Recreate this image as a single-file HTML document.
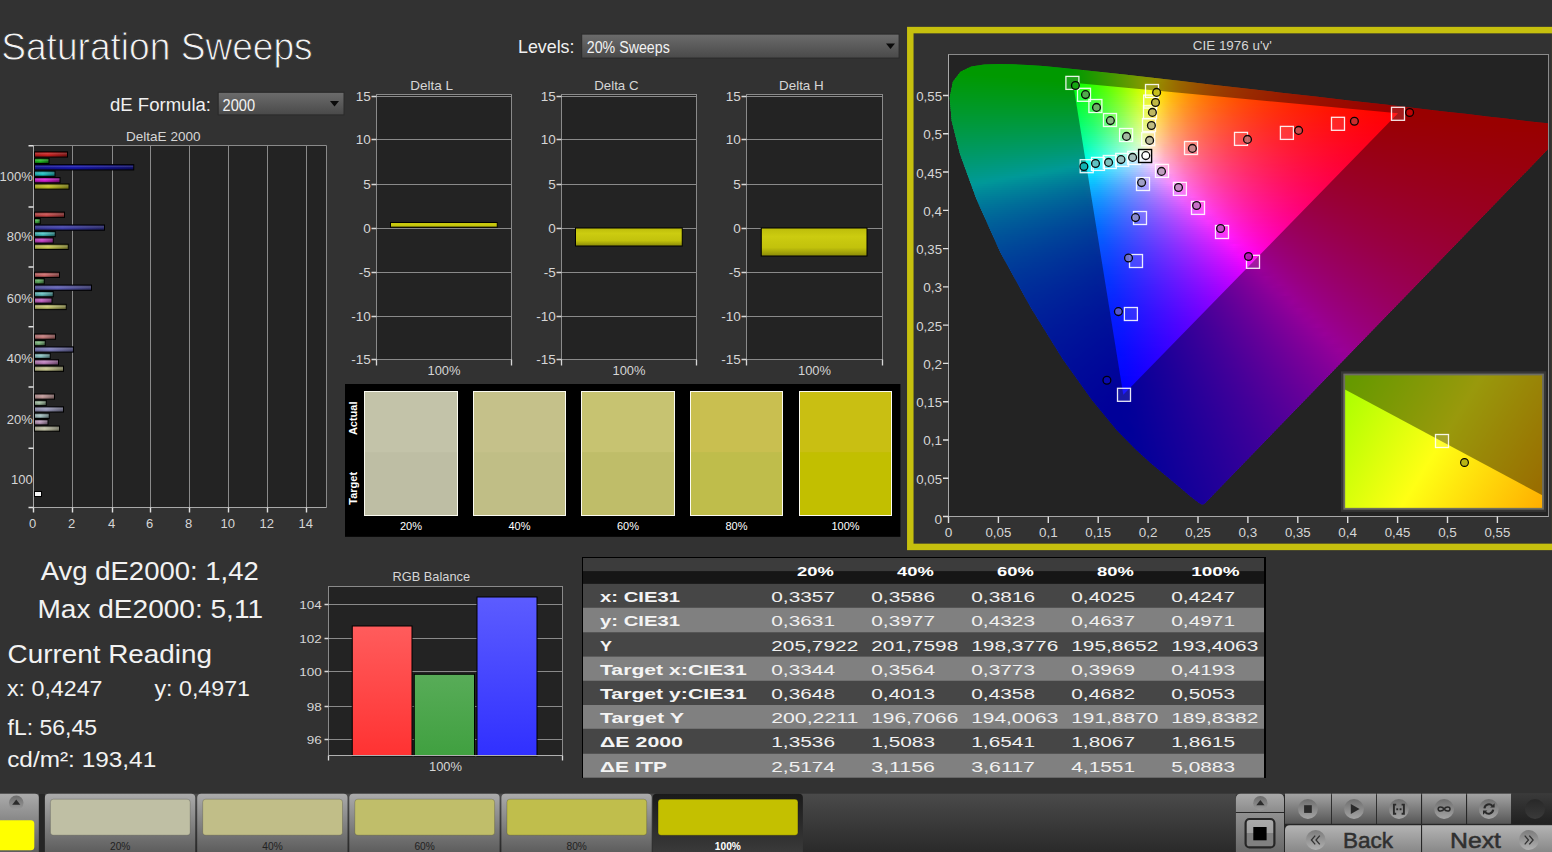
<!DOCTYPE html><html><head><meta charset="utf-8"><title>Saturation Sweeps</title>
<style>html,body{margin:0;padding:0;background:#323232;overflow:hidden}body{width:1552px;height:852px;position:relative;font-family:"Liberation Sans",sans-serif}svg{position:absolute;left:0;top:0;display:block}text{font-family:"Liberation Sans",sans-serif}</style></head><body>
<svg width="1552" height="852" viewBox="0 0 1552 852">
<defs><linearGradient id="dd" x1="0" y1="0" x2="0" y2="1"><stop offset="0" stop-color="#6c6c6c"/><stop offset="1" stop-color="#494949"/></linearGradient><linearGradient id="cyl" x1="0" y1="0" x2="0" y2="1"><stop offset="0" stop-color="#000" stop-opacity="0.3"/><stop offset="0.4" stop-color="#fff" stop-opacity="0.16"/><stop offset="0.65" stop-color="#000" stop-opacity="0"/><stop offset="1" stop-color="#000" stop-opacity="0.38"/></linearGradient><linearGradient id="b0"><stop offset="0" stop-color="#ac1a1a"/><stop offset="0.4" stop-color="#d22020"/><stop offset="1" stop-color="#7e1313"/></linearGradient><linearGradient id="b1"><stop offset="0" stop-color="#1a961a"/><stop offset="0.4" stop-color="#20b820"/><stop offset="1" stop-color="#136e13"/></linearGradient><linearGradient id="b2"><stop offset="0" stop-color="#121290"/><stop offset="0.4" stop-color="#1616b0"/><stop offset="1" stop-color="#0d0d69"/></linearGradient><linearGradient id="b3"><stop offset="0" stop-color="#1aa4a4"/><stop offset="0.4" stop-color="#20c8c8"/><stop offset="1" stop-color="#137878"/></linearGradient><linearGradient id="b4"><stop offset="0" stop-color="#b11ab1"/><stop offset="0.4" stop-color="#d820d8"/><stop offset="1" stop-color="#811381"/></linearGradient><linearGradient id="b5"><stop offset="0" stop-color="#a7a720"/><stop offset="0.4" stop-color="#cccc28"/><stop offset="1" stop-color="#7a7a18"/></linearGradient><linearGradient id="b6"><stop offset="0" stop-color="#a73c3c"/><stop offset="0.4" stop-color="#cc4a4a"/><stop offset="1" stop-color="#7a2c2c"/></linearGradient><linearGradient id="b7"><stop offset="0" stop-color="#3b933b"/><stop offset="0.4" stop-color="#48b448"/><stop offset="1" stop-color="#2b6c2b"/></linearGradient><linearGradient id="b8"><stop offset="0" stop-color="#343490"/><stop offset="0.4" stop-color="#4040b0"/><stop offset="1" stop-color="#262669"/></linearGradient><linearGradient id="b9"><stop offset="0" stop-color="#3ba0a0"/><stop offset="0.4" stop-color="#48c4c4"/><stop offset="1" stop-color="#2b7575"/></linearGradient><linearGradient id="b10"><stop offset="0" stop-color="#aa3baa"/><stop offset="0.4" stop-color="#d048d0"/><stop offset="1" stop-color="#7c2b7c"/></linearGradient><linearGradient id="b11"><stop offset="0" stop-color="#a5a543"/><stop offset="0.4" stop-color="#caca52"/><stop offset="1" stop-color="#797931"/></linearGradient><linearGradient id="b12"><stop offset="0" stop-color="#a75353"/><stop offset="0.4" stop-color="#cc6666"/><stop offset="1" stop-color="#7a3d3d"/></linearGradient><linearGradient id="b13"><stop offset="0" stop-color="#529352"/><stop offset="0.4" stop-color="#64b464"/><stop offset="1" stop-color="#3c6c3c"/></linearGradient><linearGradient id="b14"><stop offset="0" stop-color="#4e4e96"/><stop offset="0.4" stop-color="#6060b8"/><stop offset="1" stop-color="#39396e"/></linearGradient><linearGradient id="b15"><stop offset="0" stop-color="#55a0a0"/><stop offset="0.4" stop-color="#68c4c4"/><stop offset="1" stop-color="#3e7575"/></linearGradient><linearGradient id="b16"><stop offset="0" stop-color="#a755a7"/><stop offset="0.4" stop-color="#cc68cc"/><stop offset="1" stop-color="#7a3e7a"/></linearGradient><linearGradient id="b17"><stop offset="0" stop-color="#a4a45b"/><stop offset="0.4" stop-color="#c8c870"/><stop offset="1" stop-color="#787843"/></linearGradient><linearGradient id="b18"><stop offset="0" stop-color="#a76868"/><stop offset="0.4" stop-color="#cc8080"/><stop offset="1" stop-color="#7a4c4c"/></linearGradient><linearGradient id="b19"><stop offset="0" stop-color="#689868"/><stop offset="0.4" stop-color="#80ba80"/><stop offset="1" stop-color="#4c6f4c"/></linearGradient><linearGradient id="b20"><stop offset="0" stop-color="#68689d"/><stop offset="0.4" stop-color="#8080c0"/><stop offset="1" stop-color="#4c4c73"/></linearGradient><linearGradient id="b21"><stop offset="0" stop-color="#6f9f9f"/><stop offset="0.4" stop-color="#88c2c2"/><stop offset="1" stop-color="#517474"/></linearGradient><linearGradient id="b22"><stop offset="0" stop-color="#a46fa4"/><stop offset="0.4" stop-color="#c888c8"/><stop offset="1" stop-color="#785178"/></linearGradient><linearGradient id="b23"><stop offset="0" stop-color="#a4a476"/><stop offset="0.4" stop-color="#c8c890"/><stop offset="1" stop-color="#787856"/></linearGradient><linearGradient id="b24"><stop offset="0" stop-color="#a58383"/><stop offset="0.4" stop-color="#caa0a0"/><stop offset="1" stop-color="#796060"/></linearGradient><linearGradient id="b25"><stop offset="0" stop-color="#839a83"/><stop offset="0.4" stop-color="#a0bca0"/><stop offset="1" stop-color="#607060"/></linearGradient><linearGradient id="b26"><stop offset="0" stop-color="#8383a0"/><stop offset="0.4" stop-color="#a0a0c4"/><stop offset="1" stop-color="#606075"/></linearGradient><linearGradient id="b27"><stop offset="0" stop-color="#869f9f"/><stop offset="0.4" stop-color="#a4c2c2"/><stop offset="1" stop-color="#627474"/></linearGradient><linearGradient id="b28"><stop offset="0" stop-color="#9f839f"/><stop offset="0.4" stop-color="#c2a0c2"/><stop offset="1" stop-color="#746074"/></linearGradient><linearGradient id="b29"><stop offset="0" stop-color="#a4a48d"/><stop offset="0.4" stop-color="#c8c8ac"/><stop offset="1" stop-color="#787867"/></linearGradient><linearGradient id="yb" x1="0" y1="0" x2="0" y2="1"><stop offset="0" stop-color="#bcbc0a"/><stop offset="0.3" stop-color="#cccc10"/><stop offset="0.7" stop-color="#c2c20c"/><stop offset="1" stop-color="#8a8a08"/></linearGradient><linearGradient id="rr" x1="0" y1="0" x2="0" y2="1"><stop offset="0" stop-color="#ff5c5c"/><stop offset="1" stop-color="#ff3232"/></linearGradient><linearGradient id="gg" x1="0" y1="0" x2="0" y2="1"><stop offset="0" stop-color="#58ac58"/><stop offset="1" stop-color="#40a040"/></linearGradient><linearGradient id="bb" x1="0" y1="0" x2="0" y2="1"><stop offset="0" stop-color="#5c5cff"/><stop offset="1" stop-color="#3030ff"/></linearGradient><linearGradient id="c0" gradientUnits="userSpaceOnUse" x1="973.6" x2="1042.3" y1="0" y2="0"><stop offset="0.000" stop-color="#00ff00"/><stop offset="0.200" stop-color="#00ff00"/><stop offset="0.400" stop-color="#00ff00"/><stop offset="0.600" stop-color="#00ff00"/><stop offset="0.800" stop-color="#00ff00"/><stop offset="1.000" stop-color="#00ff00"/></linearGradient><linearGradient id="c1" gradientUnits="userSpaceOnUse" x1="967.2" x2="1064.4" y1="0" y2="0"><stop offset="0.000" stop-color="#00ff00"/><stop offset="0.143" stop-color="#00ff00"/><stop offset="0.286" stop-color="#00ff00"/><stop offset="0.429" stop-color="#00ff00"/><stop offset="0.571" stop-color="#00ff00"/><stop offset="0.714" stop-color="#00ff00"/><stop offset="0.857" stop-color="#00ff00"/><stop offset="1.000" stop-color="#00ff00"/></linearGradient><linearGradient id="c2" gradientUnits="userSpaceOnUse" x1="963.0" x2="1084.0" y1="0" y2="0"><stop offset="0.000" stop-color="#00ff00"/><stop offset="0.125" stop-color="#00ff00"/><stop offset="0.250" stop-color="#00ff00"/><stop offset="0.375" stop-color="#00ff00"/><stop offset="0.500" stop-color="#00ff00"/><stop offset="0.625" stop-color="#00ff00"/><stop offset="0.750" stop-color="#00ff00"/><stop offset="0.875" stop-color="#00ff00"/><stop offset="1.000" stop-color="#21ff00"/></linearGradient><linearGradient id="c3" gradientUnits="userSpaceOnUse" x1="959.3" x2="1102.5" y1="0" y2="0"><stop offset="0.000" stop-color="#00ff00"/><stop offset="0.111" stop-color="#00ff00"/><stop offset="0.222" stop-color="#00ff00"/><stop offset="0.333" stop-color="#00ff00"/><stop offset="0.444" stop-color="#00ff00"/><stop offset="0.556" stop-color="#00ff00"/><stop offset="0.667" stop-color="#00ff00"/><stop offset="0.778" stop-color="#00ff00"/><stop offset="0.889" stop-color="#27ff00"/><stop offset="1.000" stop-color="#52ff00"/></linearGradient><linearGradient id="c4" gradientUnits="userSpaceOnUse" x1="957.7" x2="1120.3" y1="0" y2="0"><stop offset="0.000" stop-color="#00ff02"/><stop offset="0.091" stop-color="#00ff00"/><stop offset="0.182" stop-color="#00ff00"/><stop offset="0.273" stop-color="#00ff00"/><stop offset="0.364" stop-color="#00ff00"/><stop offset="0.455" stop-color="#00ff00"/><stop offset="0.545" stop-color="#00ff00"/><stop offset="0.636" stop-color="#00ff00"/><stop offset="0.727" stop-color="#0bff00"/><stop offset="0.818" stop-color="#31ff00"/><stop offset="0.909" stop-color="#5bff00"/><stop offset="1.000" stop-color="#88ff00"/></linearGradient><linearGradient id="c5" gradientUnits="userSpaceOnUse" x1="956.2" x2="1138.0" y1="0" y2="0"><stop offset="0.000" stop-color="#00ff05"/><stop offset="0.083" stop-color="#00ff03"/><stop offset="0.167" stop-color="#00ff01"/><stop offset="0.250" stop-color="#00ff00"/><stop offset="0.333" stop-color="#00ff00"/><stop offset="0.417" stop-color="#00ff00"/><stop offset="0.500" stop-color="#00ff00"/><stop offset="0.583" stop-color="#00ff00"/><stop offset="0.667" stop-color="#0eff00"/><stop offset="0.750" stop-color="#36ff00"/><stop offset="0.833" stop-color="#61ff00"/><stop offset="0.917" stop-color="#91ff00"/><stop offset="1.000" stop-color="#c5ff00"/></linearGradient><linearGradient id="c6" gradientUnits="userSpaceOnUse" x1="954.7" x2="1155.6" y1="0" y2="0"><stop offset="0.000" stop-color="#00ff09"/><stop offset="0.077" stop-color="#00ff07"/><stop offset="0.154" stop-color="#00ff04"/><stop offset="0.231" stop-color="#00ff02"/><stop offset="0.308" stop-color="#00ff00"/><stop offset="0.385" stop-color="#00ff00"/><stop offset="0.462" stop-color="#00ff00"/><stop offset="0.538" stop-color="#00ff00"/><stop offset="0.615" stop-color="#10ff00"/><stop offset="0.692" stop-color="#39ff00"/><stop offset="0.769" stop-color="#65ff00"/><stop offset="0.846" stop-color="#97ff00"/><stop offset="0.923" stop-color="#cdff00"/><stop offset="1.000" stop-color="#fff500"/></linearGradient><linearGradient id="c7" gradientUnits="userSpaceOnUse" x1="953.2" x2="1173.0" y1="0" y2="0"><stop offset="0.000" stop-color="#00ff0d"/><stop offset="0.071" stop-color="#00ff0b"/><stop offset="0.143" stop-color="#00ff08"/><stop offset="0.214" stop-color="#00ff06"/><stop offset="0.286" stop-color="#00ff03"/><stop offset="0.357" stop-color="#00ff00"/><stop offset="0.429" stop-color="#00ff00"/><stop offset="0.500" stop-color="#00ff00"/><stop offset="0.571" stop-color="#10ff00"/><stop offset="0.643" stop-color="#3aff00"/><stop offset="0.714" stop-color="#68ff00"/><stop offset="0.786" stop-color="#9bff00"/><stop offset="0.857" stop-color="#d3ff00"/><stop offset="0.929" stop-color="#ffee00"/><stop offset="1.000" stop-color="#ffbd00"/></linearGradient><linearGradient id="c8" gradientUnits="userSpaceOnUse" x1="951.8" x2="1190.3" y1="0" y2="0"><stop offset="0.000" stop-color="#00ff10"/><stop offset="0.067" stop-color="#00ff0e"/><stop offset="0.133" stop-color="#00ff0c"/><stop offset="0.200" stop-color="#00ff0a"/><stop offset="0.267" stop-color="#00ff07"/><stop offset="0.333" stop-color="#00ff04"/><stop offset="0.400" stop-color="#00ff01"/><stop offset="0.467" stop-color="#00ff00"/><stop offset="0.533" stop-color="#10ff00"/><stop offset="0.600" stop-color="#3bff00"/><stop offset="0.667" stop-color="#6aff00"/><stop offset="0.733" stop-color="#9eff00"/><stop offset="0.800" stop-color="#d7ff00"/><stop offset="0.867" stop-color="#ffe900"/><stop offset="0.933" stop-color="#ffb900"/><stop offset="1.000" stop-color="#ff9600"/></linearGradient><linearGradient id="c9" gradientUnits="userSpaceOnUse" x1="951.4" x2="1207.6" y1="0" y2="0"><stop offset="0.000" stop-color="#00ff14"/><stop offset="0.059" stop-color="#00ff12"/><stop offset="0.118" stop-color="#00ff10"/><stop offset="0.176" stop-color="#00ff0e"/><stop offset="0.235" stop-color="#00ff0c"/><stop offset="0.294" stop-color="#00ff09"/><stop offset="0.353" stop-color="#00ff07"/><stop offset="0.412" stop-color="#00ff04"/><stop offset="0.471" stop-color="#00ff01"/><stop offset="0.529" stop-color="#24ff00"/><stop offset="0.588" stop-color="#4fff00"/><stop offset="0.647" stop-color="#7eff00"/><stop offset="0.706" stop-color="#b1ff00"/><stop offset="0.765" stop-color="#eaff00"/><stop offset="0.824" stop-color="#ffda00"/><stop offset="0.882" stop-color="#ffb000"/><stop offset="0.941" stop-color="#ff9100"/><stop offset="1.000" stop-color="#ff7800"/></linearGradient><linearGradient id="c10" gradientUnits="userSpaceOnUse" x1="951.0" x2="1224.9" y1="0" y2="0"><stop offset="0.000" stop-color="#00ff18"/><stop offset="0.056" stop-color="#00ff16"/><stop offset="0.111" stop-color="#00ff14"/><stop offset="0.167" stop-color="#00ff12"/><stop offset="0.222" stop-color="#00ff10"/><stop offset="0.278" stop-color="#00ff0d"/><stop offset="0.333" stop-color="#00ff0b"/><stop offset="0.389" stop-color="#00ff08"/><stop offset="0.444" stop-color="#00ff05"/><stop offset="0.500" stop-color="#26ff02"/><stop offset="0.556" stop-color="#52ff00"/><stop offset="0.611" stop-color="#82ff00"/><stop offset="0.667" stop-color="#b6ff00"/><stop offset="0.722" stop-color="#f1ff00"/><stop offset="0.778" stop-color="#ffd400"/><stop offset="0.833" stop-color="#ffab00"/><stop offset="0.889" stop-color="#ff8c00"/><stop offset="0.944" stop-color="#ff7500"/><stop offset="1.000" stop-color="#ff6200"/></linearGradient><linearGradient id="c11" gradientUnits="userSpaceOnUse" x1="950.6" x2="1242.2" y1="0" y2="0"><stop offset="0.000" stop-color="#00ff1b"/><stop offset="0.053" stop-color="#00ff19"/><stop offset="0.105" stop-color="#00ff18"/><stop offset="0.158" stop-color="#00ff16"/><stop offset="0.211" stop-color="#00ff14"/><stop offset="0.263" stop-color="#00ff12"/><stop offset="0.316" stop-color="#00ff0f"/><stop offset="0.368" stop-color="#00ff0d"/><stop offset="0.421" stop-color="#00ff0a"/><stop offset="0.474" stop-color="#28ff07"/><stop offset="0.526" stop-color="#54ff03"/><stop offset="0.579" stop-color="#85ff00"/><stop offset="0.632" stop-color="#bbff00"/><stop offset="0.684" stop-color="#f7ff00"/><stop offset="0.737" stop-color="#ffcf00"/><stop offset="0.789" stop-color="#ffa700"/><stop offset="0.842" stop-color="#ff8900"/><stop offset="0.895" stop-color="#ff7100"/><stop offset="0.947" stop-color="#ff5f00"/><stop offset="1.000" stop-color="#ff4f00"/></linearGradient><linearGradient id="c12" gradientUnits="userSpaceOnUse" x1="950.2" x2="1259.6" y1="0" y2="0"><stop offset="0.000" stop-color="#00ff1f"/><stop offset="0.050" stop-color="#00ff1d"/><stop offset="0.100" stop-color="#00ff1c"/><stop offset="0.150" stop-color="#00ff1a"/><stop offset="0.200" stop-color="#00ff18"/><stop offset="0.250" stop-color="#00ff16"/><stop offset="0.300" stop-color="#00ff13"/><stop offset="0.350" stop-color="#00ff11"/><stop offset="0.400" stop-color="#00ff0e"/><stop offset="0.450" stop-color="#29ff0b"/><stop offset="0.500" stop-color="#56ff08"/><stop offset="0.550" stop-color="#88ff05"/><stop offset="0.600" stop-color="#bfff01"/><stop offset="0.650" stop-color="#fdff00"/><stop offset="0.700" stop-color="#ffca00"/><stop offset="0.750" stop-color="#ffa300"/><stop offset="0.800" stop-color="#ff8500"/><stop offset="0.850" stop-color="#ff6e00"/><stop offset="0.900" stop-color="#ff5c00"/><stop offset="0.950" stop-color="#ff4d00"/><stop offset="1.000" stop-color="#ff4000"/></linearGradient><linearGradient id="c13" gradientUnits="userSpaceOnUse" x1="949.8" x2="1277.0" y1="0" y2="0"><stop offset="0.000" stop-color="#00ff22"/><stop offset="0.048" stop-color="#00ff21"/><stop offset="0.095" stop-color="#00ff1f"/><stop offset="0.143" stop-color="#00ff1e"/><stop offset="0.190" stop-color="#00ff1c"/><stop offset="0.238" stop-color="#00ff1a"/><stop offset="0.286" stop-color="#00ff18"/><stop offset="0.333" stop-color="#00ff16"/><stop offset="0.381" stop-color="#00ff13"/><stop offset="0.429" stop-color="#2aff10"/><stop offset="0.476" stop-color="#58ff0d"/><stop offset="0.524" stop-color="#8bff0a"/><stop offset="0.571" stop-color="#c3ff06"/><stop offset="0.619" stop-color="#fffc02"/><stop offset="0.667" stop-color="#ffc600"/><stop offset="0.714" stop-color="#ff9f00"/><stop offset="0.762" stop-color="#ff8200"/><stop offset="0.810" stop-color="#ff6c00"/><stop offset="0.857" stop-color="#ff5a00"/><stop offset="0.905" stop-color="#ff4b00"/><stop offset="0.952" stop-color="#ff3e00"/><stop offset="1.000" stop-color="#ff3400"/></linearGradient><linearGradient id="c14" gradientUnits="userSpaceOnUse" x1="949.4" x2="1294.2" y1="0" y2="0"><stop offset="0.000" stop-color="#00ff26"/><stop offset="0.045" stop-color="#00ff25"/><stop offset="0.091" stop-color="#00ff23"/><stop offset="0.136" stop-color="#00ff22"/><stop offset="0.182" stop-color="#00ff20"/><stop offset="0.227" stop-color="#00ff1e"/><stop offset="0.273" stop-color="#00ff1c"/><stop offset="0.318" stop-color="#00ff1a"/><stop offset="0.364" stop-color="#00ff18"/><stop offset="0.409" stop-color="#2bff15"/><stop offset="0.455" stop-color="#59ff13"/><stop offset="0.500" stop-color="#8dff0f"/><stop offset="0.545" stop-color="#c6ff0c"/><stop offset="0.591" stop-color="#fff808"/><stop offset="0.636" stop-color="#ffc303"/><stop offset="0.682" stop-color="#ff9c00"/><stop offset="0.727" stop-color="#ff8000"/><stop offset="0.773" stop-color="#ff6900"/><stop offset="0.818" stop-color="#ff5700"/><stop offset="0.864" stop-color="#ff4900"/><stop offset="0.909" stop-color="#ff3d00"/><stop offset="0.955" stop-color="#ff3200"/><stop offset="1.000" stop-color="#ff2900"/></linearGradient><linearGradient id="c15" gradientUnits="userSpaceOnUse" x1="949.0" x2="1311.5" y1="0" y2="0"><stop offset="0.000" stop-color="#00ff2a"/><stop offset="0.043" stop-color="#00ff29"/><stop offset="0.087" stop-color="#00ff27"/><stop offset="0.130" stop-color="#00ff26"/><stop offset="0.174" stop-color="#00ff24"/><stop offset="0.217" stop-color="#00ff23"/><stop offset="0.261" stop-color="#00ff21"/><stop offset="0.304" stop-color="#00ff1f"/><stop offset="0.348" stop-color="#00ff1d"/><stop offset="0.391" stop-color="#2bff1a"/><stop offset="0.435" stop-color="#5aff18"/><stop offset="0.478" stop-color="#8fff15"/><stop offset="0.522" stop-color="#c9ff12"/><stop offset="0.565" stop-color="#fff40e"/><stop offset="0.609" stop-color="#ffbf08"/><stop offset="0.652" stop-color="#ff9a03"/><stop offset="0.696" stop-color="#ff7d00"/><stop offset="0.739" stop-color="#ff6700"/><stop offset="0.783" stop-color="#ff5600"/><stop offset="0.826" stop-color="#ff4700"/><stop offset="0.870" stop-color="#ff3b00"/><stop offset="0.913" stop-color="#ff3100"/><stop offset="0.957" stop-color="#ff2800"/><stop offset="1.000" stop-color="#ff2100"/></linearGradient><linearGradient id="c16" gradientUnits="userSpaceOnUse" x1="948.7" x2="1328.8" y1="0" y2="0"><stop offset="0.000" stop-color="#00ff2e"/><stop offset="0.042" stop-color="#00ff2c"/><stop offset="0.083" stop-color="#00ff2b"/><stop offset="0.125" stop-color="#00ff2a"/><stop offset="0.167" stop-color="#00ff29"/><stop offset="0.208" stop-color="#00ff27"/><stop offset="0.250" stop-color="#00ff25"/><stop offset="0.292" stop-color="#00ff24"/><stop offset="0.333" stop-color="#00ff22"/><stop offset="0.375" stop-color="#2cff20"/><stop offset="0.417" stop-color="#5bff1d"/><stop offset="0.458" stop-color="#91ff1b"/><stop offset="0.500" stop-color="#ccff18"/><stop offset="0.542" stop-color="#fff113"/><stop offset="0.583" stop-color="#ffbc0d"/><stop offset="0.625" stop-color="#ff9708"/><stop offset="0.667" stop-color="#ff7b04"/><stop offset="0.708" stop-color="#ff6501"/><stop offset="0.750" stop-color="#ff5400"/><stop offset="0.792" stop-color="#ff4500"/><stop offset="0.833" stop-color="#ff3a00"/><stop offset="0.875" stop-color="#ff2f00"/><stop offset="0.917" stop-color="#ff2700"/><stop offset="0.958" stop-color="#ff1f00"/><stop offset="1.000" stop-color="#ff1900"/></linearGradient><linearGradient id="c17" gradientUnits="userSpaceOnUse" x1="948.7" x2="1346.1" y1="0" y2="0"><stop offset="0.000" stop-color="#00ff31"/><stop offset="0.040" stop-color="#00ff30"/><stop offset="0.080" stop-color="#00ff2f"/><stop offset="0.120" stop-color="#00ff2e"/><stop offset="0.160" stop-color="#00ff2d"/><stop offset="0.200" stop-color="#00ff2c"/><stop offset="0.240" stop-color="#00ff2a"/><stop offset="0.280" stop-color="#00ff29"/><stop offset="0.320" stop-color="#01ff27"/><stop offset="0.360" stop-color="#2dff25"/><stop offset="0.400" stop-color="#5dff23"/><stop offset="0.440" stop-color="#93ff20"/><stop offset="0.480" stop-color="#cfff1e"/><stop offset="0.520" stop-color="#ffed19"/><stop offset="0.560" stop-color="#ffb911"/><stop offset="0.600" stop-color="#ff940c"/><stop offset="0.640" stop-color="#ff7907"/><stop offset="0.680" stop-color="#ff6304"/><stop offset="0.720" stop-color="#ff5201"/><stop offset="0.760" stop-color="#ff4400"/><stop offset="0.800" stop-color="#ff3800"/><stop offset="0.840" stop-color="#ff2e00"/><stop offset="0.880" stop-color="#ff2600"/><stop offset="0.920" stop-color="#ff1e00"/><stop offset="0.960" stop-color="#ff1800"/><stop offset="1.000" stop-color="#ff1200"/></linearGradient><linearGradient id="c18" gradientUnits="userSpaceOnUse" x1="948.9" x2="1363.4" y1="0" y2="0"><stop offset="0.000" stop-color="#00ff35"/><stop offset="0.038" stop-color="#00ff34"/><stop offset="0.077" stop-color="#00ff33"/><stop offset="0.115" stop-color="#00ff32"/><stop offset="0.154" stop-color="#00ff31"/><stop offset="0.192" stop-color="#00ff30"/><stop offset="0.231" stop-color="#00ff2f"/><stop offset="0.269" stop-color="#00ff2d"/><stop offset="0.308" stop-color="#01ff2c"/><stop offset="0.346" stop-color="#2eff2a"/><stop offset="0.385" stop-color="#5fff28"/><stop offset="0.423" stop-color="#95ff26"/><stop offset="0.462" stop-color="#d2ff24"/><stop offset="0.500" stop-color="#ffe91f"/><stop offset="0.538" stop-color="#ffb616"/><stop offset="0.577" stop-color="#ff9210"/><stop offset="0.615" stop-color="#ff760b"/><stop offset="0.654" stop-color="#ff6107"/><stop offset="0.692" stop-color="#ff5004"/><stop offset="0.731" stop-color="#ff4202"/><stop offset="0.769" stop-color="#ff3700"/><stop offset="0.808" stop-color="#ff2d00"/><stop offset="0.846" stop-color="#ff2400"/><stop offset="0.885" stop-color="#ff1d00"/><stop offset="0.923" stop-color="#ff1700"/><stop offset="0.962" stop-color="#ff1100"/><stop offset="1.000" stop-color="#ff0c00"/></linearGradient><linearGradient id="c19" gradientUnits="userSpaceOnUse" x1="949.1" x2="1380.8" y1="0" y2="0"><stop offset="0.000" stop-color="#00ff39"/><stop offset="0.037" stop-color="#00ff38"/><stop offset="0.074" stop-color="#00ff37"/><stop offset="0.111" stop-color="#00ff36"/><stop offset="0.148" stop-color="#00ff36"/><stop offset="0.185" stop-color="#00ff35"/><stop offset="0.222" stop-color="#00ff33"/><stop offset="0.259" stop-color="#00ff32"/><stop offset="0.296" stop-color="#02ff31"/><stop offset="0.333" stop-color="#2fff30"/><stop offset="0.370" stop-color="#61ff2e"/><stop offset="0.407" stop-color="#98ff2c"/><stop offset="0.444" stop-color="#d6ff2a"/><stop offset="0.481" stop-color="#ffe524"/><stop offset="0.519" stop-color="#ffb31a"/><stop offset="0.556" stop-color="#ff8f14"/><stop offset="0.593" stop-color="#ff740e"/><stop offset="0.630" stop-color="#ff5f0a"/><stop offset="0.667" stop-color="#ff4e07"/><stop offset="0.704" stop-color="#ff4104"/><stop offset="0.741" stop-color="#ff3502"/><stop offset="0.778" stop-color="#ff2c00"/><stop offset="0.815" stop-color="#ff2300"/><stop offset="0.852" stop-color="#ff1c00"/><stop offset="0.889" stop-color="#ff1600"/><stop offset="0.926" stop-color="#ff1000"/><stop offset="0.963" stop-color="#ff0b00"/><stop offset="1.000" stop-color="#ff0700"/></linearGradient><linearGradient id="c20" gradientUnits="userSpaceOnUse" x1="949.2" x2="1398.2" y1="0" y2="0"><stop offset="0.000" stop-color="#00ff3d"/><stop offset="0.034" stop-color="#00ff3c"/><stop offset="0.069" stop-color="#00ff3b"/><stop offset="0.103" stop-color="#00ff3b"/><stop offset="0.138" stop-color="#00ff3a"/><stop offset="0.172" stop-color="#00ff39"/><stop offset="0.207" stop-color="#00ff38"/><stop offset="0.241" stop-color="#00ff38"/><stop offset="0.276" stop-color="#00ff37"/><stop offset="0.310" stop-color="#21ff35"/><stop offset="0.345" stop-color="#50ff34"/><stop offset="0.379" stop-color="#84ff33"/><stop offset="0.414" stop-color="#beff31"/><stop offset="0.448" stop-color="#ffff30"/><stop offset="0.483" stop-color="#ffc624"/><stop offset="0.517" stop-color="#ff9e1b"/><stop offset="0.552" stop-color="#ff8015"/><stop offset="0.586" stop-color="#ff6910"/><stop offset="0.621" stop-color="#ff570c"/><stop offset="0.655" stop-color="#ff4809"/><stop offset="0.690" stop-color="#ff3b06"/><stop offset="0.724" stop-color="#ff3104"/><stop offset="0.759" stop-color="#ff2802"/><stop offset="0.793" stop-color="#ff2000"/><stop offset="0.828" stop-color="#ff1a00"/><stop offset="0.862" stop-color="#ff1400"/><stop offset="0.897" stop-color="#ff0f00"/><stop offset="0.931" stop-color="#ff0a00"/><stop offset="0.966" stop-color="#ff0600"/><stop offset="1.000" stop-color="#ff0200"/></linearGradient><linearGradient id="c21" gradientUnits="userSpaceOnUse" x1="949.4" x2="1415.7" y1="0" y2="0"><stop offset="0.000" stop-color="#00ff40"/><stop offset="0.033" stop-color="#00ff40"/><stop offset="0.067" stop-color="#00ff40"/><stop offset="0.100" stop-color="#00ff3f"/><stop offset="0.133" stop-color="#00ff3f"/><stop offset="0.167" stop-color="#00ff3e"/><stop offset="0.200" stop-color="#00ff3d"/><stop offset="0.233" stop-color="#00ff3d"/><stop offset="0.267" stop-color="#00ff3c"/><stop offset="0.300" stop-color="#23ff3b"/><stop offset="0.333" stop-color="#52ff3a"/><stop offset="0.367" stop-color="#87ff39"/><stop offset="0.400" stop-color="#c2ff38"/><stop offset="0.433" stop-color="#fffa35"/><stop offset="0.467" stop-color="#ffc228"/><stop offset="0.500" stop-color="#ff9a1f"/><stop offset="0.533" stop-color="#ff7d18"/><stop offset="0.567" stop-color="#ff6713"/><stop offset="0.600" stop-color="#ff550f"/><stop offset="0.633" stop-color="#ff460b"/><stop offset="0.667" stop-color="#ff3a09"/><stop offset="0.700" stop-color="#ff3006"/><stop offset="0.733" stop-color="#ff2704"/><stop offset="0.767" stop-color="#ff1f02"/><stop offset="0.800" stop-color="#ff1901"/><stop offset="0.833" stop-color="#ff1300"/><stop offset="0.867" stop-color="#ff0e00"/><stop offset="0.900" stop-color="#ff0900"/><stop offset="0.933" stop-color="#ff0500"/><stop offset="0.967" stop-color="#ff0100"/><stop offset="1.000" stop-color="#ff0000"/></linearGradient><linearGradient id="c22" gradientUnits="userSpaceOnUse" x1="949.6" x2="1432.9" y1="0" y2="0"><stop offset="0.000" stop-color="#00ff44"/><stop offset="0.032" stop-color="#00ff44"/><stop offset="0.065" stop-color="#00ff44"/><stop offset="0.097" stop-color="#00ff43"/><stop offset="0.129" stop-color="#00ff43"/><stop offset="0.161" stop-color="#00ff43"/><stop offset="0.194" stop-color="#00ff42"/><stop offset="0.226" stop-color="#00ff42"/><stop offset="0.258" stop-color="#00ff41"/><stop offset="0.290" stop-color="#24ff41"/><stop offset="0.323" stop-color="#54ff40"/><stop offset="0.355" stop-color="#8aff3f"/><stop offset="0.387" stop-color="#c6ff3e"/><stop offset="0.419" stop-color="#fff53b"/><stop offset="0.452" stop-color="#ffbe2d"/><stop offset="0.484" stop-color="#ff9823"/><stop offset="0.516" stop-color="#ff7b1c"/><stop offset="0.548" stop-color="#ff6416"/><stop offset="0.581" stop-color="#ff5312"/><stop offset="0.613" stop-color="#ff440e"/><stop offset="0.645" stop-color="#ff380b"/><stop offset="0.677" stop-color="#ff2e08"/><stop offset="0.710" stop-color="#ff2506"/><stop offset="0.742" stop-color="#ff1e04"/><stop offset="0.774" stop-color="#ff1703"/><stop offset="0.806" stop-color="#ff1201"/><stop offset="0.839" stop-color="#ff0d00"/><stop offset="0.871" stop-color="#ff0800"/><stop offset="0.903" stop-color="#ff0400"/><stop offset="0.935" stop-color="#ff0000"/><stop offset="0.968" stop-color="#ff0000"/><stop offset="1.000" stop-color="#ff0000"/></linearGradient><linearGradient id="c23" gradientUnits="userSpaceOnUse" x1="949.8" x2="1450.2" y1="0" y2="0"><stop offset="0.000" stop-color="#00ff48"/><stop offset="0.031" stop-color="#00ff48"/><stop offset="0.062" stop-color="#00ff48"/><stop offset="0.094" stop-color="#00ff48"/><stop offset="0.125" stop-color="#00ff48"/><stop offset="0.156" stop-color="#00ff47"/><stop offset="0.188" stop-color="#00ff47"/><stop offset="0.219" stop-color="#00ff47"/><stop offset="0.250" stop-color="#00ff47"/><stop offset="0.281" stop-color="#25ff46"/><stop offset="0.313" stop-color="#56ff46"/><stop offset="0.344" stop-color="#8cff45"/><stop offset="0.375" stop-color="#c9ff45"/><stop offset="0.406" stop-color="#fff141"/><stop offset="0.438" stop-color="#ffbb32"/><stop offset="0.469" stop-color="#ff9527"/><stop offset="0.500" stop-color="#ff781f"/><stop offset="0.531" stop-color="#ff6219"/><stop offset="0.562" stop-color="#ff5114"/><stop offset="0.594" stop-color="#ff4311"/><stop offset="0.625" stop-color="#ff370d"/><stop offset="0.656" stop-color="#ff2d0b"/><stop offset="0.687" stop-color="#ff2408"/><stop offset="0.719" stop-color="#ff1d06"/><stop offset="0.750" stop-color="#ff1604"/><stop offset="0.781" stop-color="#ff1103"/><stop offset="0.812" stop-color="#ff0c01"/><stop offset="0.844" stop-color="#ff0700"/><stop offset="0.875" stop-color="#ff0300"/><stop offset="0.906" stop-color="#ff0000"/><stop offset="0.938" stop-color="#ff0000"/><stop offset="0.969" stop-color="#ff0000"/><stop offset="1.000" stop-color="#ff0000"/></linearGradient><linearGradient id="c24" gradientUnits="userSpaceOnUse" x1="949.9" x2="1467.4" y1="0" y2="0"><stop offset="0.000" stop-color="#00ff4c"/><stop offset="0.030" stop-color="#00ff4c"/><stop offset="0.061" stop-color="#00ff4c"/><stop offset="0.091" stop-color="#00ff4c"/><stop offset="0.121" stop-color="#00ff4c"/><stop offset="0.152" stop-color="#00ff4c"/><stop offset="0.182" stop-color="#00ff4c"/><stop offset="0.212" stop-color="#00ff4c"/><stop offset="0.242" stop-color="#00ff4c"/><stop offset="0.273" stop-color="#26ff4c"/><stop offset="0.303" stop-color="#58ff4c"/><stop offset="0.333" stop-color="#8fff4c"/><stop offset="0.364" stop-color="#cdff4c"/><stop offset="0.394" stop-color="#ffed46"/><stop offset="0.424" stop-color="#ffb837"/><stop offset="0.455" stop-color="#ff922b"/><stop offset="0.485" stop-color="#ff7623"/><stop offset="0.515" stop-color="#ff611c"/><stop offset="0.545" stop-color="#ff4f17"/><stop offset="0.576" stop-color="#ff4113"/><stop offset="0.606" stop-color="#ff3510"/><stop offset="0.636" stop-color="#ff2c0d"/><stop offset="0.667" stop-color="#ff230a"/><stop offset="0.697" stop-color="#ff1c08"/><stop offset="0.727" stop-color="#ff1506"/><stop offset="0.758" stop-color="#ff1004"/><stop offset="0.788" stop-color="#ff0b03"/><stop offset="0.818" stop-color="#ff0602"/><stop offset="0.848" stop-color="#ff0200"/><stop offset="0.879" stop-color="#ff0000"/><stop offset="0.909" stop-color="#ff0000"/><stop offset="0.939" stop-color="#ff0000"/><stop offset="0.970" stop-color="#ff0000"/><stop offset="1.000" stop-color="#ff0000"/></linearGradient><linearGradient id="c25" gradientUnits="userSpaceOnUse" x1="950.1" x2="1484.9" y1="0" y2="0"><stop offset="0.000" stop-color="#00ff50"/><stop offset="0.029" stop-color="#00ff50"/><stop offset="0.059" stop-color="#00ff51"/><stop offset="0.088" stop-color="#00ff51"/><stop offset="0.118" stop-color="#00ff51"/><stop offset="0.147" stop-color="#00ff51"/><stop offset="0.176" stop-color="#00ff51"/><stop offset="0.206" stop-color="#00ff51"/><stop offset="0.235" stop-color="#00ff52"/><stop offset="0.265" stop-color="#27ff52"/><stop offset="0.294" stop-color="#59ff52"/><stop offset="0.324" stop-color="#91ff52"/><stop offset="0.353" stop-color="#d0ff53"/><stop offset="0.382" stop-color="#ffe94c"/><stop offset="0.412" stop-color="#ffb53b"/><stop offset="0.441" stop-color="#ff902f"/><stop offset="0.471" stop-color="#ff7426"/><stop offset="0.500" stop-color="#ff5f20"/><stop offset="0.529" stop-color="#ff4d1a"/><stop offset="0.559" stop-color="#ff4016"/><stop offset="0.588" stop-color="#ff3412"/><stop offset="0.618" stop-color="#ff2a0f"/><stop offset="0.647" stop-color="#ff220c"/><stop offset="0.676" stop-color="#ff1b0a"/><stop offset="0.706" stop-color="#ff1408"/><stop offset="0.735" stop-color="#ff0f06"/><stop offset="0.765" stop-color="#ff0a04"/><stop offset="0.794" stop-color="#ff0503"/><stop offset="0.824" stop-color="#ff0102"/><stop offset="0.853" stop-color="#ff0001"/><stop offset="0.882" stop-color="#ff0000"/><stop offset="0.912" stop-color="#ff0000"/><stop offset="0.941" stop-color="#ff0000"/><stop offset="0.971" stop-color="#ff0000"/><stop offset="1.000" stop-color="#ff0000"/></linearGradient><linearGradient id="c26" gradientUnits="userSpaceOnUse" x1="950.3" x2="1502.2" y1="0" y2="0"><stop offset="0.000" stop-color="#00ff54"/><stop offset="0.029" stop-color="#00ff55"/><stop offset="0.057" stop-color="#00ff55"/><stop offset="0.086" stop-color="#00ff55"/><stop offset="0.114" stop-color="#00ff56"/><stop offset="0.143" stop-color="#00ff56"/><stop offset="0.171" stop-color="#00ff56"/><stop offset="0.200" stop-color="#00ff57"/><stop offset="0.229" stop-color="#00ff57"/><stop offset="0.257" stop-color="#28ff58"/><stop offset="0.286" stop-color="#5bff58"/><stop offset="0.314" stop-color="#94ff59"/><stop offset="0.343" stop-color="#d3ff5a"/><stop offset="0.371" stop-color="#ffe551"/><stop offset="0.400" stop-color="#ffb240"/><stop offset="0.429" stop-color="#ff8d33"/><stop offset="0.457" stop-color="#ff722a"/><stop offset="0.486" stop-color="#ff5d23"/><stop offset="0.514" stop-color="#ff4c1d"/><stop offset="0.543" stop-color="#ff3e18"/><stop offset="0.571" stop-color="#ff3314"/><stop offset="0.600" stop-color="#ff2911"/><stop offset="0.629" stop-color="#ff210e"/><stop offset="0.657" stop-color="#ff1a0c"/><stop offset="0.686" stop-color="#ff130a"/><stop offset="0.714" stop-color="#ff0e08"/><stop offset="0.743" stop-color="#ff0906"/><stop offset="0.771" stop-color="#ff0505"/><stop offset="0.800" stop-color="#ff0103"/><stop offset="0.829" stop-color="#ff0002"/><stop offset="0.857" stop-color="#ff0001"/><stop offset="0.886" stop-color="#ff0000"/><stop offset="0.914" stop-color="#ff0000"/><stop offset="0.943" stop-color="#ff0000"/><stop offset="0.971" stop-color="#ff0000"/><stop offset="1.000" stop-color="#ff0000"/></linearGradient><linearGradient id="c27" gradientUnits="userSpaceOnUse" x1="950.5" x2="1519.4" y1="0" y2="0"><stop offset="0.000" stop-color="#00ff58"/><stop offset="0.028" stop-color="#00ff59"/><stop offset="0.056" stop-color="#00ff59"/><stop offset="0.083" stop-color="#00ff5a"/><stop offset="0.111" stop-color="#00ff5a"/><stop offset="0.139" stop-color="#00ff5b"/><stop offset="0.167" stop-color="#00ff5c"/><stop offset="0.194" stop-color="#00ff5c"/><stop offset="0.222" stop-color="#00ff5d"/><stop offset="0.250" stop-color="#29ff5e"/><stop offset="0.278" stop-color="#5cff5f"/><stop offset="0.306" stop-color="#96ff60"/><stop offset="0.333" stop-color="#d6ff61"/><stop offset="0.361" stop-color="#ffe257"/><stop offset="0.389" stop-color="#ffaf45"/><stop offset="0.417" stop-color="#ff8b37"/><stop offset="0.444" stop-color="#ff702d"/><stop offset="0.472" stop-color="#ff5b26"/><stop offset="0.500" stop-color="#ff4a20"/><stop offset="0.528" stop-color="#ff3d1b"/><stop offset="0.556" stop-color="#ff3117"/><stop offset="0.583" stop-color="#ff2813"/><stop offset="0.611" stop-color="#ff2010"/><stop offset="0.639" stop-color="#ff190e"/><stop offset="0.667" stop-color="#ff120b"/><stop offset="0.694" stop-color="#ff0d09"/><stop offset="0.722" stop-color="#ff0808"/><stop offset="0.750" stop-color="#ff0406"/><stop offset="0.778" stop-color="#ff0005"/><stop offset="0.806" stop-color="#ff0003"/><stop offset="0.833" stop-color="#ff0002"/><stop offset="0.861" stop-color="#ff0001"/><stop offset="0.889" stop-color="#ff0000"/><stop offset="0.917" stop-color="#ff0000"/><stop offset="0.944" stop-color="#ff0000"/><stop offset="0.972" stop-color="#ff0000"/><stop offset="1.000" stop-color="#ff0000"/></linearGradient><linearGradient id="c28" gradientUnits="userSpaceOnUse" x1="950.6" x2="1536.8" y1="0" y2="0"><stop offset="0.000" stop-color="#00ff5d"/><stop offset="0.027" stop-color="#00ff5d"/><stop offset="0.054" stop-color="#00ff5e"/><stop offset="0.081" stop-color="#00ff5e"/><stop offset="0.108" stop-color="#00ff5f"/><stop offset="0.135" stop-color="#00ff60"/><stop offset="0.162" stop-color="#00ff61"/><stop offset="0.189" stop-color="#00ff62"/><stop offset="0.216" stop-color="#00ff63"/><stop offset="0.243" stop-color="#2aff64"/><stop offset="0.270" stop-color="#5eff65"/><stop offset="0.297" stop-color="#98ff67"/><stop offset="0.324" stop-color="#daff68"/><stop offset="0.351" stop-color="#ffde5d"/><stop offset="0.378" stop-color="#ffac49"/><stop offset="0.405" stop-color="#ff883b"/><stop offset="0.432" stop-color="#ff6e31"/><stop offset="0.459" stop-color="#ff5929"/><stop offset="0.486" stop-color="#ff4923"/><stop offset="0.514" stop-color="#ff3b1d"/><stop offset="0.541" stop-color="#ff3019"/><stop offset="0.568" stop-color="#ff2715"/><stop offset="0.595" stop-color="#ff1f12"/><stop offset="0.622" stop-color="#ff180f"/><stop offset="0.649" stop-color="#ff110d"/><stop offset="0.676" stop-color="#ff0c0b"/><stop offset="0.703" stop-color="#ff0709"/><stop offset="0.730" stop-color="#ff0308"/><stop offset="0.757" stop-color="#ff0006"/><stop offset="0.784" stop-color="#ff0005"/><stop offset="0.811" stop-color="#ff0003"/><stop offset="0.838" stop-color="#ff0002"/><stop offset="0.865" stop-color="#ff0001"/><stop offset="0.892" stop-color="#ff0000"/><stop offset="0.919" stop-color="#ff0000"/><stop offset="0.946" stop-color="#ff0000"/><stop offset="0.973" stop-color="#ff0000"/><stop offset="1.000" stop-color="#ff0000"/></linearGradient><linearGradient id="c29" gradientUnits="userSpaceOnUse" x1="951.0" x2="1548.5" y1="0" y2="0"><stop offset="0.000" stop-color="#00ff61"/><stop offset="0.026" stop-color="#00ff61"/><stop offset="0.053" stop-color="#00ff62"/><stop offset="0.079" stop-color="#00ff63"/><stop offset="0.105" stop-color="#00ff64"/><stop offset="0.132" stop-color="#00ff65"/><stop offset="0.158" stop-color="#00ff66"/><stop offset="0.184" stop-color="#00ff67"/><stop offset="0.211" stop-color="#00ff69"/><stop offset="0.237" stop-color="#27ff6a"/><stop offset="0.263" stop-color="#5bff6c"/><stop offset="0.289" stop-color="#94ff6e"/><stop offset="0.316" stop-color="#d6ff70"/><stop offset="0.342" stop-color="#ffe265"/><stop offset="0.368" stop-color="#ffaf50"/><stop offset="0.395" stop-color="#ff8a41"/><stop offset="0.421" stop-color="#ff6f36"/><stop offset="0.447" stop-color="#ff5a2d"/><stop offset="0.474" stop-color="#ff4a26"/><stop offset="0.500" stop-color="#ff3c21"/><stop offset="0.526" stop-color="#ff311c"/><stop offset="0.553" stop-color="#ff2718"/><stop offset="0.579" stop-color="#ff1f15"/><stop offset="0.605" stop-color="#ff1812"/><stop offset="0.632" stop-color="#ff120f"/><stop offset="0.658" stop-color="#ff0c0d"/><stop offset="0.684" stop-color="#ff080b"/><stop offset="0.711" stop-color="#ff0309"/><stop offset="0.737" stop-color="#ff0008"/><stop offset="0.763" stop-color="#ff0006"/><stop offset="0.789" stop-color="#ff0005"/><stop offset="0.816" stop-color="#ff0004"/><stop offset="0.842" stop-color="#ff0003"/><stop offset="0.868" stop-color="#ff0002"/><stop offset="0.895" stop-color="#ff0001"/><stop offset="0.921" stop-color="#ff0000"/><stop offset="0.947" stop-color="#ff0000"/><stop offset="0.974" stop-color="#ff0000"/><stop offset="1.000" stop-color="#ff0000"/></linearGradient><linearGradient id="c30" gradientUnits="userSpaceOnUse" x1="951.5" x2="1548.5" y1="0" y2="0"><stop offset="0.000" stop-color="#00ff65"/><stop offset="0.026" stop-color="#00ff66"/><stop offset="0.053" stop-color="#00ff67"/><stop offset="0.079" stop-color="#00ff68"/><stop offset="0.105" stop-color="#00ff69"/><stop offset="0.132" stop-color="#00ff6a"/><stop offset="0.158" stop-color="#00ff6c"/><stop offset="0.184" stop-color="#00ff6d"/><stop offset="0.211" stop-color="#00ff6f"/><stop offset="0.237" stop-color="#27ff70"/><stop offset="0.263" stop-color="#5bff72"/><stop offset="0.289" stop-color="#96ff75"/><stop offset="0.316" stop-color="#d8ff77"/><stop offset="0.342" stop-color="#ffe06b"/><stop offset="0.368" stop-color="#ffad55"/><stop offset="0.395" stop-color="#ff8945"/><stop offset="0.421" stop-color="#ff6e3a"/><stop offset="0.447" stop-color="#ff5931"/><stop offset="0.474" stop-color="#ff4929"/><stop offset="0.500" stop-color="#ff3b24"/><stop offset="0.526" stop-color="#ff301f"/><stop offset="0.553" stop-color="#ff261b"/><stop offset="0.579" stop-color="#ff1e17"/><stop offset="0.605" stop-color="#ff1714"/><stop offset="0.632" stop-color="#ff1111"/><stop offset="0.658" stop-color="#ff0c0f"/><stop offset="0.684" stop-color="#ff070d"/><stop offset="0.711" stop-color="#ff030b"/><stop offset="0.737" stop-color="#ff0009"/><stop offset="0.763" stop-color="#ff0008"/><stop offset="0.789" stop-color="#ff0006"/><stop offset="0.816" stop-color="#ff0005"/><stop offset="0.842" stop-color="#ff0004"/><stop offset="0.868" stop-color="#ff0003"/><stop offset="0.895" stop-color="#ff0002"/><stop offset="0.921" stop-color="#ff0001"/><stop offset="0.947" stop-color="#ff0000"/><stop offset="0.974" stop-color="#ff0000"/><stop offset="1.000" stop-color="#ff0000"/></linearGradient><linearGradient id="c31" gradientUnits="userSpaceOnUse" x1="952.0" x2="1548.5" y1="0" y2="0"><stop offset="0.000" stop-color="#00ff69"/><stop offset="0.026" stop-color="#00ff6a"/><stop offset="0.053" stop-color="#00ff6b"/><stop offset="0.079" stop-color="#00ff6d"/><stop offset="0.105" stop-color="#00ff6e"/><stop offset="0.132" stop-color="#00ff6f"/><stop offset="0.158" stop-color="#00ff71"/><stop offset="0.184" stop-color="#00ff73"/><stop offset="0.211" stop-color="#00ff75"/><stop offset="0.237" stop-color="#28ff77"/><stop offset="0.263" stop-color="#5cff79"/><stop offset="0.289" stop-color="#97ff7c"/><stop offset="0.316" stop-color="#daff7f"/><stop offset="0.342" stop-color="#ffde71"/><stop offset="0.368" stop-color="#ffab5a"/><stop offset="0.395" stop-color="#ff874a"/><stop offset="0.421" stop-color="#ff6d3d"/><stop offset="0.447" stop-color="#ff5834"/><stop offset="0.474" stop-color="#ff482c"/><stop offset="0.500" stop-color="#ff3a26"/><stop offset="0.526" stop-color="#ff2f21"/><stop offset="0.553" stop-color="#ff261d"/><stop offset="0.579" stop-color="#ff1e19"/><stop offset="0.605" stop-color="#ff1716"/><stop offset="0.632" stop-color="#ff1113"/><stop offset="0.658" stop-color="#ff0b11"/><stop offset="0.684" stop-color="#ff060f"/><stop offset="0.711" stop-color="#ff020d"/><stop offset="0.737" stop-color="#ff000b"/><stop offset="0.763" stop-color="#ff0009"/><stop offset="0.789" stop-color="#ff0008"/><stop offset="0.816" stop-color="#ff0006"/><stop offset="0.842" stop-color="#ff0005"/><stop offset="0.868" stop-color="#ff0004"/><stop offset="0.895" stop-color="#ff0003"/><stop offset="0.921" stop-color="#ff0002"/><stop offset="0.947" stop-color="#ff0001"/><stop offset="0.974" stop-color="#ff0001"/><stop offset="1.000" stop-color="#ff0000"/></linearGradient><linearGradient id="c32" gradientUnits="userSpaceOnUse" x1="952.5" x2="1548.5" y1="0" y2="0"><stop offset="0.000" stop-color="#00ff6d"/><stop offset="0.026" stop-color="#00ff6f"/><stop offset="0.053" stop-color="#00ff70"/><stop offset="0.079" stop-color="#00ff71"/><stop offset="0.105" stop-color="#00ff73"/><stop offset="0.132" stop-color="#00ff75"/><stop offset="0.158" stop-color="#00ff77"/><stop offset="0.184" stop-color="#00ff79"/><stop offset="0.211" stop-color="#00ff7b"/><stop offset="0.237" stop-color="#28ff7d"/><stop offset="0.263" stop-color="#5dff80"/><stop offset="0.289" stop-color="#99ff83"/><stop offset="0.316" stop-color="#dcff87"/><stop offset="0.342" stop-color="#ffdb77"/><stop offset="0.368" stop-color="#ffa95f"/><stop offset="0.395" stop-color="#ff864e"/><stop offset="0.421" stop-color="#ff6b41"/><stop offset="0.447" stop-color="#ff5737"/><stop offset="0.474" stop-color="#ff472f"/><stop offset="0.500" stop-color="#ff3929"/><stop offset="0.526" stop-color="#ff2e24"/><stop offset="0.553" stop-color="#ff251f"/><stop offset="0.579" stop-color="#ff1d1b"/><stop offset="0.605" stop-color="#ff1618"/><stop offset="0.632" stop-color="#ff1015"/><stop offset="0.658" stop-color="#ff0b12"/><stop offset="0.684" stop-color="#ff0610"/><stop offset="0.711" stop-color="#ff020e"/><stop offset="0.737" stop-color="#ff000c"/><stop offset="0.763" stop-color="#ff000b"/><stop offset="0.789" stop-color="#ff0009"/><stop offset="0.816" stop-color="#ff0008"/><stop offset="0.842" stop-color="#ff0007"/><stop offset="0.868" stop-color="#ff0005"/><stop offset="0.895" stop-color="#ff0004"/><stop offset="0.921" stop-color="#ff0003"/><stop offset="0.947" stop-color="#ff0002"/><stop offset="0.974" stop-color="#ff0002"/><stop offset="1.000" stop-color="#ff0001"/></linearGradient><linearGradient id="c33" gradientUnits="userSpaceOnUse" x1="953.0" x2="1548.5" y1="0" y2="0"><stop offset="0.000" stop-color="#00ff72"/><stop offset="0.026" stop-color="#00ff73"/><stop offset="0.053" stop-color="#00ff75"/><stop offset="0.079" stop-color="#00ff76"/><stop offset="0.105" stop-color="#00ff78"/><stop offset="0.132" stop-color="#00ff7a"/><stop offset="0.158" stop-color="#00ff7c"/><stop offset="0.184" stop-color="#00ff7f"/><stop offset="0.211" stop-color="#00ff81"/><stop offset="0.237" stop-color="#29ff84"/><stop offset="0.263" stop-color="#5eff87"/><stop offset="0.289" stop-color="#9aff8b"/><stop offset="0.316" stop-color="#deff8f"/><stop offset="0.342" stop-color="#ffd97e"/><stop offset="0.368" stop-color="#ffa764"/><stop offset="0.395" stop-color="#ff8452"/><stop offset="0.421" stop-color="#ff6a45"/><stop offset="0.447" stop-color="#ff563b"/><stop offset="0.474" stop-color="#ff4632"/><stop offset="0.500" stop-color="#ff382c"/><stop offset="0.526" stop-color="#ff2d26"/><stop offset="0.553" stop-color="#ff2422"/><stop offset="0.579" stop-color="#ff1c1d"/><stop offset="0.605" stop-color="#ff151a"/><stop offset="0.632" stop-color="#ff0f17"/><stop offset="0.658" stop-color="#ff0a14"/><stop offset="0.684" stop-color="#ff0512"/><stop offset="0.711" stop-color="#ff0110"/><stop offset="0.737" stop-color="#ff000e"/><stop offset="0.763" stop-color="#ff000c"/><stop offset="0.789" stop-color="#ff000b"/><stop offset="0.816" stop-color="#ff0009"/><stop offset="0.842" stop-color="#ff0008"/><stop offset="0.868" stop-color="#ff0007"/><stop offset="0.895" stop-color="#ff0005"/><stop offset="0.921" stop-color="#ff0004"/><stop offset="0.947" stop-color="#ff0003"/><stop offset="0.974" stop-color="#ff0003"/><stop offset="1.000" stop-color="#ff0002"/></linearGradient><linearGradient id="c34" gradientUnits="userSpaceOnUse" x1="953.5" x2="1548.5" y1="0" y2="0"><stop offset="0.000" stop-color="#00ff76"/><stop offset="0.026" stop-color="#00ff78"/><stop offset="0.053" stop-color="#00ff7a"/><stop offset="0.079" stop-color="#00ff7b"/><stop offset="0.105" stop-color="#00ff7d"/><stop offset="0.132" stop-color="#00ff80"/><stop offset="0.158" stop-color="#00ff82"/><stop offset="0.184" stop-color="#00ff85"/><stop offset="0.211" stop-color="#00ff88"/><stop offset="0.237" stop-color="#29ff8b"/><stop offset="0.263" stop-color="#5fff8e"/><stop offset="0.289" stop-color="#9cff92"/><stop offset="0.316" stop-color="#e0ff97"/><stop offset="0.342" stop-color="#ffd784"/><stop offset="0.368" stop-color="#ffa669"/><stop offset="0.395" stop-color="#ff8357"/><stop offset="0.421" stop-color="#ff6949"/><stop offset="0.447" stop-color="#ff553e"/><stop offset="0.474" stop-color="#ff4436"/><stop offset="0.500" stop-color="#ff372f"/><stop offset="0.526" stop-color="#ff2d29"/><stop offset="0.553" stop-color="#ff2324"/><stop offset="0.579" stop-color="#ff1b20"/><stop offset="0.605" stop-color="#ff151c"/><stop offset="0.632" stop-color="#ff0f19"/><stop offset="0.658" stop-color="#ff0916"/><stop offset="0.684" stop-color="#ff0514"/><stop offset="0.711" stop-color="#ff0111"/><stop offset="0.737" stop-color="#ff000f"/><stop offset="0.763" stop-color="#ff000e"/><stop offset="0.789" stop-color="#ff000c"/><stop offset="0.816" stop-color="#ff000a"/><stop offset="0.842" stop-color="#ff0009"/><stop offset="0.868" stop-color="#ff0008"/><stop offset="0.895" stop-color="#ff0007"/><stop offset="0.921" stop-color="#ff0006"/><stop offset="0.947" stop-color="#ff0005"/><stop offset="0.974" stop-color="#ff0004"/><stop offset="1.000" stop-color="#ff0003"/></linearGradient><linearGradient id="c35" gradientUnits="userSpaceOnUse" x1="954.0" x2="1548.5" y1="0" y2="0"><stop offset="0.000" stop-color="#00ff7b"/><stop offset="0.026" stop-color="#00ff7d"/><stop offset="0.053" stop-color="#00ff7e"/><stop offset="0.079" stop-color="#00ff80"/><stop offset="0.105" stop-color="#00ff83"/><stop offset="0.132" stop-color="#00ff85"/><stop offset="0.158" stop-color="#00ff88"/><stop offset="0.184" stop-color="#00ff8b"/><stop offset="0.211" stop-color="#00ff8e"/><stop offset="0.237" stop-color="#2aff92"/><stop offset="0.263" stop-color="#60ff96"/><stop offset="0.289" stop-color="#9dff9a"/><stop offset="0.316" stop-color="#e3ff9f"/><stop offset="0.342" stop-color="#ffd58a"/><stop offset="0.368" stop-color="#ffa46e"/><stop offset="0.395" stop-color="#ff815b"/><stop offset="0.421" stop-color="#ff674d"/><stop offset="0.447" stop-color="#ff5341"/><stop offset="0.474" stop-color="#ff4339"/><stop offset="0.500" stop-color="#ff3631"/><stop offset="0.526" stop-color="#ff2c2b"/><stop offset="0.553" stop-color="#ff2326"/><stop offset="0.579" stop-color="#ff1b22"/><stop offset="0.605" stop-color="#ff141e"/><stop offset="0.632" stop-color="#ff0e1b"/><stop offset="0.658" stop-color="#ff0918"/><stop offset="0.684" stop-color="#ff0415"/><stop offset="0.711" stop-color="#ff0013"/><stop offset="0.737" stop-color="#ff0011"/><stop offset="0.763" stop-color="#ff000f"/><stop offset="0.789" stop-color="#ff000d"/><stop offset="0.816" stop-color="#ff000c"/><stop offset="0.842" stop-color="#ff000a"/><stop offset="0.868" stop-color="#ff0009"/><stop offset="0.895" stop-color="#ff0008"/><stop offset="0.921" stop-color="#ff0007"/><stop offset="0.947" stop-color="#ff0006"/><stop offset="0.974" stop-color="#ff0005"/><stop offset="1.000" stop-color="#ff0004"/></linearGradient><linearGradient id="c36" gradientUnits="userSpaceOnUse" x1="954.5" x2="1548.5" y1="0" y2="0"><stop offset="0.000" stop-color="#00ff7f"/><stop offset="0.026" stop-color="#00ff81"/><stop offset="0.053" stop-color="#00ff83"/><stop offset="0.079" stop-color="#00ff86"/><stop offset="0.105" stop-color="#00ff88"/><stop offset="0.132" stop-color="#00ff8b"/><stop offset="0.158" stop-color="#00ff8e"/><stop offset="0.184" stop-color="#00ff91"/><stop offset="0.211" stop-color="#00ff95"/><stop offset="0.237" stop-color="#2aff99"/><stop offset="0.263" stop-color="#61ff9d"/><stop offset="0.289" stop-color="#9fffa2"/><stop offset="0.316" stop-color="#e5ffa8"/><stop offset="0.342" stop-color="#ffd290"/><stop offset="0.368" stop-color="#ffa274"/><stop offset="0.395" stop-color="#ff805f"/><stop offset="0.421" stop-color="#ff6650"/><stop offset="0.447" stop-color="#ff5245"/><stop offset="0.474" stop-color="#ff423c"/><stop offset="0.500" stop-color="#ff3634"/><stop offset="0.526" stop-color="#ff2b2e"/><stop offset="0.553" stop-color="#ff2229"/><stop offset="0.579" stop-color="#ff1a24"/><stop offset="0.605" stop-color="#ff1320"/><stop offset="0.632" stop-color="#ff0d1d"/><stop offset="0.658" stop-color="#ff081a"/><stop offset="0.684" stop-color="#ff0417"/><stop offset="0.711" stop-color="#ff0015"/><stop offset="0.737" stop-color="#ff0012"/><stop offset="0.763" stop-color="#ff0010"/><stop offset="0.789" stop-color="#ff000f"/><stop offset="0.816" stop-color="#ff000d"/><stop offset="0.842" stop-color="#ff000c"/><stop offset="0.868" stop-color="#ff000a"/><stop offset="0.895" stop-color="#ff0009"/><stop offset="0.921" stop-color="#ff0008"/><stop offset="0.947" stop-color="#ff0007"/><stop offset="0.974" stop-color="#ff0006"/><stop offset="1.000" stop-color="#ff0005"/></linearGradient><linearGradient id="c37" gradientUnits="userSpaceOnUse" x1="955.0" x2="1548.5" y1="0" y2="0"><stop offset="0.000" stop-color="#00ff84"/><stop offset="0.026" stop-color="#00ff86"/><stop offset="0.053" stop-color="#00ff88"/><stop offset="0.079" stop-color="#00ff8b"/><stop offset="0.105" stop-color="#00ff8d"/><stop offset="0.132" stop-color="#00ff90"/><stop offset="0.158" stop-color="#00ff94"/><stop offset="0.184" stop-color="#00ff97"/><stop offset="0.211" stop-color="#00ff9b"/><stop offset="0.237" stop-color="#2bffa0"/><stop offset="0.263" stop-color="#62ffa5"/><stop offset="0.289" stop-color="#a1ffaa"/><stop offset="0.316" stop-color="#e7ffb0"/><stop offset="0.342" stop-color="#ffd096"/><stop offset="0.368" stop-color="#ffa079"/><stop offset="0.395" stop-color="#ff7e64"/><stop offset="0.421" stop-color="#ff6554"/><stop offset="0.447" stop-color="#ff5148"/><stop offset="0.474" stop-color="#ff413f"/><stop offset="0.500" stop-color="#ff3537"/><stop offset="0.526" stop-color="#ff2a30"/><stop offset="0.553" stop-color="#ff212b"/><stop offset="0.579" stop-color="#ff1926"/><stop offset="0.605" stop-color="#ff1322"/><stop offset="0.632" stop-color="#ff0d1f"/><stop offset="0.658" stop-color="#ff081b"/><stop offset="0.684" stop-color="#ff0319"/><stop offset="0.711" stop-color="#ff0016"/><stop offset="0.737" stop-color="#ff0014"/><stop offset="0.763" stop-color="#ff0012"/><stop offset="0.789" stop-color="#ff0010"/><stop offset="0.816" stop-color="#ff000e"/><stop offset="0.842" stop-color="#ff000d"/><stop offset="0.868" stop-color="#ff000b"/><stop offset="0.895" stop-color="#ff000a"/><stop offset="0.921" stop-color="#ff0009"/><stop offset="0.947" stop-color="#ff0008"/><stop offset="0.974" stop-color="#ff0007"/><stop offset="1.000" stop-color="#ff0006"/></linearGradient><linearGradient id="c38" gradientUnits="userSpaceOnUse" x1="955.5" x2="1548.5" y1="0" y2="0"><stop offset="0.000" stop-color="#00ff88"/><stop offset="0.026" stop-color="#00ff8b"/><stop offset="0.053" stop-color="#00ff8d"/><stop offset="0.079" stop-color="#00ff90"/><stop offset="0.105" stop-color="#00ff93"/><stop offset="0.132" stop-color="#00ff96"/><stop offset="0.158" stop-color="#00ff9a"/><stop offset="0.184" stop-color="#00ff9e"/><stop offset="0.211" stop-color="#00ffa2"/><stop offset="0.237" stop-color="#2cffa7"/><stop offset="0.263" stop-color="#63ffac"/><stop offset="0.289" stop-color="#a2ffb2"/><stop offset="0.316" stop-color="#eaffb9"/><stop offset="0.342" stop-color="#ffce9c"/><stop offset="0.368" stop-color="#ff9e7e"/><stop offset="0.395" stop-color="#ff7d68"/><stop offset="0.421" stop-color="#ff6358"/><stop offset="0.447" stop-color="#ff504c"/><stop offset="0.474" stop-color="#ff4042"/><stop offset="0.500" stop-color="#ff343a"/><stop offset="0.526" stop-color="#ff2933"/><stop offset="0.553" stop-color="#ff202d"/><stop offset="0.579" stop-color="#ff1928"/><stop offset="0.605" stop-color="#ff1224"/><stop offset="0.632" stop-color="#ff0c20"/><stop offset="0.658" stop-color="#ff071d"/><stop offset="0.684" stop-color="#ff031a"/><stop offset="0.711" stop-color="#ff0018"/><stop offset="0.737" stop-color="#ff0015"/><stop offset="0.763" stop-color="#ff0013"/><stop offset="0.789" stop-color="#ff0011"/><stop offset="0.816" stop-color="#ff0010"/><stop offset="0.842" stop-color="#ff000e"/><stop offset="0.868" stop-color="#ff000d"/><stop offset="0.895" stop-color="#ff000b"/><stop offset="0.921" stop-color="#ff000a"/><stop offset="0.947" stop-color="#ff0009"/><stop offset="0.974" stop-color="#ff0008"/><stop offset="1.000" stop-color="#ff0007"/></linearGradient><linearGradient id="c39" gradientUnits="userSpaceOnUse" x1="956.0" x2="1548.5" y1="0" y2="0"><stop offset="0.000" stop-color="#00ff8d"/><stop offset="0.026" stop-color="#00ff90"/><stop offset="0.053" stop-color="#00ff92"/><stop offset="0.079" stop-color="#00ff95"/><stop offset="0.105" stop-color="#00ff99"/><stop offset="0.132" stop-color="#00ff9c"/><stop offset="0.158" stop-color="#00ffa0"/><stop offset="0.184" stop-color="#00ffa4"/><stop offset="0.211" stop-color="#00ffa9"/><stop offset="0.237" stop-color="#2cffae"/><stop offset="0.263" stop-color="#64ffb4"/><stop offset="0.289" stop-color="#a4ffbb"/><stop offset="0.316" stop-color="#ecffc2"/><stop offset="0.342" stop-color="#ffcca2"/><stop offset="0.368" stop-color="#ff9d83"/><stop offset="0.395" stop-color="#ff7b6d"/><stop offset="0.421" stop-color="#ff625c"/><stop offset="0.447" stop-color="#ff4f4f"/><stop offset="0.474" stop-color="#ff3f45"/><stop offset="0.500" stop-color="#ff333c"/><stop offset="0.526" stop-color="#ff2835"/><stop offset="0.553" stop-color="#ff1f30"/><stop offset="0.579" stop-color="#ff182b"/><stop offset="0.605" stop-color="#ff1126"/><stop offset="0.632" stop-color="#ff0c22"/><stop offset="0.658" stop-color="#ff071f"/><stop offset="0.684" stop-color="#ff021c"/><stop offset="0.711" stop-color="#ff0019"/><stop offset="0.737" stop-color="#ff0017"/><stop offset="0.763" stop-color="#ff0015"/><stop offset="0.789" stop-color="#ff0013"/><stop offset="0.816" stop-color="#ff0011"/><stop offset="0.842" stop-color="#ff000f"/><stop offset="0.868" stop-color="#ff000e"/><stop offset="0.895" stop-color="#ff000d"/><stop offset="0.921" stop-color="#ff000b"/><stop offset="0.947" stop-color="#ff000a"/><stop offset="0.974" stop-color="#ff0009"/><stop offset="1.000" stop-color="#ff0008"/></linearGradient><linearGradient id="c40" gradientUnits="userSpaceOnUse" x1="956.5" x2="1548.5" y1="0" y2="0"><stop offset="0.000" stop-color="#00ff92"/><stop offset="0.027" stop-color="#00ff95"/><stop offset="0.054" stop-color="#00ff98"/><stop offset="0.081" stop-color="#00ff9b"/><stop offset="0.108" stop-color="#00ff9f"/><stop offset="0.135" stop-color="#00ffa3"/><stop offset="0.162" stop-color="#00ffa7"/><stop offset="0.189" stop-color="#00ffac"/><stop offset="0.216" stop-color="#05ffb1"/><stop offset="0.243" stop-color="#3affb7"/><stop offset="0.270" stop-color="#76ffbe"/><stop offset="0.297" stop-color="#baffc6"/><stop offset="0.324" stop-color="#fff6c7"/><stop offset="0.351" stop-color="#ffb79b"/><stop offset="0.378" stop-color="#ff8d7e"/><stop offset="0.405" stop-color="#ff6f69"/><stop offset="0.432" stop-color="#ff585a"/><stop offset="0.459" stop-color="#ff464d"/><stop offset="0.486" stop-color="#ff3843"/><stop offset="0.514" stop-color="#ff2c3b"/><stop offset="0.541" stop-color="#ff2235"/><stop offset="0.568" stop-color="#ff1a2f"/><stop offset="0.595" stop-color="#ff132a"/><stop offset="0.622" stop-color="#ff0d26"/><stop offset="0.649" stop-color="#ff0822"/><stop offset="0.676" stop-color="#ff031f"/><stop offset="0.703" stop-color="#ff001c"/><stop offset="0.730" stop-color="#ff0019"/><stop offset="0.757" stop-color="#ff0017"/><stop offset="0.784" stop-color="#ff0015"/><stop offset="0.811" stop-color="#ff0013"/><stop offset="0.838" stop-color="#ff0011"/><stop offset="0.865" stop-color="#ff000f"/><stop offset="0.892" stop-color="#ff000e"/><stop offset="0.919" stop-color="#ff000c"/><stop offset="0.946" stop-color="#ff000b"/><stop offset="0.973" stop-color="#ff000a"/><stop offset="1.000" stop-color="#ff0009"/></linearGradient><linearGradient id="c41" gradientUnits="userSpaceOnUse" x1="957.0" x2="1548.5" y1="0" y2="0"><stop offset="0.000" stop-color="#00ff97"/><stop offset="0.027" stop-color="#00ff9a"/><stop offset="0.054" stop-color="#00ff9d"/><stop offset="0.081" stop-color="#00ffa1"/><stop offset="0.108" stop-color="#00ffa4"/><stop offset="0.135" stop-color="#00ffa9"/><stop offset="0.162" stop-color="#00ffad"/><stop offset="0.189" stop-color="#00ffb3"/><stop offset="0.216" stop-color="#05ffb8"/><stop offset="0.243" stop-color="#3bffbf"/><stop offset="0.270" stop-color="#77ffc6"/><stop offset="0.297" stop-color="#bcffcf"/><stop offset="0.324" stop-color="#fff3ce"/><stop offset="0.351" stop-color="#ffb5a1"/><stop offset="0.378" stop-color="#ff8b83"/><stop offset="0.405" stop-color="#ff6d6e"/><stop offset="0.432" stop-color="#ff575d"/><stop offset="0.459" stop-color="#ff4551"/><stop offset="0.486" stop-color="#ff3746"/><stop offset="0.514" stop-color="#ff2b3e"/><stop offset="0.541" stop-color="#ff2237"/><stop offset="0.568" stop-color="#ff1931"/><stop offset="0.595" stop-color="#ff122c"/><stop offset="0.622" stop-color="#ff0c28"/><stop offset="0.649" stop-color="#ff0724"/><stop offset="0.676" stop-color="#ff0220"/><stop offset="0.703" stop-color="#ff001d"/><stop offset="0.730" stop-color="#ff001b"/><stop offset="0.757" stop-color="#ff0018"/><stop offset="0.784" stop-color="#ff0016"/><stop offset="0.811" stop-color="#ff0014"/><stop offset="0.838" stop-color="#ff0012"/><stop offset="0.865" stop-color="#ff0011"/><stop offset="0.892" stop-color="#ff000f"/><stop offset="0.919" stop-color="#ff000e"/><stop offset="0.946" stop-color="#ff000c"/><stop offset="0.973" stop-color="#ff000b"/><stop offset="1.000" stop-color="#ff000a"/></linearGradient><linearGradient id="c42" gradientUnits="userSpaceOnUse" x1="957.5" x2="1548.5" y1="0" y2="0"><stop offset="0.000" stop-color="#00ff9c"/><stop offset="0.027" stop-color="#00ff9f"/><stop offset="0.054" stop-color="#00ffa2"/><stop offset="0.081" stop-color="#00ffa6"/><stop offset="0.108" stop-color="#00ffaa"/><stop offset="0.135" stop-color="#00ffaf"/><stop offset="0.162" stop-color="#00ffb4"/><stop offset="0.189" stop-color="#00ffb9"/><stop offset="0.216" stop-color="#05ffc0"/><stop offset="0.243" stop-color="#3bffc7"/><stop offset="0.270" stop-color="#79ffcf"/><stop offset="0.297" stop-color="#beffd8"/><stop offset="0.324" stop-color="#fff0d5"/><stop offset="0.351" stop-color="#ffb3a7"/><stop offset="0.378" stop-color="#ff8988"/><stop offset="0.405" stop-color="#ff6c72"/><stop offset="0.432" stop-color="#ff5561"/><stop offset="0.459" stop-color="#ff4454"/><stop offset="0.486" stop-color="#ff3649"/><stop offset="0.514" stop-color="#ff2a41"/><stop offset="0.541" stop-color="#ff213a"/><stop offset="0.568" stop-color="#ff1933"/><stop offset="0.595" stop-color="#ff122e"/><stop offset="0.622" stop-color="#ff0c2a"/><stop offset="0.649" stop-color="#ff0626"/><stop offset="0.676" stop-color="#ff0222"/><stop offset="0.703" stop-color="#ff001f"/><stop offset="0.730" stop-color="#ff001c"/><stop offset="0.757" stop-color="#ff001a"/><stop offset="0.784" stop-color="#ff0018"/><stop offset="0.811" stop-color="#ff0015"/><stop offset="0.838" stop-color="#ff0014"/><stop offset="0.865" stop-color="#ff0012"/><stop offset="0.892" stop-color="#ff0010"/><stop offset="0.919" stop-color="#ff000f"/><stop offset="0.946" stop-color="#ff000d"/><stop offset="0.973" stop-color="#ff000c"/><stop offset="1.000" stop-color="#ff000b"/></linearGradient><linearGradient id="c43" gradientUnits="userSpaceOnUse" x1="958.0" x2="1548.1" y1="0" y2="0"><stop offset="0.000" stop-color="#00ffa0"/><stop offset="0.027" stop-color="#00ffa4"/><stop offset="0.054" stop-color="#00ffa8"/><stop offset="0.081" stop-color="#00ffac"/><stop offset="0.108" stop-color="#00ffb0"/><stop offset="0.135" stop-color="#00ffb5"/><stop offset="0.162" stop-color="#00ffba"/><stop offset="0.189" stop-color="#00ffc0"/><stop offset="0.216" stop-color="#05ffc7"/><stop offset="0.243" stop-color="#3cffcf"/><stop offset="0.270" stop-color="#7affd7"/><stop offset="0.297" stop-color="#c0ffe1"/><stop offset="0.324" stop-color="#ffeedc"/><stop offset="0.351" stop-color="#ffb1ad"/><stop offset="0.378" stop-color="#ff888d"/><stop offset="0.405" stop-color="#ff6b76"/><stop offset="0.432" stop-color="#ff5465"/><stop offset="0.459" stop-color="#ff4357"/><stop offset="0.486" stop-color="#ff354c"/><stop offset="0.514" stop-color="#ff2a43"/><stop offset="0.541" stop-color="#ff203c"/><stop offset="0.568" stop-color="#ff1836"/><stop offset="0.595" stop-color="#ff1130"/><stop offset="0.622" stop-color="#ff0b2c"/><stop offset="0.649" stop-color="#ff0628"/><stop offset="0.676" stop-color="#ff0124"/><stop offset="0.703" stop-color="#ff0021"/><stop offset="0.730" stop-color="#ff001e"/><stop offset="0.757" stop-color="#ff001b"/><stop offset="0.784" stop-color="#ff0019"/><stop offset="0.811" stop-color="#ff0017"/><stop offset="0.838" stop-color="#ff0015"/><stop offset="0.865" stop-color="#ff0013"/><stop offset="0.892" stop-color="#ff0011"/><stop offset="0.919" stop-color="#ff0010"/><stop offset="0.946" stop-color="#ff000f"/><stop offset="0.973" stop-color="#ff000d"/><stop offset="1.000" stop-color="#ff000c"/></linearGradient><linearGradient id="c44" gradientUnits="userSpaceOnUse" x1="958.5" x2="1546.2" y1="0" y2="0"><stop offset="0.000" stop-color="#00ffa5"/><stop offset="0.027" stop-color="#00ffa9"/><stop offset="0.054" stop-color="#00ffad"/><stop offset="0.081" stop-color="#00ffb1"/><stop offset="0.108" stop-color="#00ffb6"/><stop offset="0.135" stop-color="#00ffbb"/><stop offset="0.162" stop-color="#00ffc1"/><stop offset="0.189" stop-color="#00ffc7"/><stop offset="0.216" stop-color="#04ffcf"/><stop offset="0.243" stop-color="#3bffd6"/><stop offset="0.270" stop-color="#79ffe0"/><stop offset="0.297" stop-color="#bfffea"/><stop offset="0.324" stop-color="#ffefe6"/><stop offset="0.351" stop-color="#ffb1b4"/><stop offset="0.378" stop-color="#ff8893"/><stop offset="0.405" stop-color="#ff6a7b"/><stop offset="0.432" stop-color="#ff5469"/><stop offset="0.459" stop-color="#ff435b"/><stop offset="0.486" stop-color="#ff3550"/><stop offset="0.514" stop-color="#ff2947"/><stop offset="0.541" stop-color="#ff203f"/><stop offset="0.568" stop-color="#ff1838"/><stop offset="0.595" stop-color="#ff1133"/><stop offset="0.622" stop-color="#ff0b2e"/><stop offset="0.649" stop-color="#ff062a"/><stop offset="0.676" stop-color="#ff0126"/><stop offset="0.703" stop-color="#ff0023"/><stop offset="0.730" stop-color="#ff0020"/><stop offset="0.757" stop-color="#ff001d"/><stop offset="0.784" stop-color="#ff001b"/><stop offset="0.811" stop-color="#ff0018"/><stop offset="0.838" stop-color="#ff0016"/><stop offset="0.865" stop-color="#ff0015"/><stop offset="0.892" stop-color="#ff0013"/><stop offset="0.919" stop-color="#ff0011"/><stop offset="0.946" stop-color="#ff0010"/><stop offset="0.973" stop-color="#ff000e"/><stop offset="1.000" stop-color="#ff000d"/></linearGradient><linearGradient id="c45" gradientUnits="userSpaceOnUse" x1="959.1" x2="1544.3" y1="0" y2="0"><stop offset="0.000" stop-color="#00ffaa"/><stop offset="0.027" stop-color="#00ffae"/><stop offset="0.054" stop-color="#00ffb3"/><stop offset="0.081" stop-color="#00ffb7"/><stop offset="0.108" stop-color="#00ffbc"/><stop offset="0.135" stop-color="#00ffc2"/><stop offset="0.162" stop-color="#00ffc8"/><stop offset="0.189" stop-color="#00ffce"/><stop offset="0.216" stop-color="#03ffd6"/><stop offset="0.243" stop-color="#3affde"/><stop offset="0.270" stop-color="#78ffe8"/><stop offset="0.297" stop-color="#bffff3"/><stop offset="0.324" stop-color="#ffeff0"/><stop offset="0.351" stop-color="#ffb1bc"/><stop offset="0.378" stop-color="#ff8899"/><stop offset="0.405" stop-color="#ff6a80"/><stop offset="0.432" stop-color="#ff546e"/><stop offset="0.459" stop-color="#ff425f"/><stop offset="0.486" stop-color="#ff3553"/><stop offset="0.514" stop-color="#ff294a"/><stop offset="0.541" stop-color="#ff2042"/><stop offset="0.568" stop-color="#ff183b"/><stop offset="0.595" stop-color="#ff1135"/><stop offset="0.622" stop-color="#ff0b30"/><stop offset="0.649" stop-color="#ff052c"/><stop offset="0.676" stop-color="#ff0128"/><stop offset="0.703" stop-color="#ff0025"/><stop offset="0.730" stop-color="#ff0022"/><stop offset="0.757" stop-color="#ff001f"/><stop offset="0.784" stop-color="#ff001c"/><stop offset="0.811" stop-color="#ff001a"/><stop offset="0.838" stop-color="#ff0018"/><stop offset="0.865" stop-color="#ff0016"/><stop offset="0.892" stop-color="#ff0014"/><stop offset="0.919" stop-color="#ff0013"/><stop offset="0.946" stop-color="#ff0011"/><stop offset="0.973" stop-color="#ff0010"/><stop offset="1.000" stop-color="#ff000e"/></linearGradient><linearGradient id="c46" gradientUnits="userSpaceOnUse" x1="959.8" x2="1542.3" y1="0" y2="0"><stop offset="0.000" stop-color="#00ffb0"/><stop offset="0.027" stop-color="#00ffb4"/><stop offset="0.054" stop-color="#00ffb8"/><stop offset="0.081" stop-color="#00ffbd"/><stop offset="0.108" stop-color="#00ffc2"/><stop offset="0.135" stop-color="#00ffc8"/><stop offset="0.162" stop-color="#00ffcf"/><stop offset="0.189" stop-color="#00ffd6"/><stop offset="0.216" stop-color="#02ffde"/><stop offset="0.243" stop-color="#39ffe7"/><stop offset="0.270" stop-color="#78fff1"/><stop offset="0.297" stop-color="#bffffc"/><stop offset="0.324" stop-color="#ffeff9"/><stop offset="0.351" stop-color="#ffb1c3"/><stop offset="0.378" stop-color="#ff879f"/><stop offset="0.405" stop-color="#ff6a85"/><stop offset="0.432" stop-color="#ff5372"/><stop offset="0.459" stop-color="#ff4263"/><stop offset="0.486" stop-color="#ff3457"/><stop offset="0.514" stop-color="#ff294d"/><stop offset="0.541" stop-color="#ff1f45"/><stop offset="0.568" stop-color="#ff173e"/><stop offset="0.595" stop-color="#ff1038"/><stop offset="0.622" stop-color="#ff0a33"/><stop offset="0.649" stop-color="#ff052e"/><stop offset="0.676" stop-color="#ff012a"/><stop offset="0.703" stop-color="#ff0027"/><stop offset="0.730" stop-color="#ff0023"/><stop offset="0.757" stop-color="#ff0021"/><stop offset="0.784" stop-color="#ff001e"/><stop offset="0.811" stop-color="#ff001c"/><stop offset="0.838" stop-color="#ff0019"/><stop offset="0.865" stop-color="#ff0017"/><stop offset="0.892" stop-color="#ff0016"/><stop offset="0.919" stop-color="#ff0014"/><stop offset="0.946" stop-color="#ff0012"/><stop offset="0.973" stop-color="#ff0011"/><stop offset="1.000" stop-color="#ff0010"/></linearGradient><linearGradient id="c47" gradientUnits="userSpaceOnUse" x1="960.5" x2="1540.4" y1="0" y2="0"><stop offset="0.000" stop-color="#00ffb5"/><stop offset="0.027" stop-color="#00ffb9"/><stop offset="0.054" stop-color="#00ffbe"/><stop offset="0.081" stop-color="#00ffc3"/><stop offset="0.108" stop-color="#00ffc9"/><stop offset="0.135" stop-color="#00ffcf"/><stop offset="0.162" stop-color="#00ffd6"/><stop offset="0.189" stop-color="#00ffdd"/><stop offset="0.216" stop-color="#02ffe6"/><stop offset="0.243" stop-color="#39ffef"/><stop offset="0.270" stop-color="#77fffa"/><stop offset="0.297" stop-color="#b9f8ff"/><stop offset="0.324" stop-color="#fcebff"/><stop offset="0.351" stop-color="#ffb0cb"/><stop offset="0.378" stop-color="#ff87a5"/><stop offset="0.405" stop-color="#ff698b"/><stop offset="0.432" stop-color="#ff5377"/><stop offset="0.459" stop-color="#ff4267"/><stop offset="0.486" stop-color="#ff345b"/><stop offset="0.514" stop-color="#ff2950"/><stop offset="0.541" stop-color="#ff1f48"/><stop offset="0.568" stop-color="#ff1741"/><stop offset="0.595" stop-color="#ff103a"/><stop offset="0.622" stop-color="#ff0a35"/><stop offset="0.649" stop-color="#ff0530"/><stop offset="0.676" stop-color="#ff002c"/><stop offset="0.703" stop-color="#ff0029"/><stop offset="0.730" stop-color="#ff0025"/><stop offset="0.757" stop-color="#ff0022"/><stop offset="0.784" stop-color="#ff0020"/><stop offset="0.811" stop-color="#ff001d"/><stop offset="0.838" stop-color="#ff001b"/><stop offset="0.865" stop-color="#ff0019"/><stop offset="0.892" stop-color="#ff0017"/><stop offset="0.919" stop-color="#ff0015"/><stop offset="0.946" stop-color="#ff0014"/><stop offset="0.973" stop-color="#ff0012"/><stop offset="1.000" stop-color="#ff0011"/></linearGradient><linearGradient id="c48" gradientUnits="userSpaceOnUse" x1="961.2" x2="1538.5" y1="0" y2="0"><stop offset="0.000" stop-color="#00ffba"/><stop offset="0.027" stop-color="#00ffbf"/><stop offset="0.054" stop-color="#00ffc4"/><stop offset="0.081" stop-color="#00ffc9"/><stop offset="0.108" stop-color="#00ffcf"/><stop offset="0.135" stop-color="#00ffd5"/><stop offset="0.162" stop-color="#00ffdd"/><stop offset="0.189" stop-color="#00ffe5"/><stop offset="0.216" stop-color="#01ffed"/><stop offset="0.243" stop-color="#39fff7"/><stop offset="0.270" stop-color="#75fbff"/><stop offset="0.297" stop-color="#b3efff"/><stop offset="0.324" stop-color="#f3e3ff"/><stop offset="0.351" stop-color="#ffb0d2"/><stop offset="0.378" stop-color="#ff87ab"/><stop offset="0.405" stop-color="#ff6990"/><stop offset="0.432" stop-color="#ff537b"/><stop offset="0.459" stop-color="#ff416b"/><stop offset="0.486" stop-color="#ff345e"/><stop offset="0.514" stop-color="#ff2854"/><stop offset="0.541" stop-color="#ff1f4b"/><stop offset="0.568" stop-color="#ff1743"/><stop offset="0.595" stop-color="#ff103d"/><stop offset="0.622" stop-color="#ff0a37"/><stop offset="0.649" stop-color="#ff0533"/><stop offset="0.676" stop-color="#ff002e"/><stop offset="0.703" stop-color="#ff002b"/><stop offset="0.730" stop-color="#ff0027"/><stop offset="0.757" stop-color="#ff0024"/><stop offset="0.784" stop-color="#ff0021"/><stop offset="0.811" stop-color="#ff001f"/><stop offset="0.838" stop-color="#ff001c"/><stop offset="0.865" stop-color="#ff001a"/><stop offset="0.892" stop-color="#ff0018"/><stop offset="0.919" stop-color="#ff0017"/><stop offset="0.946" stop-color="#ff0015"/><stop offset="0.973" stop-color="#ff0013"/><stop offset="1.000" stop-color="#ff0012"/></linearGradient><linearGradient id="c49" gradientUnits="userSpaceOnUse" x1="961.9" x2="1536.5" y1="0" y2="0"><stop offset="0.000" stop-color="#00ffc0"/><stop offset="0.028" stop-color="#00ffc4"/><stop offset="0.056" stop-color="#00ffca"/><stop offset="0.083" stop-color="#00ffd0"/><stop offset="0.111" stop-color="#00ffd6"/><stop offset="0.139" stop-color="#00ffdd"/><stop offset="0.167" stop-color="#00ffe5"/><stop offset="0.194" stop-color="#00ffee"/><stop offset="0.222" stop-color="#0cfff8"/><stop offset="0.250" stop-color="#46fbff"/><stop offset="0.278" stop-color="#81efff"/><stop offset="0.306" stop-color="#bfe3ff"/><stop offset="0.333" stop-color="#ffd6fe"/><stop offset="0.361" stop-color="#ff9fc9"/><stop offset="0.389" stop-color="#ff7aa6"/><stop offset="0.417" stop-color="#ff5f8c"/><stop offset="0.444" stop-color="#ff4a78"/><stop offset="0.472" stop-color="#ff3a69"/><stop offset="0.500" stop-color="#ff2d5c"/><stop offset="0.528" stop-color="#ff2352"/><stop offset="0.556" stop-color="#ff1a49"/><stop offset="0.583" stop-color="#ff1242"/><stop offset="0.611" stop-color="#ff0c3c"/><stop offset="0.639" stop-color="#ff0637"/><stop offset="0.667" stop-color="#ff0132"/><stop offset="0.694" stop-color="#ff002e"/><stop offset="0.722" stop-color="#ff002a"/><stop offset="0.750" stop-color="#ff0027"/><stop offset="0.778" stop-color="#ff0024"/><stop offset="0.806" stop-color="#ff0021"/><stop offset="0.833" stop-color="#ff001e"/><stop offset="0.861" stop-color="#ff001c"/><stop offset="0.889" stop-color="#ff001a"/><stop offset="0.917" stop-color="#ff0018"/><stop offset="0.944" stop-color="#ff0016"/><stop offset="0.972" stop-color="#ff0015"/><stop offset="1.000" stop-color="#ff0013"/></linearGradient><linearGradient id="c50" gradientUnits="userSpaceOnUse" x1="962.6" x2="1534.6" y1="0" y2="0"><stop offset="0.000" stop-color="#00ffc5"/><stop offset="0.028" stop-color="#00ffca"/><stop offset="0.056" stop-color="#00ffd0"/><stop offset="0.083" stop-color="#00ffd6"/><stop offset="0.111" stop-color="#00ffdd"/><stop offset="0.139" stop-color="#00ffe4"/><stop offset="0.167" stop-color="#00ffec"/><stop offset="0.194" stop-color="#00fff6"/><stop offset="0.222" stop-color="#0cfeff"/><stop offset="0.250" stop-color="#43f3ff"/><stop offset="0.278" stop-color="#7de7ff"/><stop offset="0.306" stop-color="#b9dbff"/><stop offset="0.333" stop-color="#f7cfff"/><stop offset="0.361" stop-color="#ff9ed1"/><stop offset="0.389" stop-color="#ff79ab"/><stop offset="0.417" stop-color="#ff5e91"/><stop offset="0.444" stop-color="#ff4a7c"/><stop offset="0.472" stop-color="#ff3a6c"/><stop offset="0.500" stop-color="#ff2d60"/><stop offset="0.528" stop-color="#ff2255"/><stop offset="0.556" stop-color="#ff194c"/><stop offset="0.583" stop-color="#ff1245"/><stop offset="0.611" stop-color="#ff0c3e"/><stop offset="0.639" stop-color="#ff0639"/><stop offset="0.667" stop-color="#ff0134"/><stop offset="0.694" stop-color="#ff0030"/><stop offset="0.722" stop-color="#ff002c"/><stop offset="0.750" stop-color="#ff0028"/><stop offset="0.778" stop-color="#ff0025"/><stop offset="0.806" stop-color="#ff0023"/><stop offset="0.833" stop-color="#ff0020"/><stop offset="0.861" stop-color="#ff001e"/><stop offset="0.889" stop-color="#ff001c"/><stop offset="0.917" stop-color="#ff001a"/><stop offset="0.944" stop-color="#ff0018"/><stop offset="0.972" stop-color="#ff0016"/><stop offset="1.000" stop-color="#ff0014"/></linearGradient><linearGradient id="c51" gradientUnits="userSpaceOnUse" x1="963.4" x2="1532.6" y1="0" y2="0"><stop offset="0.000" stop-color="#00ffca"/><stop offset="0.028" stop-color="#00ffd0"/><stop offset="0.056" stop-color="#00ffd6"/><stop offset="0.083" stop-color="#00ffdc"/><stop offset="0.111" stop-color="#00ffe3"/><stop offset="0.139" stop-color="#00ffeb"/><stop offset="0.167" stop-color="#00fff4"/><stop offset="0.194" stop-color="#00fffe"/><stop offset="0.222" stop-color="#0bf6ff"/><stop offset="0.250" stop-color="#41ebff"/><stop offset="0.278" stop-color="#79dfff"/><stop offset="0.306" stop-color="#b3d4ff"/><stop offset="0.333" stop-color="#efc7ff"/><stop offset="0.361" stop-color="#ff9ed8"/><stop offset="0.389" stop-color="#ff79b1"/><stop offset="0.417" stop-color="#ff5e96"/><stop offset="0.444" stop-color="#ff4981"/><stop offset="0.472" stop-color="#ff3970"/><stop offset="0.500" stop-color="#ff2d63"/><stop offset="0.528" stop-color="#ff2258"/><stop offset="0.556" stop-color="#ff194f"/><stop offset="0.583" stop-color="#ff1248"/><stop offset="0.611" stop-color="#ff0b41"/><stop offset="0.639" stop-color="#ff063b"/><stop offset="0.667" stop-color="#ff0136"/><stop offset="0.694" stop-color="#ff0032"/><stop offset="0.722" stop-color="#ff002e"/><stop offset="0.750" stop-color="#ff002a"/><stop offset="0.778" stop-color="#ff0027"/><stop offset="0.806" stop-color="#ff0024"/><stop offset="0.833" stop-color="#ff0022"/><stop offset="0.861" stop-color="#ff001f"/><stop offset="0.889" stop-color="#ff001d"/><stop offset="0.917" stop-color="#ff001b"/><stop offset="0.944" stop-color="#ff0019"/><stop offset="0.972" stop-color="#ff0017"/><stop offset="1.000" stop-color="#ff0016"/></linearGradient><linearGradient id="c52" gradientUnits="userSpaceOnUse" x1="964.1" x2="1530.7" y1="0" y2="0"><stop offset="0.000" stop-color="#00ffd0"/><stop offset="0.028" stop-color="#00ffd6"/><stop offset="0.056" stop-color="#00ffdc"/><stop offset="0.083" stop-color="#00ffe3"/><stop offset="0.111" stop-color="#00ffea"/><stop offset="0.139" stop-color="#00fff2"/><stop offset="0.167" stop-color="#00fffb"/><stop offset="0.194" stop-color="#00f8ff"/><stop offset="0.222" stop-color="#0aeeff"/><stop offset="0.250" stop-color="#3ee3ff"/><stop offset="0.278" stop-color="#75d8ff"/><stop offset="0.306" stop-color="#adccff"/><stop offset="0.333" stop-color="#e7c0ff"/><stop offset="0.361" stop-color="#ff9ddf"/><stop offset="0.389" stop-color="#ff78b8"/><stop offset="0.417" stop-color="#ff5d9b"/><stop offset="0.444" stop-color="#ff4985"/><stop offset="0.472" stop-color="#ff3974"/><stop offset="0.500" stop-color="#ff2c67"/><stop offset="0.528" stop-color="#ff225c"/><stop offset="0.556" stop-color="#ff1952"/><stop offset="0.583" stop-color="#ff114a"/><stop offset="0.611" stop-color="#ff0b44"/><stop offset="0.639" stop-color="#ff053e"/><stop offset="0.667" stop-color="#ff0139"/><stop offset="0.694" stop-color="#ff0034"/><stop offset="0.722" stop-color="#ff0030"/><stop offset="0.750" stop-color="#ff002c"/><stop offset="0.778" stop-color="#ff0029"/><stop offset="0.806" stop-color="#ff0026"/><stop offset="0.833" stop-color="#ff0023"/><stop offset="0.861" stop-color="#ff0021"/><stop offset="0.889" stop-color="#ff001e"/><stop offset="0.917" stop-color="#ff001c"/><stop offset="0.944" stop-color="#ff001a"/><stop offset="0.972" stop-color="#ff0019"/><stop offset="1.000" stop-color="#ff0017"/></linearGradient><linearGradient id="c53" gradientUnits="userSpaceOnUse" x1="964.8" x2="1528.8" y1="0" y2="0"><stop offset="0.000" stop-color="#00ffd6"/><stop offset="0.028" stop-color="#00ffdc"/><stop offset="0.056" stop-color="#00ffe2"/><stop offset="0.083" stop-color="#00ffe9"/><stop offset="0.111" stop-color="#00fff1"/><stop offset="0.139" stop-color="#00fffa"/><stop offset="0.167" stop-color="#00fbff"/><stop offset="0.194" stop-color="#00f1ff"/><stop offset="0.222" stop-color="#09e7ff"/><stop offset="0.250" stop-color="#3cdcff"/><stop offset="0.278" stop-color="#71d1ff"/><stop offset="0.306" stop-color="#a7c6ff"/><stop offset="0.333" stop-color="#e0baff"/><stop offset="0.361" stop-color="#ff9de7"/><stop offset="0.389" stop-color="#ff78be"/><stop offset="0.417" stop-color="#ff5da0"/><stop offset="0.444" stop-color="#ff488a"/><stop offset="0.472" stop-color="#ff3978"/><stop offset="0.500" stop-color="#ff2c6a"/><stop offset="0.528" stop-color="#ff215f"/><stop offset="0.556" stop-color="#ff1955"/><stop offset="0.583" stop-color="#ff114d"/><stop offset="0.611" stop-color="#ff0b46"/><stop offset="0.639" stop-color="#ff0540"/><stop offset="0.667" stop-color="#ff003b"/><stop offset="0.694" stop-color="#ff0036"/><stop offset="0.722" stop-color="#ff0032"/><stop offset="0.750" stop-color="#ff002e"/><stop offset="0.778" stop-color="#ff002b"/><stop offset="0.806" stop-color="#ff0028"/><stop offset="0.833" stop-color="#ff0025"/><stop offset="0.861" stop-color="#ff0022"/><stop offset="0.889" stop-color="#ff0020"/><stop offset="0.917" stop-color="#ff001e"/><stop offset="0.944" stop-color="#ff001c"/><stop offset="0.972" stop-color="#ff001a"/><stop offset="1.000" stop-color="#ff0018"/></linearGradient><linearGradient id="c54" gradientUnits="userSpaceOnUse" x1="965.5" x2="1526.8" y1="0" y2="0"><stop offset="0.000" stop-color="#00ffdc"/><stop offset="0.028" stop-color="#00ffe2"/><stop offset="0.056" stop-color="#00ffe8"/><stop offset="0.083" stop-color="#00fff0"/><stop offset="0.111" stop-color="#00fff8"/><stop offset="0.139" stop-color="#00fdff"/><stop offset="0.167" stop-color="#00f4ff"/><stop offset="0.194" stop-color="#00eaff"/><stop offset="0.222" stop-color="#08e0ff"/><stop offset="0.250" stop-color="#3ad5ff"/><stop offset="0.278" stop-color="#6dcaff"/><stop offset="0.306" stop-color="#a2bfff"/><stop offset="0.333" stop-color="#d8b4ff"/><stop offset="0.361" stop-color="#ff9dee"/><stop offset="0.389" stop-color="#ff77c4"/><stop offset="0.417" stop-color="#ff5ca6"/><stop offset="0.444" stop-color="#ff488f"/><stop offset="0.472" stop-color="#ff387d"/><stop offset="0.500" stop-color="#ff2b6e"/><stop offset="0.528" stop-color="#ff2162"/><stop offset="0.556" stop-color="#ff1858"/><stop offset="0.583" stop-color="#ff1150"/><stop offset="0.611" stop-color="#ff0a49"/><stop offset="0.639" stop-color="#ff0543"/><stop offset="0.667" stop-color="#ff003d"/><stop offset="0.694" stop-color="#ff0038"/><stop offset="0.722" stop-color="#ff0034"/><stop offset="0.750" stop-color="#ff0030"/><stop offset="0.778" stop-color="#ff002d"/><stop offset="0.806" stop-color="#ff0029"/><stop offset="0.833" stop-color="#ff0027"/><stop offset="0.861" stop-color="#ff0024"/><stop offset="0.889" stop-color="#ff0021"/><stop offset="0.917" stop-color="#ff001f"/><stop offset="0.944" stop-color="#ff001d"/><stop offset="0.972" stop-color="#ff001b"/><stop offset="1.000" stop-color="#ff001a"/></linearGradient><linearGradient id="c55" gradientUnits="userSpaceOnUse" x1="966.3" x2="1524.9" y1="0" y2="0"><stop offset="0.000" stop-color="#00ffe1"/><stop offset="0.029" stop-color="#00ffe8"/><stop offset="0.057" stop-color="#00ffef"/><stop offset="0.086" stop-color="#00fff7"/><stop offset="0.114" stop-color="#00feff"/><stop offset="0.143" stop-color="#00f5ff"/><stop offset="0.171" stop-color="#00ebff"/><stop offset="0.200" stop-color="#00e1ff"/><stop offset="0.229" stop-color="#13d7ff"/><stop offset="0.257" stop-color="#44ccff"/><stop offset="0.286" stop-color="#78c1ff"/><stop offset="0.314" stop-color="#adb6ff"/><stop offset="0.343" stop-color="#e4aaff"/><stop offset="0.371" stop-color="#ff8de4"/><stop offset="0.400" stop-color="#ff6bbd"/><stop offset="0.429" stop-color="#ff53a0"/><stop offset="0.457" stop-color="#ff408a"/><stop offset="0.486" stop-color="#ff3179"/><stop offset="0.514" stop-color="#ff256b"/><stop offset="0.543" stop-color="#ff1c60"/><stop offset="0.571" stop-color="#ff1456"/><stop offset="0.600" stop-color="#ff0d4e"/><stop offset="0.629" stop-color="#ff0747"/><stop offset="0.657" stop-color="#ff0141"/><stop offset="0.686" stop-color="#ff003c"/><stop offset="0.714" stop-color="#ff0037"/><stop offset="0.743" stop-color="#ff0033"/><stop offset="0.771" stop-color="#ff002f"/><stop offset="0.800" stop-color="#ff002c"/><stop offset="0.829" stop-color="#ff0029"/><stop offset="0.857" stop-color="#ff0026"/><stop offset="0.886" stop-color="#ff0023"/><stop offset="0.914" stop-color="#ff0021"/><stop offset="0.943" stop-color="#ff001f"/><stop offset="0.971" stop-color="#ff001d"/><stop offset="1.000" stop-color="#ff001b"/></linearGradient><linearGradient id="c56" gradientUnits="userSpaceOnUse" x1="967.0" x2="1523.0" y1="0" y2="0"><stop offset="0.000" stop-color="#00ffe7"/><stop offset="0.029" stop-color="#00ffee"/><stop offset="0.057" stop-color="#00fff6"/><stop offset="0.086" stop-color="#00fffe"/><stop offset="0.114" stop-color="#00f7ff"/><stop offset="0.143" stop-color="#00eeff"/><stop offset="0.171" stop-color="#00e4ff"/><stop offset="0.200" stop-color="#00daff"/><stop offset="0.229" stop-color="#12d0ff"/><stop offset="0.257" stop-color="#42c6ff"/><stop offset="0.286" stop-color="#74bbff"/><stop offset="0.314" stop-color="#a8b0ff"/><stop offset="0.343" stop-color="#dda4ff"/><stop offset="0.371" stop-color="#ff8ceb"/><stop offset="0.400" stop-color="#ff6bc3"/><stop offset="0.429" stop-color="#ff52a5"/><stop offset="0.457" stop-color="#ff408f"/><stop offset="0.486" stop-color="#ff317d"/><stop offset="0.514" stop-color="#ff256f"/><stop offset="0.543" stop-color="#ff1b63"/><stop offset="0.571" stop-color="#ff1359"/><stop offset="0.600" stop-color="#ff0c51"/><stop offset="0.629" stop-color="#ff064a"/><stop offset="0.657" stop-color="#ff0144"/><stop offset="0.686" stop-color="#ff003e"/><stop offset="0.714" stop-color="#ff0039"/><stop offset="0.743" stop-color="#ff0035"/><stop offset="0.771" stop-color="#ff0031"/><stop offset="0.800" stop-color="#ff002e"/><stop offset="0.829" stop-color="#ff002a"/><stop offset="0.857" stop-color="#ff0028"/><stop offset="0.886" stop-color="#ff0025"/><stop offset="0.914" stop-color="#ff0022"/><stop offset="0.943" stop-color="#ff0020"/><stop offset="0.971" stop-color="#ff001e"/><stop offset="1.000" stop-color="#ff001c"/></linearGradient><linearGradient id="c57" gradientUnits="userSpaceOnUse" x1="967.7" x2="1521.0" y1="0" y2="0"><stop offset="0.000" stop-color="#00ffed"/><stop offset="0.029" stop-color="#00fff5"/><stop offset="0.057" stop-color="#00fffc"/><stop offset="0.086" stop-color="#00f9ff"/><stop offset="0.114" stop-color="#00f0ff"/><stop offset="0.143" stop-color="#00e7ff"/><stop offset="0.171" stop-color="#00deff"/><stop offset="0.200" stop-color="#00d4ff"/><stop offset="0.229" stop-color="#11caff"/><stop offset="0.257" stop-color="#40c0ff"/><stop offset="0.286" stop-color="#70b5ff"/><stop offset="0.314" stop-color="#a3aaff"/><stop offset="0.343" stop-color="#d79fff"/><stop offset="0.371" stop-color="#ff8cf2"/><stop offset="0.400" stop-color="#ff6ac9"/><stop offset="0.429" stop-color="#ff52aa"/><stop offset="0.457" stop-color="#ff3f93"/><stop offset="0.486" stop-color="#ff3181"/><stop offset="0.514" stop-color="#ff2573"/><stop offset="0.543" stop-color="#ff1b67"/><stop offset="0.571" stop-color="#ff135c"/><stop offset="0.600" stop-color="#ff0c54"/><stop offset="0.629" stop-color="#ff064c"/><stop offset="0.657" stop-color="#ff0146"/><stop offset="0.686" stop-color="#ff0040"/><stop offset="0.714" stop-color="#ff003b"/><stop offset="0.743" stop-color="#ff0037"/><stop offset="0.771" stop-color="#ff0033"/><stop offset="0.800" stop-color="#ff002f"/><stop offset="0.829" stop-color="#ff002c"/><stop offset="0.857" stop-color="#ff0029"/><stop offset="0.886" stop-color="#ff0026"/><stop offset="0.914" stop-color="#ff0024"/><stop offset="0.943" stop-color="#ff0022"/><stop offset="0.971" stop-color="#ff0020"/><stop offset="1.000" stop-color="#ff001e"/></linearGradient><linearGradient id="c58" gradientUnits="userSpaceOnUse" x1="968.4" x2="1519.1" y1="0" y2="0"><stop offset="0.000" stop-color="#00fff3"/><stop offset="0.029" stop-color="#00fffb"/><stop offset="0.057" stop-color="#00fbff"/><stop offset="0.086" stop-color="#00f2ff"/><stop offset="0.114" stop-color="#00eaff"/><stop offset="0.143" stop-color="#00e1ff"/><stop offset="0.171" stop-color="#00d8ff"/><stop offset="0.200" stop-color="#00ceff"/><stop offset="0.229" stop-color="#10c4ff"/><stop offset="0.257" stop-color="#3ebaff"/><stop offset="0.286" stop-color="#6db0ff"/><stop offset="0.314" stop-color="#9ea5ff"/><stop offset="0.343" stop-color="#d09aff"/><stop offset="0.371" stop-color="#ff8bfa"/><stop offset="0.400" stop-color="#ff6acf"/><stop offset="0.429" stop-color="#ff51b0"/><stop offset="0.457" stop-color="#ff3f98"/><stop offset="0.486" stop-color="#ff3085"/><stop offset="0.514" stop-color="#ff2476"/><stop offset="0.543" stop-color="#ff1b6a"/><stop offset="0.571" stop-color="#ff135f"/><stop offset="0.600" stop-color="#ff0c57"/><stop offset="0.629" stop-color="#ff064f"/><stop offset="0.657" stop-color="#ff0148"/><stop offset="0.686" stop-color="#ff0043"/><stop offset="0.714" stop-color="#ff003e"/><stop offset="0.743" stop-color="#ff0039"/><stop offset="0.771" stop-color="#ff0035"/><stop offset="0.800" stop-color="#ff0031"/><stop offset="0.829" stop-color="#ff002e"/><stop offset="0.857" stop-color="#ff002b"/><stop offset="0.886" stop-color="#ff0028"/><stop offset="0.914" stop-color="#ff0025"/><stop offset="0.943" stop-color="#ff0023"/><stop offset="0.971" stop-color="#ff0021"/><stop offset="1.000" stop-color="#ff001f"/></linearGradient><linearGradient id="c59" gradientUnits="userSpaceOnUse" x1="969.2" x2="1517.1" y1="0" y2="0"><stop offset="0.000" stop-color="#00fffa"/><stop offset="0.029" stop-color="#00fdff"/><stop offset="0.057" stop-color="#00f4ff"/><stop offset="0.086" stop-color="#00ecff"/><stop offset="0.114" stop-color="#00e4ff"/><stop offset="0.143" stop-color="#00dbff"/><stop offset="0.171" stop-color="#00d2ff"/><stop offset="0.200" stop-color="#00c8ff"/><stop offset="0.229" stop-color="#0fbfff"/><stop offset="0.257" stop-color="#3bb5ff"/><stop offset="0.286" stop-color="#6aaaff"/><stop offset="0.314" stop-color="#99a0ff"/><stop offset="0.343" stop-color="#ca95ff"/><stop offset="0.371" stop-color="#fd8aff"/><stop offset="0.400" stop-color="#ff69d5"/><stop offset="0.429" stop-color="#ff51b5"/><stop offset="0.457" stop-color="#ff3e9d"/><stop offset="0.486" stop-color="#ff3089"/><stop offset="0.514" stop-color="#ff247a"/><stop offset="0.543" stop-color="#ff1a6d"/><stop offset="0.571" stop-color="#ff1263"/><stop offset="0.600" stop-color="#ff0b5a"/><stop offset="0.629" stop-color="#ff0552"/><stop offset="0.657" stop-color="#ff004b"/><stop offset="0.686" stop-color="#ff0045"/><stop offset="0.714" stop-color="#ff0040"/><stop offset="0.743" stop-color="#ff003b"/><stop offset="0.771" stop-color="#ff0037"/><stop offset="0.800" stop-color="#ff0033"/><stop offset="0.829" stop-color="#ff0030"/><stop offset="0.857" stop-color="#ff002c"/><stop offset="0.886" stop-color="#ff002a"/><stop offset="0.914" stop-color="#ff0027"/><stop offset="0.943" stop-color="#ff0025"/><stop offset="0.971" stop-color="#ff0022"/><stop offset="1.000" stop-color="#ff0020"/></linearGradient><linearGradient id="c60" gradientUnits="userSpaceOnUse" x1="969.9" x2="1515.2" y1="0" y2="0"><stop offset="0.000" stop-color="#00feff"/><stop offset="0.029" stop-color="#00f6ff"/><stop offset="0.057" stop-color="#00eeff"/><stop offset="0.086" stop-color="#00e6ff"/><stop offset="0.114" stop-color="#00deff"/><stop offset="0.143" stop-color="#00d5ff"/><stop offset="0.171" stop-color="#00ccff"/><stop offset="0.200" stop-color="#00c3ff"/><stop offset="0.229" stop-color="#0eb9ff"/><stop offset="0.257" stop-color="#39afff"/><stop offset="0.286" stop-color="#66a5ff"/><stop offset="0.314" stop-color="#959bff"/><stop offset="0.343" stop-color="#c490ff"/><stop offset="0.371" stop-color="#f685ff"/><stop offset="0.400" stop-color="#ff69db"/><stop offset="0.429" stop-color="#ff50ba"/><stop offset="0.457" stop-color="#ff3ea1"/><stop offset="0.486" stop-color="#ff2f8e"/><stop offset="0.514" stop-color="#ff247e"/><stop offset="0.543" stop-color="#ff1a71"/><stop offset="0.571" stop-color="#ff1266"/><stop offset="0.600" stop-color="#ff0b5c"/><stop offset="0.629" stop-color="#ff0554"/><stop offset="0.657" stop-color="#ff004d"/><stop offset="0.686" stop-color="#ff0047"/><stop offset="0.714" stop-color="#ff0042"/><stop offset="0.743" stop-color="#ff003d"/><stop offset="0.771" stop-color="#ff0039"/><stop offset="0.800" stop-color="#ff0035"/><stop offset="0.829" stop-color="#ff0031"/><stop offset="0.857" stop-color="#ff002e"/><stop offset="0.886" stop-color="#ff002b"/><stop offset="0.914" stop-color="#ff0029"/><stop offset="0.943" stop-color="#ff0026"/><stop offset="0.971" stop-color="#ff0024"/><stop offset="1.000" stop-color="#ff0022"/></linearGradient><linearGradient id="c61" gradientUnits="userSpaceOnUse" x1="970.6" x2="1513.3" y1="0" y2="0"><stop offset="0.000" stop-color="#00f8ff"/><stop offset="0.029" stop-color="#00f0ff"/><stop offset="0.059" stop-color="#00e8ff"/><stop offset="0.088" stop-color="#00dfff"/><stop offset="0.118" stop-color="#00d7ff"/><stop offset="0.147" stop-color="#00ceff"/><stop offset="0.176" stop-color="#00c5ff"/><stop offset="0.206" stop-color="#00bbff"/><stop offset="0.235" stop-color="#17b2ff"/><stop offset="0.265" stop-color="#43a8ff"/><stop offset="0.294" stop-color="#709dff"/><stop offset="0.324" stop-color="#9f93ff"/><stop offset="0.353" stop-color="#d088ff"/><stop offset="0.382" stop-color="#ff7bfd"/><stop offset="0.412" stop-color="#ff5dd2"/><stop offset="0.441" stop-color="#ff47b4"/><stop offset="0.471" stop-color="#ff369c"/><stop offset="0.500" stop-color="#ff2989"/><stop offset="0.529" stop-color="#ff1e7a"/><stop offset="0.559" stop-color="#ff156e"/><stop offset="0.588" stop-color="#ff0d63"/><stop offset="0.618" stop-color="#ff075a"/><stop offset="0.647" stop-color="#ff0152"/><stop offset="0.676" stop-color="#ff004c"/><stop offset="0.706" stop-color="#ff0046"/><stop offset="0.735" stop-color="#ff0040"/><stop offset="0.765" stop-color="#ff003c"/><stop offset="0.794" stop-color="#ff0038"/><stop offset="0.824" stop-color="#ff0034"/><stop offset="0.853" stop-color="#ff0030"/><stop offset="0.882" stop-color="#ff002d"/><stop offset="0.912" stop-color="#ff002a"/><stop offset="0.941" stop-color="#ff0028"/><stop offset="0.971" stop-color="#ff0025"/><stop offset="1.000" stop-color="#ff0023"/></linearGradient><linearGradient id="c62" gradientUnits="userSpaceOnUse" x1="971.3" x2="1511.3" y1="0" y2="0"><stop offset="0.000" stop-color="#00f2ff"/><stop offset="0.029" stop-color="#00eaff"/><stop offset="0.059" stop-color="#00e2ff"/><stop offset="0.088" stop-color="#00daff"/><stop offset="0.118" stop-color="#00d1ff"/><stop offset="0.147" stop-color="#00c8ff"/><stop offset="0.176" stop-color="#00bfff"/><stop offset="0.206" stop-color="#00b6ff"/><stop offset="0.235" stop-color="#16adff"/><stop offset="0.265" stop-color="#41a3ff"/><stop offset="0.294" stop-color="#6d99ff"/><stop offset="0.324" stop-color="#9b8eff"/><stop offset="0.353" stop-color="#ca84ff"/><stop offset="0.382" stop-color="#fa79ff"/><stop offset="0.412" stop-color="#ff5dd9"/><stop offset="0.441" stop-color="#ff47b9"/><stop offset="0.471" stop-color="#ff36a1"/><stop offset="0.500" stop-color="#ff288d"/><stop offset="0.529" stop-color="#ff1e7e"/><stop offset="0.559" stop-color="#ff1571"/><stop offset="0.588" stop-color="#ff0d66"/><stop offset="0.618" stop-color="#ff075d"/><stop offset="0.647" stop-color="#ff0155"/><stop offset="0.676" stop-color="#ff004e"/><stop offset="0.706" stop-color="#ff0048"/><stop offset="0.735" stop-color="#ff0043"/><stop offset="0.765" stop-color="#ff003e"/><stop offset="0.794" stop-color="#ff003a"/><stop offset="0.824" stop-color="#ff0036"/><stop offset="0.853" stop-color="#ff0032"/><stop offset="0.882" stop-color="#ff002f"/><stop offset="0.912" stop-color="#ff002c"/><stop offset="0.941" stop-color="#ff0029"/><stop offset="0.971" stop-color="#ff0027"/><stop offset="1.000" stop-color="#ff0024"/></linearGradient><linearGradient id="c63" gradientUnits="userSpaceOnUse" x1="972.1" x2="1509.4" y1="0" y2="0"><stop offset="0.000" stop-color="#00ecff"/><stop offset="0.029" stop-color="#00e4ff"/><stop offset="0.059" stop-color="#00dcff"/><stop offset="0.088" stop-color="#00d4ff"/><stop offset="0.118" stop-color="#00ccff"/><stop offset="0.147" stop-color="#00c3ff"/><stop offset="0.176" stop-color="#00baff"/><stop offset="0.206" stop-color="#00b1ff"/><stop offset="0.235" stop-color="#15a8ff"/><stop offset="0.265" stop-color="#3f9eff"/><stop offset="0.294" stop-color="#6a94ff"/><stop offset="0.324" stop-color="#968aff"/><stop offset="0.353" stop-color="#c480ff"/><stop offset="0.382" stop-color="#f375ff"/><stop offset="0.412" stop-color="#ff5cdf"/><stop offset="0.441" stop-color="#ff46be"/><stop offset="0.471" stop-color="#ff35a5"/><stop offset="0.500" stop-color="#ff2891"/><stop offset="0.529" stop-color="#ff1d81"/><stop offset="0.559" stop-color="#ff1474"/><stop offset="0.588" stop-color="#ff0d69"/><stop offset="0.618" stop-color="#ff0660"/><stop offset="0.647" stop-color="#ff0158"/><stop offset="0.676" stop-color="#ff0051"/><stop offset="0.706" stop-color="#ff004a"/><stop offset="0.735" stop-color="#ff0045"/><stop offset="0.765" stop-color="#ff0040"/><stop offset="0.794" stop-color="#ff003b"/><stop offset="0.824" stop-color="#ff0038"/><stop offset="0.853" stop-color="#ff0034"/><stop offset="0.882" stop-color="#ff0031"/><stop offset="0.912" stop-color="#ff002e"/><stop offset="0.941" stop-color="#ff002b"/><stop offset="0.971" stop-color="#ff0028"/><stop offset="1.000" stop-color="#ff0026"/></linearGradient><linearGradient id="c64" gradientUnits="userSpaceOnUse" x1="972.8" x2="1507.5" y1="0" y2="0"><stop offset="0.000" stop-color="#00e7ff"/><stop offset="0.029" stop-color="#00dfff"/><stop offset="0.059" stop-color="#00d7ff"/><stop offset="0.088" stop-color="#00cfff"/><stop offset="0.118" stop-color="#00c7ff"/><stop offset="0.147" stop-color="#00beff"/><stop offset="0.176" stop-color="#00b5ff"/><stop offset="0.206" stop-color="#00acff"/><stop offset="0.235" stop-color="#14a3ff"/><stop offset="0.265" stop-color="#3d9aff"/><stop offset="0.294" stop-color="#6790ff"/><stop offset="0.324" stop-color="#9286ff"/><stop offset="0.353" stop-color="#bf7cff"/><stop offset="0.382" stop-color="#ed71ff"/><stop offset="0.412" stop-color="#ff5ce5"/><stop offset="0.441" stop-color="#ff46c3"/><stop offset="0.471" stop-color="#ff35aa"/><stop offset="0.500" stop-color="#ff2896"/><stop offset="0.529" stop-color="#ff1d85"/><stop offset="0.559" stop-color="#ff1478"/><stop offset="0.588" stop-color="#ff0c6c"/><stop offset="0.618" stop-color="#ff0663"/><stop offset="0.647" stop-color="#ff005a"/><stop offset="0.676" stop-color="#ff0053"/><stop offset="0.706" stop-color="#ff004d"/><stop offset="0.735" stop-color="#ff0047"/><stop offset="0.765" stop-color="#ff0042"/><stop offset="0.794" stop-color="#ff003d"/><stop offset="0.824" stop-color="#ff0039"/><stop offset="0.853" stop-color="#ff0036"/><stop offset="0.882" stop-color="#ff0032"/><stop offset="0.912" stop-color="#ff002f"/><stop offset="0.941" stop-color="#ff002c"/><stop offset="0.971" stop-color="#ff002a"/><stop offset="1.000" stop-color="#ff0027"/></linearGradient><linearGradient id="c65" gradientUnits="userSpaceOnUse" x1="973.5" x2="1505.5" y1="0" y2="0"><stop offset="0.000" stop-color="#00e1ff"/><stop offset="0.029" stop-color="#00daff"/><stop offset="0.059" stop-color="#00d2ff"/><stop offset="0.088" stop-color="#00caff"/><stop offset="0.118" stop-color="#00c2ff"/><stop offset="0.147" stop-color="#00b9ff"/><stop offset="0.176" stop-color="#00b1ff"/><stop offset="0.206" stop-color="#00a8ff"/><stop offset="0.235" stop-color="#139fff"/><stop offset="0.265" stop-color="#3b96ff"/><stop offset="0.294" stop-color="#648cff"/><stop offset="0.324" stop-color="#8e82ff"/><stop offset="0.353" stop-color="#ba78ff"/><stop offset="0.382" stop-color="#e66eff"/><stop offset="0.412" stop-color="#ff5beb"/><stop offset="0.441" stop-color="#ff45c9"/><stop offset="0.471" stop-color="#ff34af"/><stop offset="0.500" stop-color="#ff279a"/><stop offset="0.529" stop-color="#ff1c89"/><stop offset="0.559" stop-color="#ff137b"/><stop offset="0.588" stop-color="#ff0c6f"/><stop offset="0.618" stop-color="#ff0666"/><stop offset="0.647" stop-color="#ff005d"/><stop offset="0.676" stop-color="#ff0056"/><stop offset="0.706" stop-color="#ff004f"/><stop offset="0.735" stop-color="#ff0049"/><stop offset="0.765" stop-color="#ff0044"/><stop offset="0.794" stop-color="#ff003f"/><stop offset="0.824" stop-color="#ff003b"/><stop offset="0.853" stop-color="#ff0037"/><stop offset="0.882" stop-color="#ff0034"/><stop offset="0.912" stop-color="#ff0031"/><stop offset="0.941" stop-color="#ff002e"/><stop offset="0.971" stop-color="#ff002b"/><stop offset="1.000" stop-color="#ff0029"/></linearGradient><linearGradient id="c66" gradientUnits="userSpaceOnUse" x1="974.2" x2="1503.6" y1="0" y2="0"><stop offset="0.000" stop-color="#00dcff"/><stop offset="0.029" stop-color="#00d4ff"/><stop offset="0.059" stop-color="#00cdff"/><stop offset="0.088" stop-color="#00c5ff"/><stop offset="0.118" stop-color="#00bdff"/><stop offset="0.147" stop-color="#00b5ff"/><stop offset="0.176" stop-color="#00acff"/><stop offset="0.206" stop-color="#00a3ff"/><stop offset="0.235" stop-color="#129bff"/><stop offset="0.265" stop-color="#3991ff"/><stop offset="0.294" stop-color="#6188ff"/><stop offset="0.324" stop-color="#8a7eff"/><stop offset="0.353" stop-color="#b574ff"/><stop offset="0.382" stop-color="#e06aff"/><stop offset="0.412" stop-color="#ff5bf2"/><stop offset="0.441" stop-color="#ff45ce"/><stop offset="0.471" stop-color="#ff34b3"/><stop offset="0.500" stop-color="#ff279e"/><stop offset="0.529" stop-color="#ff1c8d"/><stop offset="0.559" stop-color="#ff137f"/><stop offset="0.588" stop-color="#ff0c73"/><stop offset="0.618" stop-color="#ff0569"/><stop offset="0.647" stop-color="#ff0060"/><stop offset="0.676" stop-color="#ff0058"/><stop offset="0.706" stop-color="#ff0051"/><stop offset="0.735" stop-color="#ff004c"/><stop offset="0.765" stop-color="#ff0046"/><stop offset="0.794" stop-color="#ff0041"/><stop offset="0.824" stop-color="#ff003d"/><stop offset="0.853" stop-color="#ff0039"/><stop offset="0.882" stop-color="#ff0036"/><stop offset="0.912" stop-color="#ff0033"/><stop offset="0.941" stop-color="#ff0030"/><stop offset="0.971" stop-color="#ff002d"/><stop offset="1.000" stop-color="#ff002a"/></linearGradient><linearGradient id="c67" gradientUnits="userSpaceOnUse" x1="975.0" x2="1501.7" y1="0" y2="0"><stop offset="0.000" stop-color="#00d7ff"/><stop offset="0.030" stop-color="#00cfff"/><stop offset="0.061" stop-color="#00c7ff"/><stop offset="0.091" stop-color="#00bfff"/><stop offset="0.121" stop-color="#00b7ff"/><stop offset="0.152" stop-color="#00afff"/><stop offset="0.182" stop-color="#00a6ff"/><stop offset="0.212" stop-color="#009dff"/><stop offset="0.242" stop-color="#1a94ff"/><stop offset="0.273" stop-color="#428bff"/><stop offset="0.303" stop-color="#6b81ff"/><stop offset="0.333" stop-color="#9477ff"/><stop offset="0.364" stop-color="#bf6dff"/><stop offset="0.394" stop-color="#ec63ff"/><stop offset="0.424" stop-color="#ff50e7"/><stop offset="0.455" stop-color="#ff3cc6"/><stop offset="0.485" stop-color="#ff2dad"/><stop offset="0.515" stop-color="#ff2099"/><stop offset="0.545" stop-color="#ff1788"/><stop offset="0.576" stop-color="#ff0e7b"/><stop offset="0.606" stop-color="#ff076f"/><stop offset="0.636" stop-color="#ff0166"/><stop offset="0.667" stop-color="#ff005d"/><stop offset="0.697" stop-color="#ff0056"/><stop offset="0.727" stop-color="#ff004f"/><stop offset="0.758" stop-color="#ff004a"/><stop offset="0.788" stop-color="#ff0045"/><stop offset="0.818" stop-color="#ff0040"/><stop offset="0.848" stop-color="#ff003c"/><stop offset="0.879" stop-color="#ff0038"/><stop offset="0.909" stop-color="#ff0035"/><stop offset="0.939" stop-color="#ff0031"/><stop offset="0.970" stop-color="#ff002e"/><stop offset="1.000" stop-color="#ff002c"/></linearGradient><linearGradient id="c68" gradientUnits="userSpaceOnUse" x1="975.8" x2="1499.7" y1="0" y2="0"><stop offset="0.000" stop-color="#00d2ff"/><stop offset="0.030" stop-color="#00caff"/><stop offset="0.061" stop-color="#00c3ff"/><stop offset="0.091" stop-color="#00bbff"/><stop offset="0.121" stop-color="#00b3ff"/><stop offset="0.152" stop-color="#00aaff"/><stop offset="0.182" stop-color="#00a2ff"/><stop offset="0.212" stop-color="#0099ff"/><stop offset="0.242" stop-color="#1a90ff"/><stop offset="0.273" stop-color="#4087ff"/><stop offset="0.303" stop-color="#687eff"/><stop offset="0.333" stop-color="#9174ff"/><stop offset="0.364" stop-color="#bb6aff"/><stop offset="0.394" stop-color="#e660ff"/><stop offset="0.424" stop-color="#ff4fed"/><stop offset="0.455" stop-color="#ff3ccc"/><stop offset="0.485" stop-color="#ff2cb2"/><stop offset="0.515" stop-color="#ff209d"/><stop offset="0.545" stop-color="#ff168c"/><stop offset="0.576" stop-color="#ff0e7e"/><stop offset="0.606" stop-color="#ff0773"/><stop offset="0.636" stop-color="#ff0169"/><stop offset="0.667" stop-color="#ff0060"/><stop offset="0.697" stop-color="#ff0058"/><stop offset="0.727" stop-color="#ff0052"/><stop offset="0.758" stop-color="#ff004c"/><stop offset="0.788" stop-color="#ff0047"/><stop offset="0.818" stop-color="#ff0042"/><stop offset="0.848" stop-color="#ff003e"/><stop offset="0.879" stop-color="#ff003a"/><stop offset="0.909" stop-color="#ff0036"/><stop offset="0.939" stop-color="#ff0033"/><stop offset="0.970" stop-color="#ff0030"/><stop offset="1.000" stop-color="#ff002d"/></linearGradient><linearGradient id="c69" gradientUnits="userSpaceOnUse" x1="976.7" x2="1497.8" y1="0" y2="0"><stop offset="0.000" stop-color="#00cdff"/><stop offset="0.030" stop-color="#00c6ff"/><stop offset="0.061" stop-color="#00beff"/><stop offset="0.091" stop-color="#00b6ff"/><stop offset="0.121" stop-color="#00aeff"/><stop offset="0.152" stop-color="#00a6ff"/><stop offset="0.182" stop-color="#009eff"/><stop offset="0.212" stop-color="#0095ff"/><stop offset="0.242" stop-color="#198cff"/><stop offset="0.273" stop-color="#3f83ff"/><stop offset="0.303" stop-color="#657aff"/><stop offset="0.333" stop-color="#8d71ff"/><stop offset="0.364" stop-color="#b667ff"/><stop offset="0.394" stop-color="#e05dff"/><stop offset="0.424" stop-color="#ff4ff3"/><stop offset="0.455" stop-color="#ff3bd1"/><stop offset="0.485" stop-color="#ff2cb6"/><stop offset="0.515" stop-color="#ff20a1"/><stop offset="0.545" stop-color="#ff1690"/><stop offset="0.576" stop-color="#ff0e82"/><stop offset="0.606" stop-color="#ff0776"/><stop offset="0.636" stop-color="#ff016b"/><stop offset="0.667" stop-color="#ff0063"/><stop offset="0.697" stop-color="#ff005b"/><stop offset="0.727" stop-color="#ff0054"/><stop offset="0.758" stop-color="#ff004e"/><stop offset="0.788" stop-color="#ff0049"/><stop offset="0.818" stop-color="#ff0044"/><stop offset="0.848" stop-color="#ff0040"/><stop offset="0.879" stop-color="#ff003c"/><stop offset="0.909" stop-color="#ff0038"/><stop offset="0.939" stop-color="#ff0035"/><stop offset="0.970" stop-color="#ff0032"/><stop offset="1.000" stop-color="#ff002f"/></linearGradient><linearGradient id="c70" gradientUnits="userSpaceOnUse" x1="977.6" x2="1495.8" y1="0" y2="0"><stop offset="0.000" stop-color="#00c8ff"/><stop offset="0.030" stop-color="#00c1ff"/><stop offset="0.061" stop-color="#00b9ff"/><stop offset="0.091" stop-color="#00b2ff"/><stop offset="0.121" stop-color="#00aaff"/><stop offset="0.152" stop-color="#00a2ff"/><stop offset="0.182" stop-color="#009aff"/><stop offset="0.212" stop-color="#0091ff"/><stop offset="0.242" stop-color="#1889ff"/><stop offset="0.273" stop-color="#3d80ff"/><stop offset="0.303" stop-color="#6377ff"/><stop offset="0.333" stop-color="#8a6dff"/><stop offset="0.364" stop-color="#b264ff"/><stop offset="0.394" stop-color="#db5aff"/><stop offset="0.424" stop-color="#ff4ef9"/><stop offset="0.455" stop-color="#ff3ad6"/><stop offset="0.485" stop-color="#ff2bbb"/><stop offset="0.515" stop-color="#ff1fa5"/><stop offset="0.545" stop-color="#ff1594"/><stop offset="0.576" stop-color="#ff0d85"/><stop offset="0.606" stop-color="#ff0679"/><stop offset="0.636" stop-color="#ff006e"/><stop offset="0.667" stop-color="#ff0065"/><stop offset="0.697" stop-color="#ff005d"/><stop offset="0.727" stop-color="#ff0056"/><stop offset="0.758" stop-color="#ff0050"/><stop offset="0.788" stop-color="#ff004b"/><stop offset="0.818" stop-color="#ff0046"/><stop offset="0.848" stop-color="#ff0041"/><stop offset="0.879" stop-color="#ff003d"/><stop offset="0.909" stop-color="#ff003a"/><stop offset="0.939" stop-color="#ff0036"/><stop offset="0.970" stop-color="#ff0033"/><stop offset="1.000" stop-color="#ff0030"/></linearGradient><linearGradient id="c71" gradientUnits="userSpaceOnUse" x1="978.5" x2="1493.9" y1="0" y2="0"><stop offset="0.000" stop-color="#00c4ff"/><stop offset="0.030" stop-color="#00bdff"/><stop offset="0.061" stop-color="#00b5ff"/><stop offset="0.091" stop-color="#00aeff"/><stop offset="0.121" stop-color="#00a6ff"/><stop offset="0.152" stop-color="#009eff"/><stop offset="0.182" stop-color="#0096ff"/><stop offset="0.212" stop-color="#008dff"/><stop offset="0.242" stop-color="#1885ff"/><stop offset="0.273" stop-color="#3c7cff"/><stop offset="0.303" stop-color="#6173ff"/><stop offset="0.333" stop-color="#876aff"/><stop offset="0.364" stop-color="#ae61ff"/><stop offset="0.394" stop-color="#d557ff"/><stop offset="0.424" stop-color="#fe4dff"/><stop offset="0.455" stop-color="#ff3adb"/><stop offset="0.485" stop-color="#ff2bbf"/><stop offset="0.515" stop-color="#ff1fa9"/><stop offset="0.545" stop-color="#ff1597"/><stop offset="0.576" stop-color="#ff0d88"/><stop offset="0.606" stop-color="#ff067c"/><stop offset="0.636" stop-color="#ff0071"/><stop offset="0.667" stop-color="#ff0068"/><stop offset="0.697" stop-color="#ff0060"/><stop offset="0.727" stop-color="#ff0059"/><stop offset="0.758" stop-color="#ff0053"/><stop offset="0.788" stop-color="#ff004d"/><stop offset="0.818" stop-color="#ff0048"/><stop offset="0.848" stop-color="#ff0043"/><stop offset="0.879" stop-color="#ff003f"/><stop offset="0.909" stop-color="#ff003b"/><stop offset="0.939" stop-color="#ff0038"/><stop offset="0.970" stop-color="#ff0035"/><stop offset="1.000" stop-color="#ff0032"/></linearGradient><linearGradient id="c72" gradientUnits="userSpaceOnUse" x1="979.4" x2="1492.0" y1="0" y2="0"><stop offset="0.000" stop-color="#00bfff"/><stop offset="0.030" stop-color="#00b8ff"/><stop offset="0.061" stop-color="#00b1ff"/><stop offset="0.091" stop-color="#00a9ff"/><stop offset="0.121" stop-color="#00a2ff"/><stop offset="0.152" stop-color="#009aff"/><stop offset="0.182" stop-color="#0092ff"/><stop offset="0.212" stop-color="#008aff"/><stop offset="0.242" stop-color="#1781ff"/><stop offset="0.273" stop-color="#3a79ff"/><stop offset="0.303" stop-color="#5e70ff"/><stop offset="0.333" stop-color="#8467ff"/><stop offset="0.364" stop-color="#aa5eff"/><stop offset="0.394" stop-color="#d054ff"/><stop offset="0.424" stop-color="#f84bff"/><stop offset="0.455" stop-color="#ff39e1"/><stop offset="0.485" stop-color="#ff2ac4"/><stop offset="0.515" stop-color="#ff1eae"/><stop offset="0.545" stop-color="#ff149b"/><stop offset="0.576" stop-color="#ff0c8c"/><stop offset="0.606" stop-color="#ff057f"/><stop offset="0.636" stop-color="#ff0074"/><stop offset="0.667" stop-color="#ff006b"/><stop offset="0.697" stop-color="#ff0063"/><stop offset="0.727" stop-color="#ff005b"/><stop offset="0.758" stop-color="#ff0055"/><stop offset="0.788" stop-color="#ff004f"/><stop offset="0.818" stop-color="#ff004a"/><stop offset="0.848" stop-color="#ff0045"/><stop offset="0.879" stop-color="#ff0041"/><stop offset="0.909" stop-color="#ff003d"/><stop offset="0.939" stop-color="#ff003a"/><stop offset="0.970" stop-color="#ff0036"/><stop offset="1.000" stop-color="#ff0033"/></linearGradient><linearGradient id="c73" gradientUnits="userSpaceOnUse" x1="980.3" x2="1490.0" y1="0" y2="0"><stop offset="0.000" stop-color="#00bbff"/><stop offset="0.031" stop-color="#00b4ff"/><stop offset="0.062" stop-color="#00acff"/><stop offset="0.094" stop-color="#00a5ff"/><stop offset="0.125" stop-color="#009dff"/><stop offset="0.156" stop-color="#0095ff"/><stop offset="0.188" stop-color="#008dff"/><stop offset="0.219" stop-color="#0084ff"/><stop offset="0.250" stop-color="#1f7cff"/><stop offset="0.281" stop-color="#4373ff"/><stop offset="0.313" stop-color="#676aff"/><stop offset="0.344" stop-color="#8d61ff"/><stop offset="0.375" stop-color="#b458ff"/><stop offset="0.406" stop-color="#db4eff"/><stop offset="0.438" stop-color="#ff43fa"/><stop offset="0.469" stop-color="#ff31d8"/><stop offset="0.500" stop-color="#ff23bd"/><stop offset="0.531" stop-color="#ff18a7"/><stop offset="0.562" stop-color="#ff0f96"/><stop offset="0.594" stop-color="#ff0887"/><stop offset="0.625" stop-color="#ff017b"/><stop offset="0.656" stop-color="#ff0071"/><stop offset="0.687" stop-color="#ff0068"/><stop offset="0.719" stop-color="#ff0060"/><stop offset="0.750" stop-color="#ff0059"/><stop offset="0.781" stop-color="#ff0053"/><stop offset="0.812" stop-color="#ff004d"/><stop offset="0.844" stop-color="#ff0048"/><stop offset="0.875" stop-color="#ff0044"/><stop offset="0.906" stop-color="#ff003f"/><stop offset="0.938" stop-color="#ff003c"/><stop offset="0.969" stop-color="#ff0038"/><stop offset="1.000" stop-color="#ff0035"/></linearGradient><linearGradient id="c74" gradientUnits="userSpaceOnUse" x1="981.2" x2="1488.1" y1="0" y2="0"><stop offset="0.000" stop-color="#00b7ff"/><stop offset="0.031" stop-color="#00b0ff"/><stop offset="0.062" stop-color="#00a8ff"/><stop offset="0.094" stop-color="#00a1ff"/><stop offset="0.125" stop-color="#0099ff"/><stop offset="0.156" stop-color="#0091ff"/><stop offset="0.187" stop-color="#0089ff"/><stop offset="0.219" stop-color="#0081ff"/><stop offset="0.250" stop-color="#1e79ff"/><stop offset="0.281" stop-color="#4170ff"/><stop offset="0.312" stop-color="#6567ff"/><stop offset="0.344" stop-color="#8a5eff"/><stop offset="0.375" stop-color="#b055ff"/><stop offset="0.406" stop-color="#d64cff"/><stop offset="0.437" stop-color="#fe42ff"/><stop offset="0.469" stop-color="#ff30dd"/><stop offset="0.500" stop-color="#ff23c1"/><stop offset="0.531" stop-color="#ff18ac"/><stop offset="0.562" stop-color="#ff0f9a"/><stop offset="0.594" stop-color="#ff078b"/><stop offset="0.625" stop-color="#ff017e"/><stop offset="0.656" stop-color="#ff0074"/><stop offset="0.687" stop-color="#ff006a"/><stop offset="0.719" stop-color="#ff0062"/><stop offset="0.750" stop-color="#ff005b"/><stop offset="0.781" stop-color="#ff0055"/><stop offset="0.812" stop-color="#ff004f"/><stop offset="0.844" stop-color="#ff004a"/><stop offset="0.875" stop-color="#ff0045"/><stop offset="0.906" stop-color="#ff0041"/><stop offset="0.938" stop-color="#ff003d"/><stop offset="0.969" stop-color="#ff003a"/><stop offset="1.000" stop-color="#ff0037"/></linearGradient><linearGradient id="c75" gradientUnits="userSpaceOnUse" x1="982.1" x2="1486.2" y1="0" y2="0"><stop offset="0.000" stop-color="#00b3ff"/><stop offset="0.031" stop-color="#00acff"/><stop offset="0.062" stop-color="#00a4ff"/><stop offset="0.094" stop-color="#009dff"/><stop offset="0.125" stop-color="#0095ff"/><stop offset="0.156" stop-color="#008eff"/><stop offset="0.188" stop-color="#0086ff"/><stop offset="0.219" stop-color="#007eff"/><stop offset="0.250" stop-color="#1d75ff"/><stop offset="0.281" stop-color="#406dff"/><stop offset="0.312" stop-color="#6364ff"/><stop offset="0.344" stop-color="#875cff"/><stop offset="0.375" stop-color="#ac52ff"/><stop offset="0.406" stop-color="#d149ff"/><stop offset="0.438" stop-color="#f840ff"/><stop offset="0.469" stop-color="#ff30e2"/><stop offset="0.500" stop-color="#ff22c6"/><stop offset="0.531" stop-color="#ff17b0"/><stop offset="0.562" stop-color="#ff0e9d"/><stop offset="0.594" stop-color="#ff078e"/><stop offset="0.625" stop-color="#ff0182"/><stop offset="0.656" stop-color="#ff0077"/><stop offset="0.688" stop-color="#ff006d"/><stop offset="0.719" stop-color="#ff0065"/><stop offset="0.750" stop-color="#ff005e"/><stop offset="0.781" stop-color="#ff0057"/><stop offset="0.812" stop-color="#ff0051"/><stop offset="0.844" stop-color="#ff004c"/><stop offset="0.875" stop-color="#ff0047"/><stop offset="0.906" stop-color="#ff0043"/><stop offset="0.938" stop-color="#ff003f"/><stop offset="0.969" stop-color="#ff003c"/><stop offset="1.000" stop-color="#ff0038"/></linearGradient><linearGradient id="c76" gradientUnits="userSpaceOnUse" x1="983.0" x2="1484.2" y1="0" y2="0"><stop offset="0.000" stop-color="#00afff"/><stop offset="0.031" stop-color="#00a8ff"/><stop offset="0.063" stop-color="#00a1ff"/><stop offset="0.094" stop-color="#0099ff"/><stop offset="0.125" stop-color="#0092ff"/><stop offset="0.156" stop-color="#008aff"/><stop offset="0.188" stop-color="#0082ff"/><stop offset="0.219" stop-color="#007bff"/><stop offset="0.250" stop-color="#1d72ff"/><stop offset="0.281" stop-color="#3e6aff"/><stop offset="0.313" stop-color="#6162ff"/><stop offset="0.344" stop-color="#8459ff"/><stop offset="0.375" stop-color="#a850ff"/><stop offset="0.406" stop-color="#cd47ff"/><stop offset="0.438" stop-color="#f23eff"/><stop offset="0.469" stop-color="#ff2fe7"/><stop offset="0.500" stop-color="#ff22cb"/><stop offset="0.531" stop-color="#ff17b4"/><stop offset="0.563" stop-color="#ff0ea1"/><stop offset="0.594" stop-color="#ff0692"/><stop offset="0.625" stop-color="#ff0085"/><stop offset="0.656" stop-color="#ff007a"/><stop offset="0.688" stop-color="#ff0070"/><stop offset="0.719" stop-color="#ff0067"/><stop offset="0.750" stop-color="#ff0060"/><stop offset="0.781" stop-color="#ff0059"/><stop offset="0.812" stop-color="#ff0053"/><stop offset="0.844" stop-color="#ff004e"/><stop offset="0.875" stop-color="#ff0049"/><stop offset="0.906" stop-color="#ff0045"/><stop offset="0.938" stop-color="#ff0041"/><stop offset="0.969" stop-color="#ff003d"/><stop offset="1.000" stop-color="#ff003a"/></linearGradient><linearGradient id="c77" gradientUnits="userSpaceOnUse" x1="983.9" x2="1482.3" y1="0" y2="0"><stop offset="0.000" stop-color="#00abff"/><stop offset="0.031" stop-color="#00a4ff"/><stop offset="0.063" stop-color="#009dff"/><stop offset="0.094" stop-color="#0096ff"/><stop offset="0.125" stop-color="#008eff"/><stop offset="0.156" stop-color="#0087ff"/><stop offset="0.187" stop-color="#007fff"/><stop offset="0.219" stop-color="#0077ff"/><stop offset="0.250" stop-color="#1c6fff"/><stop offset="0.281" stop-color="#3d67ff"/><stop offset="0.312" stop-color="#5e5fff"/><stop offset="0.344" stop-color="#8156ff"/><stop offset="0.375" stop-color="#a44eff"/><stop offset="0.406" stop-color="#c845ff"/><stop offset="0.437" stop-color="#ed3bff"/><stop offset="0.469" stop-color="#ff2fed"/><stop offset="0.500" stop-color="#ff21cf"/><stop offset="0.531" stop-color="#ff16b8"/><stop offset="0.562" stop-color="#ff0da5"/><stop offset="0.594" stop-color="#ff0695"/><stop offset="0.625" stop-color="#ff0088"/><stop offset="0.656" stop-color="#ff007d"/><stop offset="0.688" stop-color="#ff0073"/><stop offset="0.719" stop-color="#ff006a"/><stop offset="0.750" stop-color="#ff0062"/><stop offset="0.781" stop-color="#ff005c"/><stop offset="0.813" stop-color="#ff0056"/><stop offset="0.844" stop-color="#ff0050"/><stop offset="0.875" stop-color="#ff004b"/><stop offset="0.906" stop-color="#ff0047"/><stop offset="0.938" stop-color="#ff0043"/><stop offset="0.969" stop-color="#ff003f"/><stop offset="1.000" stop-color="#ff003c"/></linearGradient><linearGradient id="c78" gradientUnits="userSpaceOnUse" x1="984.8" x2="1480.3" y1="0" y2="0"><stop offset="0.000" stop-color="#00a7ff"/><stop offset="0.032" stop-color="#00a0ff"/><stop offset="0.065" stop-color="#0099ff"/><stop offset="0.097" stop-color="#0091ff"/><stop offset="0.129" stop-color="#008aff"/><stop offset="0.161" stop-color="#0082ff"/><stop offset="0.194" stop-color="#007bff"/><stop offset="0.226" stop-color="#0373ff"/><stop offset="0.258" stop-color="#236aff"/><stop offset="0.290" stop-color="#4562ff"/><stop offset="0.323" stop-color="#675aff"/><stop offset="0.355" stop-color="#8a51ff"/><stop offset="0.387" stop-color="#ae48ff"/><stop offset="0.419" stop-color="#d33fff"/><stop offset="0.452" stop-color="#f835ff"/><stop offset="0.484" stop-color="#ff27e3"/><stop offset="0.516" stop-color="#ff1bc7"/><stop offset="0.548" stop-color="#ff11b1"/><stop offset="0.581" stop-color="#ff089f"/><stop offset="0.613" stop-color="#ff0290"/><stop offset="0.645" stop-color="#ff0084"/><stop offset="0.677" stop-color="#ff0079"/><stop offset="0.710" stop-color="#ff006f"/><stop offset="0.742" stop-color="#ff0067"/><stop offset="0.774" stop-color="#ff0060"/><stop offset="0.806" stop-color="#ff0059"/><stop offset="0.839" stop-color="#ff0053"/><stop offset="0.871" stop-color="#ff004e"/><stop offset="0.903" stop-color="#ff0049"/><stop offset="0.935" stop-color="#ff0045"/><stop offset="0.968" stop-color="#ff0041"/><stop offset="1.000" stop-color="#ff003d"/></linearGradient><linearGradient id="c79" gradientUnits="userSpaceOnUse" x1="985.7" x2="1478.4" y1="0" y2="0"><stop offset="0.000" stop-color="#00a3ff"/><stop offset="0.032" stop-color="#009cff"/><stop offset="0.065" stop-color="#0095ff"/><stop offset="0.097" stop-color="#008eff"/><stop offset="0.129" stop-color="#0087ff"/><stop offset="0.161" stop-color="#007fff"/><stop offset="0.194" stop-color="#0078ff"/><stop offset="0.226" stop-color="#0370ff"/><stop offset="0.258" stop-color="#2368ff"/><stop offset="0.290" stop-color="#435fff"/><stop offset="0.323" stop-color="#6557ff"/><stop offset="0.355" stop-color="#874eff"/><stop offset="0.387" stop-color="#aa46ff"/><stop offset="0.419" stop-color="#ce3dff"/><stop offset="0.452" stop-color="#f334ff"/><stop offset="0.484" stop-color="#ff26e8"/><stop offset="0.516" stop-color="#ff1acc"/><stop offset="0.548" stop-color="#ff10b5"/><stop offset="0.581" stop-color="#ff08a3"/><stop offset="0.613" stop-color="#ff0194"/><stop offset="0.645" stop-color="#ff0087"/><stop offset="0.677" stop-color="#ff007c"/><stop offset="0.710" stop-color="#ff0072"/><stop offset="0.742" stop-color="#ff0069"/><stop offset="0.774" stop-color="#ff0062"/><stop offset="0.806" stop-color="#ff005b"/><stop offset="0.839" stop-color="#ff0055"/><stop offset="0.871" stop-color="#ff0050"/><stop offset="0.903" stop-color="#ff004b"/><stop offset="0.935" stop-color="#ff0047"/><stop offset="0.968" stop-color="#ff0043"/><stop offset="1.000" stop-color="#ff003f"/></linearGradient><linearGradient id="c80" gradientUnits="userSpaceOnUse" x1="986.6" x2="1476.5" y1="0" y2="0"><stop offset="0.000" stop-color="#00a0ff"/><stop offset="0.032" stop-color="#0099ff"/><stop offset="0.065" stop-color="#0092ff"/><stop offset="0.097" stop-color="#008bff"/><stop offset="0.129" stop-color="#0084ff"/><stop offset="0.161" stop-color="#007cff"/><stop offset="0.194" stop-color="#0075ff"/><stop offset="0.226" stop-color="#026dff"/><stop offset="0.258" stop-color="#2265ff"/><stop offset="0.290" stop-color="#425dff"/><stop offset="0.323" stop-color="#6355ff"/><stop offset="0.355" stop-color="#844cff"/><stop offset="0.387" stop-color="#a744ff"/><stop offset="0.419" stop-color="#ca3bff"/><stop offset="0.452" stop-color="#ee32ff"/><stop offset="0.484" stop-color="#ff26ed"/><stop offset="0.516" stop-color="#ff19d1"/><stop offset="0.548" stop-color="#ff10ba"/><stop offset="0.581" stop-color="#ff08a7"/><stop offset="0.613" stop-color="#ff0197"/><stop offset="0.645" stop-color="#ff008a"/><stop offset="0.677" stop-color="#ff007f"/><stop offset="0.710" stop-color="#ff0075"/><stop offset="0.742" stop-color="#ff006c"/><stop offset="0.774" stop-color="#ff0064"/><stop offset="0.806" stop-color="#ff005e"/><stop offset="0.839" stop-color="#ff0058"/><stop offset="0.871" stop-color="#ff0052"/><stop offset="0.903" stop-color="#ff004d"/><stop offset="0.935" stop-color="#ff0049"/><stop offset="0.968" stop-color="#ff0045"/><stop offset="1.000" stop-color="#ff0041"/></linearGradient><linearGradient id="c81" gradientUnits="userSpaceOnUse" x1="987.5" x2="1474.5" y1="0" y2="0"><stop offset="0.000" stop-color="#009cff"/><stop offset="0.032" stop-color="#0096ff"/><stop offset="0.065" stop-color="#008fff"/><stop offset="0.097" stop-color="#0088ff"/><stop offset="0.129" stop-color="#0080ff"/><stop offset="0.161" stop-color="#0079ff"/><stop offset="0.194" stop-color="#0072ff"/><stop offset="0.226" stop-color="#026aff"/><stop offset="0.258" stop-color="#2162ff"/><stop offset="0.290" stop-color="#415aff"/><stop offset="0.323" stop-color="#6152ff"/><stop offset="0.355" stop-color="#814aff"/><stop offset="0.387" stop-color="#a342ff"/><stop offset="0.419" stop-color="#c539ff"/><stop offset="0.452" stop-color="#e830ff"/><stop offset="0.484" stop-color="#ff25f2"/><stop offset="0.516" stop-color="#ff19d5"/><stop offset="0.548" stop-color="#ff0fbe"/><stop offset="0.581" stop-color="#ff07ab"/><stop offset="0.613" stop-color="#ff009b"/><stop offset="0.645" stop-color="#ff008d"/><stop offset="0.677" stop-color="#ff0082"/><stop offset="0.710" stop-color="#ff0078"/><stop offset="0.742" stop-color="#ff006f"/><stop offset="0.774" stop-color="#ff0067"/><stop offset="0.806" stop-color="#ff0060"/><stop offset="0.839" stop-color="#ff005a"/><stop offset="0.871" stop-color="#ff0054"/><stop offset="0.903" stop-color="#ff004f"/><stop offset="0.935" stop-color="#ff004b"/><stop offset="0.968" stop-color="#ff0046"/><stop offset="1.000" stop-color="#ff0043"/></linearGradient><linearGradient id="c82" gradientUnits="userSpaceOnUse" x1="988.4" x2="1472.6" y1="0" y2="0"><stop offset="0.000" stop-color="#0099ff"/><stop offset="0.032" stop-color="#0092ff"/><stop offset="0.065" stop-color="#008bff"/><stop offset="0.097" stop-color="#0084ff"/><stop offset="0.129" stop-color="#007dff"/><stop offset="0.161" stop-color="#0076ff"/><stop offset="0.194" stop-color="#006fff"/><stop offset="0.226" stop-color="#0267ff"/><stop offset="0.258" stop-color="#2060ff"/><stop offset="0.290" stop-color="#3f58ff"/><stop offset="0.323" stop-color="#5f50ff"/><stop offset="0.355" stop-color="#7f48ff"/><stop offset="0.387" stop-color="#a040ff"/><stop offset="0.419" stop-color="#c137ff"/><stop offset="0.452" stop-color="#e32eff"/><stop offset="0.484" stop-color="#ff24f8"/><stop offset="0.516" stop-color="#ff18da"/><stop offset="0.548" stop-color="#ff0fc2"/><stop offset="0.581" stop-color="#ff07af"/><stop offset="0.613" stop-color="#ff009e"/><stop offset="0.645" stop-color="#ff0090"/><stop offset="0.677" stop-color="#ff0085"/><stop offset="0.710" stop-color="#ff007a"/><stop offset="0.742" stop-color="#ff0071"/><stop offset="0.774" stop-color="#ff0069"/><stop offset="0.806" stop-color="#ff0062"/><stop offset="0.839" stop-color="#ff005c"/><stop offset="0.871" stop-color="#ff0056"/><stop offset="0.903" stop-color="#ff0051"/><stop offset="0.935" stop-color="#ff004d"/><stop offset="0.968" stop-color="#ff0048"/><stop offset="1.000" stop-color="#ff0044"/></linearGradient><linearGradient id="c83" gradientUnits="userSpaceOnUse" x1="989.3" x2="1470.7" y1="0" y2="0"><stop offset="0.000" stop-color="#0096ff"/><stop offset="0.032" stop-color="#008fff"/><stop offset="0.065" stop-color="#0088ff"/><stop offset="0.097" stop-color="#0081ff"/><stop offset="0.129" stop-color="#007aff"/><stop offset="0.161" stop-color="#0073ff"/><stop offset="0.194" stop-color="#006cff"/><stop offset="0.226" stop-color="#0265ff"/><stop offset="0.258" stop-color="#205dff"/><stop offset="0.290" stop-color="#3e56ff"/><stop offset="0.323" stop-color="#5d4eff"/><stop offset="0.355" stop-color="#7c46ff"/><stop offset="0.387" stop-color="#9c3eff"/><stop offset="0.419" stop-color="#bd35ff"/><stop offset="0.452" stop-color="#df2dff"/><stop offset="0.484" stop-color="#ff24fd"/><stop offset="0.516" stop-color="#ff18df"/><stop offset="0.548" stop-color="#ff0ec6"/><stop offset="0.581" stop-color="#ff06b3"/><stop offset="0.613" stop-color="#ff00a2"/><stop offset="0.645" stop-color="#ff0094"/><stop offset="0.677" stop-color="#ff0088"/><stop offset="0.710" stop-color="#ff007d"/><stop offset="0.742" stop-color="#ff0074"/><stop offset="0.774" stop-color="#ff006c"/><stop offset="0.806" stop-color="#ff0065"/><stop offset="0.839" stop-color="#ff005e"/><stop offset="0.871" stop-color="#ff0059"/><stop offset="0.903" stop-color="#ff0053"/><stop offset="0.935" stop-color="#ff004e"/><stop offset="0.968" stop-color="#ff004a"/><stop offset="1.000" stop-color="#ff0046"/></linearGradient><linearGradient id="c84" gradientUnits="userSpaceOnUse" x1="990.2" x2="1468.7" y1="0" y2="0"><stop offset="0.000" stop-color="#0092ff"/><stop offset="0.033" stop-color="#008cff"/><stop offset="0.067" stop-color="#0085ff"/><stop offset="0.100" stop-color="#007eff"/><stop offset="0.133" stop-color="#0077ff"/><stop offset="0.167" stop-color="#006fff"/><stop offset="0.200" stop-color="#0068ff"/><stop offset="0.233" stop-color="#0961ff"/><stop offset="0.267" stop-color="#2759ff"/><stop offset="0.300" stop-color="#4551ff"/><stop offset="0.333" stop-color="#6549ff"/><stop offset="0.367" stop-color="#8541ff"/><stop offset="0.400" stop-color="#a639ff"/><stop offset="0.433" stop-color="#c730ff"/><stop offset="0.467" stop-color="#e927ff"/><stop offset="0.500" stop-color="#ff1df2"/><stop offset="0.533" stop-color="#ff12d6"/><stop offset="0.567" stop-color="#ff09bf"/><stop offset="0.600" stop-color="#ff02ac"/><stop offset="0.633" stop-color="#ff009c"/><stop offset="0.667" stop-color="#ff008f"/><stop offset="0.700" stop-color="#ff0083"/><stop offset="0.733" stop-color="#ff0079"/><stop offset="0.767" stop-color="#ff0070"/><stop offset="0.800" stop-color="#ff0069"/><stop offset="0.833" stop-color="#ff0062"/><stop offset="0.867" stop-color="#ff005b"/><stop offset="0.900" stop-color="#ff0056"/><stop offset="0.933" stop-color="#ff0051"/><stop offset="0.967" stop-color="#ff004c"/><stop offset="1.000" stop-color="#ff0048"/></linearGradient><linearGradient id="c85" gradientUnits="userSpaceOnUse" x1="991.1" x2="1466.8" y1="0" y2="0"><stop offset="0.000" stop-color="#008fff"/><stop offset="0.033" stop-color="#0088ff"/><stop offset="0.067" stop-color="#0082ff"/><stop offset="0.100" stop-color="#007bff"/><stop offset="0.133" stop-color="#0074ff"/><stop offset="0.167" stop-color="#006dff"/><stop offset="0.200" stop-color="#0066ff"/><stop offset="0.233" stop-color="#085eff"/><stop offset="0.267" stop-color="#2657ff"/><stop offset="0.300" stop-color="#444fff"/><stop offset="0.333" stop-color="#6347ff"/><stop offset="0.367" stop-color="#823fff"/><stop offset="0.400" stop-color="#a237ff"/><stop offset="0.433" stop-color="#c32eff"/><stop offset="0.467" stop-color="#e426ff"/><stop offset="0.500" stop-color="#ff1cf8"/><stop offset="0.533" stop-color="#ff11da"/><stop offset="0.567" stop-color="#ff08c3"/><stop offset="0.600" stop-color="#ff01b0"/><stop offset="0.633" stop-color="#ff00a0"/><stop offset="0.667" stop-color="#ff0092"/><stop offset="0.700" stop-color="#ff0086"/><stop offset="0.733" stop-color="#ff007c"/><stop offset="0.767" stop-color="#ff0073"/><stop offset="0.800" stop-color="#ff006b"/><stop offset="0.833" stop-color="#ff0064"/><stop offset="0.867" stop-color="#ff005e"/><stop offset="0.900" stop-color="#ff0058"/><stop offset="0.933" stop-color="#ff0053"/><stop offset="0.967" stop-color="#ff004e"/><stop offset="1.000" stop-color="#ff004a"/></linearGradient><linearGradient id="c86" gradientUnits="userSpaceOnUse" x1="992.0" x2="1464.8" y1="0" y2="0"><stop offset="0.000" stop-color="#008cff"/><stop offset="0.033" stop-color="#0085ff"/><stop offset="0.067" stop-color="#007fff"/><stop offset="0.100" stop-color="#0078ff"/><stop offset="0.133" stop-color="#0071ff"/><stop offset="0.167" stop-color="#006aff"/><stop offset="0.200" stop-color="#0063ff"/><stop offset="0.233" stop-color="#085cff"/><stop offset="0.267" stop-color="#2554ff"/><stop offset="0.300" stop-color="#434dff"/><stop offset="0.333" stop-color="#6145ff"/><stop offset="0.367" stop-color="#803dff"/><stop offset="0.400" stop-color="#9f35ff"/><stop offset="0.433" stop-color="#bf2dff"/><stop offset="0.467" stop-color="#e024ff"/><stop offset="0.500" stop-color="#ff1cfd"/><stop offset="0.533" stop-color="#ff11df"/><stop offset="0.567" stop-color="#ff08c7"/><stop offset="0.600" stop-color="#ff01b4"/><stop offset="0.633" stop-color="#ff00a3"/><stop offset="0.667" stop-color="#ff0095"/><stop offset="0.700" stop-color="#ff0089"/><stop offset="0.733" stop-color="#ff007f"/><stop offset="0.767" stop-color="#ff0076"/><stop offset="0.800" stop-color="#ff006e"/><stop offset="0.833" stop-color="#ff0066"/><stop offset="0.867" stop-color="#ff0060"/><stop offset="0.900" stop-color="#ff005a"/><stop offset="0.933" stop-color="#ff0055"/><stop offset="0.967" stop-color="#ff0050"/><stop offset="1.000" stop-color="#ff004c"/></linearGradient><linearGradient id="c87" gradientUnits="userSpaceOnUse" x1="992.9" x2="1462.9" y1="0" y2="0"><stop offset="0.000" stop-color="#0089ff"/><stop offset="0.033" stop-color="#0083ff"/><stop offset="0.067" stop-color="#007cff"/><stop offset="0.100" stop-color="#0075ff"/><stop offset="0.133" stop-color="#006fff"/><stop offset="0.167" stop-color="#0068ff"/><stop offset="0.200" stop-color="#0061ff"/><stop offset="0.233" stop-color="#0859ff"/><stop offset="0.267" stop-color="#2452ff"/><stop offset="0.300" stop-color="#414bff"/><stop offset="0.333" stop-color="#5f43ff"/><stop offset="0.367" stop-color="#7d3bff"/><stop offset="0.400" stop-color="#9c33ff"/><stop offset="0.433" stop-color="#bb2bff"/><stop offset="0.467" stop-color="#db23ff"/><stop offset="0.500" stop-color="#fc1bff"/><stop offset="0.533" stop-color="#ff10e4"/><stop offset="0.567" stop-color="#ff07cc"/><stop offset="0.600" stop-color="#ff00b8"/><stop offset="0.633" stop-color="#ff00a7"/><stop offset="0.667" stop-color="#ff0099"/><stop offset="0.700" stop-color="#ff008c"/><stop offset="0.733" stop-color="#ff0082"/><stop offset="0.767" stop-color="#ff0078"/><stop offset="0.800" stop-color="#ff0070"/><stop offset="0.833" stop-color="#ff0069"/><stop offset="0.867" stop-color="#ff0062"/><stop offset="0.900" stop-color="#ff005c"/><stop offset="0.933" stop-color="#ff0057"/><stop offset="0.967" stop-color="#ff0052"/><stop offset="1.000" stop-color="#ff004e"/></linearGradient><linearGradient id="c88" gradientUnits="userSpaceOnUse" x1="993.8" x2="1461.0" y1="0" y2="0"><stop offset="0.000" stop-color="#0086ff"/><stop offset="0.033" stop-color="#0080ff"/><stop offset="0.067" stop-color="#0079ff"/><stop offset="0.100" stop-color="#0073ff"/><stop offset="0.133" stop-color="#006cff"/><stop offset="0.167" stop-color="#0065ff"/><stop offset="0.200" stop-color="#005eff"/><stop offset="0.233" stop-color="#0857ff"/><stop offset="0.267" stop-color="#2350ff"/><stop offset="0.300" stop-color="#4049ff"/><stop offset="0.333" stop-color="#5d41ff"/><stop offset="0.367" stop-color="#7a3aff"/><stop offset="0.400" stop-color="#9932ff"/><stop offset="0.433" stop-color="#b72aff"/><stop offset="0.467" stop-color="#d722ff"/><stop offset="0.500" stop-color="#f719ff"/><stop offset="0.533" stop-color="#ff10e9"/><stop offset="0.567" stop-color="#ff07d0"/><stop offset="0.600" stop-color="#ff00bc"/><stop offset="0.633" stop-color="#ff00aa"/><stop offset="0.667" stop-color="#ff009c"/><stop offset="0.700" stop-color="#ff008f"/><stop offset="0.733" stop-color="#ff0085"/><stop offset="0.767" stop-color="#ff007b"/><stop offset="0.800" stop-color="#ff0073"/><stop offset="0.833" stop-color="#ff006b"/><stop offset="0.867" stop-color="#ff0065"/><stop offset="0.900" stop-color="#ff005e"/><stop offset="0.933" stop-color="#ff0059"/><stop offset="0.967" stop-color="#ff0054"/><stop offset="1.000" stop-color="#ff004f"/></linearGradient><linearGradient id="c89" gradientUnits="userSpaceOnUse" x1="994.7" x2="1459.0" y1="0" y2="0"><stop offset="0.000" stop-color="#0083ff"/><stop offset="0.033" stop-color="#007dff"/><stop offset="0.067" stop-color="#0077ff"/><stop offset="0.100" stop-color="#0070ff"/><stop offset="0.133" stop-color="#0069ff"/><stop offset="0.167" stop-color="#0063ff"/><stop offset="0.200" stop-color="#005cff"/><stop offset="0.233" stop-color="#0755ff"/><stop offset="0.267" stop-color="#234eff"/><stop offset="0.300" stop-color="#3f47ff"/><stop offset="0.333" stop-color="#5b3fff"/><stop offset="0.367" stop-color="#7838ff"/><stop offset="0.400" stop-color="#9530ff"/><stop offset="0.433" stop-color="#b428ff"/><stop offset="0.467" stop-color="#d220ff"/><stop offset="0.500" stop-color="#f218ff"/><stop offset="0.533" stop-color="#ff0fee"/><stop offset="0.567" stop-color="#ff06d4"/><stop offset="0.600" stop-color="#ff00c0"/><stop offset="0.633" stop-color="#ff00ae"/><stop offset="0.667" stop-color="#ff009f"/><stop offset="0.700" stop-color="#ff0093"/><stop offset="0.733" stop-color="#ff0088"/><stop offset="0.767" stop-color="#ff007e"/><stop offset="0.800" stop-color="#ff0075"/><stop offset="0.833" stop-color="#ff006e"/><stop offset="0.867" stop-color="#ff0067"/><stop offset="0.900" stop-color="#ff0061"/><stop offset="0.933" stop-color="#ff005b"/><stop offset="0.967" stop-color="#ff0056"/><stop offset="1.000" stop-color="#ff0051"/></linearGradient><linearGradient id="c90" gradientUnits="userSpaceOnUse" x1="995.6" x2="1457.1" y1="0" y2="0"><stop offset="0.000" stop-color="#0080ff"/><stop offset="0.034" stop-color="#007aff"/><stop offset="0.069" stop-color="#0073ff"/><stop offset="0.103" stop-color="#006dff"/><stop offset="0.138" stop-color="#0066ff"/><stop offset="0.172" stop-color="#005fff"/><stop offset="0.207" stop-color="#0058ff"/><stop offset="0.241" stop-color="#0d51ff"/><stop offset="0.276" stop-color="#294aff"/><stop offset="0.310" stop-color="#4643ff"/><stop offset="0.345" stop-color="#633bff"/><stop offset="0.379" stop-color="#8033ff"/><stop offset="0.414" stop-color="#9f2bff"/><stop offset="0.448" stop-color="#bd23ff"/><stop offset="0.483" stop-color="#dd1bff"/><stop offset="0.517" stop-color="#fd13ff"/><stop offset="0.552" stop-color="#ff09e4"/><stop offset="0.586" stop-color="#ff02cc"/><stop offset="0.621" stop-color="#ff00b8"/><stop offset="0.655" stop-color="#ff00a8"/><stop offset="0.690" stop-color="#ff009a"/><stop offset="0.724" stop-color="#ff008e"/><stop offset="0.759" stop-color="#ff0083"/><stop offset="0.793" stop-color="#ff007a"/><stop offset="0.828" stop-color="#ff0071"/><stop offset="0.862" stop-color="#ff006a"/><stop offset="0.897" stop-color="#ff0064"/><stop offset="0.931" stop-color="#ff005e"/><stop offset="0.966" stop-color="#ff0058"/><stop offset="1.000" stop-color="#ff0053"/></linearGradient><linearGradient id="c91" gradientUnits="userSpaceOnUse" x1="996.5" x2="1455.2" y1="0" y2="0"><stop offset="0.000" stop-color="#007eff"/><stop offset="0.034" stop-color="#0077ff"/><stop offset="0.069" stop-color="#0071ff"/><stop offset="0.103" stop-color="#006aff"/><stop offset="0.138" stop-color="#0064ff"/><stop offset="0.172" stop-color="#005dff"/><stop offset="0.207" stop-color="#0056ff"/><stop offset="0.241" stop-color="#0d4fff"/><stop offset="0.276" stop-color="#2948ff"/><stop offset="0.310" stop-color="#4441ff"/><stop offset="0.345" stop-color="#6139ff"/><stop offset="0.379" stop-color="#7e32ff"/><stop offset="0.414" stop-color="#9b2aff"/><stop offset="0.448" stop-color="#ba22ff"/><stop offset="0.483" stop-color="#d81aff"/><stop offset="0.517" stop-color="#f812ff"/><stop offset="0.552" stop-color="#ff09e9"/><stop offset="0.586" stop-color="#ff01d0"/><stop offset="0.621" stop-color="#ff00bc"/><stop offset="0.655" stop-color="#ff00ab"/><stop offset="0.690" stop-color="#ff009d"/><stop offset="0.724" stop-color="#ff0091"/><stop offset="0.759" stop-color="#ff0086"/><stop offset="0.793" stop-color="#ff007c"/><stop offset="0.828" stop-color="#ff0074"/><stop offset="0.862" stop-color="#ff006d"/><stop offset="0.897" stop-color="#ff0066"/><stop offset="0.931" stop-color="#ff0060"/><stop offset="0.966" stop-color="#ff005a"/><stop offset="1.000" stop-color="#ff0055"/></linearGradient><linearGradient id="c92" gradientUnits="userSpaceOnUse" x1="997.4" x2="1453.2" y1="0" y2="0"><stop offset="0.000" stop-color="#007bff"/><stop offset="0.034" stop-color="#0075ff"/><stop offset="0.069" stop-color="#006eff"/><stop offset="0.103" stop-color="#0068ff"/><stop offset="0.138" stop-color="#0061ff"/><stop offset="0.172" stop-color="#005bff"/><stop offset="0.207" stop-color="#0054ff"/><stop offset="0.241" stop-color="#0d4dff"/><stop offset="0.276" stop-color="#2846ff"/><stop offset="0.310" stop-color="#433fff"/><stop offset="0.345" stop-color="#5f38ff"/><stop offset="0.379" stop-color="#7b30ff"/><stop offset="0.414" stop-color="#9829ff"/><stop offset="0.448" stop-color="#b621ff"/><stop offset="0.483" stop-color="#d419ff"/><stop offset="0.517" stop-color="#f311ff"/><stop offset="0.552" stop-color="#ff08ed"/><stop offset="0.586" stop-color="#ff00d5"/><stop offset="0.621" stop-color="#ff00c0"/><stop offset="0.655" stop-color="#ff00af"/><stop offset="0.690" stop-color="#ff00a0"/><stop offset="0.724" stop-color="#ff0094"/><stop offset="0.759" stop-color="#ff0089"/><stop offset="0.793" stop-color="#ff007f"/><stop offset="0.828" stop-color="#ff0077"/><stop offset="0.862" stop-color="#ff006f"/><stop offset="0.897" stop-color="#ff0068"/><stop offset="0.931" stop-color="#ff0062"/><stop offset="0.966" stop-color="#ff005c"/><stop offset="1.000" stop-color="#ff0057"/></linearGradient><linearGradient id="c93" gradientUnits="userSpaceOnUse" x1="998.3" x2="1451.3" y1="0" y2="0"><stop offset="0.000" stop-color="#0078ff"/><stop offset="0.034" stop-color="#0072ff"/><stop offset="0.069" stop-color="#006cff"/><stop offset="0.103" stop-color="#0066ff"/><stop offset="0.138" stop-color="#005fff"/><stop offset="0.172" stop-color="#0059ff"/><stop offset="0.207" stop-color="#0052ff"/><stop offset="0.241" stop-color="#0c4bff"/><stop offset="0.276" stop-color="#2744ff"/><stop offset="0.310" stop-color="#423dff"/><stop offset="0.345" stop-color="#5d36ff"/><stop offset="0.379" stop-color="#792fff"/><stop offset="0.414" stop-color="#9527ff"/><stop offset="0.448" stop-color="#b220ff"/><stop offset="0.483" stop-color="#d018ff"/><stop offset="0.517" stop-color="#ee10ff"/><stop offset="0.552" stop-color="#ff08f2"/><stop offset="0.586" stop-color="#ff00d9"/><stop offset="0.621" stop-color="#ff00c4"/><stop offset="0.655" stop-color="#ff00b3"/><stop offset="0.690" stop-color="#ff00a4"/><stop offset="0.724" stop-color="#ff0097"/><stop offset="0.759" stop-color="#ff008c"/><stop offset="0.793" stop-color="#ff0082"/><stop offset="0.828" stop-color="#ff0079"/><stop offset="0.862" stop-color="#ff0071"/><stop offset="0.897" stop-color="#ff006a"/><stop offset="0.931" stop-color="#ff0064"/><stop offset="0.966" stop-color="#ff005f"/><stop offset="1.000" stop-color="#ff0059"/></linearGradient><linearGradient id="c94" gradientUnits="userSpaceOnUse" x1="999.2" x2="1449.3" y1="0" y2="0"><stop offset="0.000" stop-color="#0076ff"/><stop offset="0.034" stop-color="#0070ff"/><stop offset="0.069" stop-color="#0069ff"/><stop offset="0.103" stop-color="#0063ff"/><stop offset="0.138" stop-color="#005dff"/><stop offset="0.172" stop-color="#0056ff"/><stop offset="0.207" stop-color="#0050ff"/><stop offset="0.241" stop-color="#0c49ff"/><stop offset="0.276" stop-color="#2642ff"/><stop offset="0.310" stop-color="#403bff"/><stop offset="0.345" stop-color="#5b34ff"/><stop offset="0.379" stop-color="#772dff"/><stop offset="0.414" stop-color="#9226ff"/><stop offset="0.448" stop-color="#af1eff"/><stop offset="0.483" stop-color="#cc17ff"/><stop offset="0.517" stop-color="#e90fff"/><stop offset="0.552" stop-color="#ff07f7"/><stop offset="0.586" stop-color="#ff00dd"/><stop offset="0.621" stop-color="#ff00c8"/><stop offset="0.655" stop-color="#ff00b6"/><stop offset="0.690" stop-color="#ff00a7"/><stop offset="0.724" stop-color="#ff009a"/><stop offset="0.759" stop-color="#ff008f"/><stop offset="0.793" stop-color="#ff0085"/><stop offset="0.828" stop-color="#ff007c"/><stop offset="0.862" stop-color="#ff0074"/><stop offset="0.897" stop-color="#ff006d"/><stop offset="0.931" stop-color="#ff0066"/><stop offset="0.966" stop-color="#ff0061"/><stop offset="1.000" stop-color="#ff005b"/></linearGradient><linearGradient id="c95" gradientUnits="userSpaceOnUse" x1="1000.2" x2="1447.4" y1="0" y2="0"><stop offset="0.000" stop-color="#0073ff"/><stop offset="0.036" stop-color="#006dff"/><stop offset="0.071" stop-color="#0067ff"/><stop offset="0.107" stop-color="#0060ff"/><stop offset="0.143" stop-color="#005aff"/><stop offset="0.179" stop-color="#0053ff"/><stop offset="0.214" stop-color="#004cff"/><stop offset="0.250" stop-color="#1246ff"/><stop offset="0.286" stop-color="#2d3fff"/><stop offset="0.321" stop-color="#4838ff"/><stop offset="0.357" stop-color="#6330ff"/><stop offset="0.393" stop-color="#7f29ff"/><stop offset="0.429" stop-color="#9c21ff"/><stop offset="0.464" stop-color="#b91aff"/><stop offset="0.500" stop-color="#d612ff"/><stop offset="0.536" stop-color="#f40aff"/><stop offset="0.571" stop-color="#ff02ec"/><stop offset="0.607" stop-color="#ff00d4"/><stop offset="0.643" stop-color="#ff00c0"/><stop offset="0.679" stop-color="#ff00af"/><stop offset="0.714" stop-color="#ff00a1"/><stop offset="0.750" stop-color="#ff0095"/><stop offset="0.786" stop-color="#ff008a"/><stop offset="0.821" stop-color="#ff0080"/><stop offset="0.857" stop-color="#ff0078"/><stop offset="0.893" stop-color="#ff0070"/><stop offset="0.929" stop-color="#ff0069"/><stop offset="0.964" stop-color="#ff0063"/><stop offset="1.000" stop-color="#ff005d"/></linearGradient><linearGradient id="c96" gradientUnits="userSpaceOnUse" x1="1001.3" x2="1445.5" y1="0" y2="0"><stop offset="0.000" stop-color="#0071ff"/><stop offset="0.036" stop-color="#006aff"/><stop offset="0.071" stop-color="#0064ff"/><stop offset="0.107" stop-color="#005eff"/><stop offset="0.143" stop-color="#0058ff"/><stop offset="0.179" stop-color="#0051ff"/><stop offset="0.214" stop-color="#004aff"/><stop offset="0.250" stop-color="#1244ff"/><stop offset="0.286" stop-color="#2c3dff"/><stop offset="0.321" stop-color="#4736ff"/><stop offset="0.357" stop-color="#612fff"/><stop offset="0.393" stop-color="#7d28ff"/><stop offset="0.429" stop-color="#9920ff"/><stop offset="0.464" stop-color="#b519ff"/><stop offset="0.500" stop-color="#d211ff"/><stop offset="0.536" stop-color="#f009ff"/><stop offset="0.571" stop-color="#ff01f1"/><stop offset="0.607" stop-color="#ff00d9"/><stop offset="0.643" stop-color="#ff00c4"/><stop offset="0.679" stop-color="#ff00b3"/><stop offset="0.714" stop-color="#ff00a4"/><stop offset="0.750" stop-color="#ff0098"/><stop offset="0.786" stop-color="#ff008d"/><stop offset="0.821" stop-color="#ff0083"/><stop offset="0.857" stop-color="#ff007a"/><stop offset="0.893" stop-color="#ff0072"/><stop offset="0.929" stop-color="#ff006c"/><stop offset="0.964" stop-color="#ff0065"/><stop offset="1.000" stop-color="#ff0060"/></linearGradient><linearGradient id="c97" gradientUnits="userSpaceOnUse" x1="1002.4" x2="1443.5" y1="0" y2="0"><stop offset="0.000" stop-color="#006eff"/><stop offset="0.036" stop-color="#0068ff"/><stop offset="0.071" stop-color="#0062ff"/><stop offset="0.107" stop-color="#005cff"/><stop offset="0.143" stop-color="#0055ff"/><stop offset="0.179" stop-color="#004fff"/><stop offset="0.214" stop-color="#0049ff"/><stop offset="0.250" stop-color="#1242ff"/><stop offset="0.286" stop-color="#2b3bff"/><stop offset="0.321" stop-color="#4534ff"/><stop offset="0.357" stop-color="#602dff"/><stop offset="0.393" stop-color="#7b26ff"/><stop offset="0.429" stop-color="#961fff"/><stop offset="0.464" stop-color="#b218ff"/><stop offset="0.500" stop-color="#ce10ff"/><stop offset="0.536" stop-color="#eb08ff"/><stop offset="0.571" stop-color="#ff01f6"/><stop offset="0.607" stop-color="#ff00dd"/><stop offset="0.643" stop-color="#ff00c8"/><stop offset="0.679" stop-color="#ff00b7"/><stop offset="0.714" stop-color="#ff00a8"/><stop offset="0.750" stop-color="#ff009b"/><stop offset="0.786" stop-color="#ff008f"/><stop offset="0.821" stop-color="#ff0086"/><stop offset="0.857" stop-color="#ff007d"/><stop offset="0.893" stop-color="#ff0075"/><stop offset="0.929" stop-color="#ff006e"/><stop offset="0.964" stop-color="#ff0067"/><stop offset="1.000" stop-color="#ff0062"/></linearGradient><linearGradient id="c98" gradientUnits="userSpaceOnUse" x1="1003.5" x2="1441.6" y1="0" y2="0"><stop offset="0.000" stop-color="#006cff"/><stop offset="0.036" stop-color="#0066ff"/><stop offset="0.071" stop-color="#0060ff"/><stop offset="0.107" stop-color="#005aff"/><stop offset="0.143" stop-color="#0053ff"/><stop offset="0.179" stop-color="#004dff"/><stop offset="0.214" stop-color="#0047ff"/><stop offset="0.250" stop-color="#1240ff"/><stop offset="0.286" stop-color="#2b39ff"/><stop offset="0.321" stop-color="#4433ff"/><stop offset="0.357" stop-color="#5e2cff"/><stop offset="0.393" stop-color="#7925ff"/><stop offset="0.429" stop-color="#931eff"/><stop offset="0.464" stop-color="#af17ff"/><stop offset="0.500" stop-color="#ca0fff"/><stop offset="0.536" stop-color="#e708ff"/><stop offset="0.571" stop-color="#ff00fb"/><stop offset="0.607" stop-color="#ff00e1"/><stop offset="0.643" stop-color="#ff00cc"/><stop offset="0.679" stop-color="#ff00ba"/><stop offset="0.714" stop-color="#ff00ab"/><stop offset="0.750" stop-color="#ff009e"/><stop offset="0.786" stop-color="#ff0092"/><stop offset="0.821" stop-color="#ff0088"/><stop offset="0.857" stop-color="#ff007f"/><stop offset="0.893" stop-color="#ff0077"/><stop offset="0.929" stop-color="#ff0070"/><stop offset="0.964" stop-color="#ff006a"/><stop offset="1.000" stop-color="#ff0064"/></linearGradient><linearGradient id="c99" gradientUnits="userSpaceOnUse" x1="1004.6" x2="1439.7" y1="0" y2="0"><stop offset="0.000" stop-color="#0069ff"/><stop offset="0.036" stop-color="#0063ff"/><stop offset="0.071" stop-color="#005dff"/><stop offset="0.107" stop-color="#0057ff"/><stop offset="0.143" stop-color="#0051ff"/><stop offset="0.179" stop-color="#004bff"/><stop offset="0.214" stop-color="#0045ff"/><stop offset="0.250" stop-color="#123eff"/><stop offset="0.286" stop-color="#2a38ff"/><stop offset="0.321" stop-color="#4331ff"/><stop offset="0.357" stop-color="#5d2aff"/><stop offset="0.393" stop-color="#7624ff"/><stop offset="0.429" stop-color="#911dff"/><stop offset="0.464" stop-color="#ac15ff"/><stop offset="0.500" stop-color="#c70eff"/><stop offset="0.536" stop-color="#e207ff"/><stop offset="0.571" stop-color="#ff00ff"/><stop offset="0.607" stop-color="#ff00e5"/><stop offset="0.643" stop-color="#ff00d0"/><stop offset="0.679" stop-color="#ff00be"/><stop offset="0.714" stop-color="#ff00ae"/><stop offset="0.750" stop-color="#ff00a1"/><stop offset="0.786" stop-color="#ff0095"/><stop offset="0.821" stop-color="#ff008b"/><stop offset="0.857" stop-color="#ff0082"/><stop offset="0.893" stop-color="#ff007a"/><stop offset="0.929" stop-color="#ff0073"/><stop offset="0.964" stop-color="#ff006c"/><stop offset="1.000" stop-color="#ff0066"/></linearGradient><linearGradient id="c100" gradientUnits="userSpaceOnUse" x1="1005.8" x2="1437.7" y1="0" y2="0"><stop offset="0.000" stop-color="#0067ff"/><stop offset="0.037" stop-color="#0061ff"/><stop offset="0.074" stop-color="#005bff"/><stop offset="0.111" stop-color="#0055ff"/><stop offset="0.148" stop-color="#004eff"/><stop offset="0.185" stop-color="#0048ff"/><stop offset="0.222" stop-color="#0042ff"/><stop offset="0.259" stop-color="#183bff"/><stop offset="0.296" stop-color="#3134ff"/><stop offset="0.333" stop-color="#4a2dff"/><stop offset="0.370" stop-color="#6427ff"/><stop offset="0.407" stop-color="#7f20ff"/><stop offset="0.444" stop-color="#9a18ff"/><stop offset="0.481" stop-color="#b511ff"/><stop offset="0.519" stop-color="#d10aff"/><stop offset="0.556" stop-color="#ee02ff"/><stop offset="0.593" stop-color="#ff00f4"/><stop offset="0.630" stop-color="#ff00dc"/><stop offset="0.667" stop-color="#ff00c7"/><stop offset="0.704" stop-color="#ff00b6"/><stop offset="0.741" stop-color="#ff00a8"/><stop offset="0.778" stop-color="#ff009b"/><stop offset="0.815" stop-color="#ff0090"/><stop offset="0.852" stop-color="#ff0086"/><stop offset="0.889" stop-color="#ff007d"/><stop offset="0.926" stop-color="#ff0076"/><stop offset="0.963" stop-color="#ff006f"/><stop offset="1.000" stop-color="#ff0068"/></linearGradient><linearGradient id="c101" gradientUnits="userSpaceOnUse" x1="1006.9" x2="1435.8" y1="0" y2="0"><stop offset="0.000" stop-color="#0065ff"/><stop offset="0.037" stop-color="#005fff"/><stop offset="0.074" stop-color="#0059ff"/><stop offset="0.111" stop-color="#0053ff"/><stop offset="0.148" stop-color="#004cff"/><stop offset="0.185" stop-color="#0046ff"/><stop offset="0.222" stop-color="#0040ff"/><stop offset="0.259" stop-color="#1739ff"/><stop offset="0.296" stop-color="#3033ff"/><stop offset="0.333" stop-color="#492cff"/><stop offset="0.370" stop-color="#6325ff"/><stop offset="0.407" stop-color="#7d1eff"/><stop offset="0.444" stop-color="#9717ff"/><stop offset="0.481" stop-color="#b210ff"/><stop offset="0.519" stop-color="#cd09ff"/><stop offset="0.556" stop-color="#e901ff"/><stop offset="0.593" stop-color="#ff00f9"/><stop offset="0.630" stop-color="#ff00e0"/><stop offset="0.667" stop-color="#ff00cb"/><stop offset="0.704" stop-color="#ff00ba"/><stop offset="0.741" stop-color="#ff00ab"/><stop offset="0.778" stop-color="#ff009e"/><stop offset="0.815" stop-color="#ff0093"/><stop offset="0.852" stop-color="#ff0089"/><stop offset="0.889" stop-color="#ff0080"/><stop offset="0.926" stop-color="#ff0078"/><stop offset="0.963" stop-color="#ff0071"/><stop offset="1.000" stop-color="#ff006b"/></linearGradient><linearGradient id="c102" gradientUnits="userSpaceOnUse" x1="1008.0" x2="1433.8" y1="0" y2="0"><stop offset="0.000" stop-color="#0062ff"/><stop offset="0.037" stop-color="#005cff"/><stop offset="0.074" stop-color="#0057ff"/><stop offset="0.111" stop-color="#0051ff"/><stop offset="0.148" stop-color="#004bff"/><stop offset="0.185" stop-color="#0044ff"/><stop offset="0.222" stop-color="#003eff"/><stop offset="0.259" stop-color="#1738ff"/><stop offset="0.296" stop-color="#2f31ff"/><stop offset="0.333" stop-color="#482bff"/><stop offset="0.370" stop-color="#6124ff"/><stop offset="0.407" stop-color="#7b1dff"/><stop offset="0.444" stop-color="#9416ff"/><stop offset="0.481" stop-color="#af0fff"/><stop offset="0.519" stop-color="#ca08ff"/><stop offset="0.556" stop-color="#e501ff"/><stop offset="0.593" stop-color="#ff00fd"/><stop offset="0.630" stop-color="#ff00e4"/><stop offset="0.667" stop-color="#ff00cf"/><stop offset="0.704" stop-color="#ff00be"/><stop offset="0.741" stop-color="#ff00ae"/><stop offset="0.778" stop-color="#ff00a1"/><stop offset="0.815" stop-color="#ff0096"/><stop offset="0.852" stop-color="#ff008c"/><stop offset="0.889" stop-color="#ff0083"/><stop offset="0.926" stop-color="#ff007b"/><stop offset="0.963" stop-color="#ff0073"/><stop offset="1.000" stop-color="#ff006d"/></linearGradient><linearGradient id="c103" gradientUnits="userSpaceOnUse" x1="1009.1" x2="1431.9" y1="0" y2="0"><stop offset="0.000" stop-color="#0060ff"/><stop offset="0.037" stop-color="#005aff"/><stop offset="0.074" stop-color="#0055ff"/><stop offset="0.111" stop-color="#004fff"/><stop offset="0.148" stop-color="#0049ff"/><stop offset="0.185" stop-color="#0043ff"/><stop offset="0.222" stop-color="#003cff"/><stop offset="0.259" stop-color="#1736ff"/><stop offset="0.296" stop-color="#2f30ff"/><stop offset="0.333" stop-color="#4729ff"/><stop offset="0.370" stop-color="#5f23ff"/><stop offset="0.407" stop-color="#781cff"/><stop offset="0.444" stop-color="#9215ff"/><stop offset="0.481" stop-color="#ac0eff"/><stop offset="0.519" stop-color="#c607ff"/><stop offset="0.556" stop-color="#e100ff"/><stop offset="0.593" stop-color="#fc00ff"/><stop offset="0.630" stop-color="#ff00e9"/><stop offset="0.667" stop-color="#ff00d3"/><stop offset="0.704" stop-color="#ff00c1"/><stop offset="0.741" stop-color="#ff00b2"/><stop offset="0.778" stop-color="#ff00a5"/><stop offset="0.815" stop-color="#ff0099"/><stop offset="0.852" stop-color="#ff008f"/><stop offset="0.889" stop-color="#ff0085"/><stop offset="0.926" stop-color="#ff007d"/><stop offset="0.963" stop-color="#ff0076"/><stop offset="1.000" stop-color="#ff006f"/></linearGradient><linearGradient id="c104" gradientUnits="userSpaceOnUse" x1="1010.2" x2="1430.0" y1="0" y2="0"><stop offset="0.000" stop-color="#005eff"/><stop offset="0.037" stop-color="#0058ff"/><stop offset="0.074" stop-color="#0053ff"/><stop offset="0.111" stop-color="#004dff"/><stop offset="0.148" stop-color="#0047ff"/><stop offset="0.185" stop-color="#0041ff"/><stop offset="0.222" stop-color="#003bff"/><stop offset="0.259" stop-color="#1735ff"/><stop offset="0.296" stop-color="#2e2eff"/><stop offset="0.333" stop-color="#4628ff"/><stop offset="0.370" stop-color="#5e21ff"/><stop offset="0.407" stop-color="#761bff"/><stop offset="0.444" stop-color="#8f14ff"/><stop offset="0.481" stop-color="#a90dff"/><stop offset="0.519" stop-color="#c206ff"/><stop offset="0.556" stop-color="#dd00ff"/><stop offset="0.593" stop-color="#f700ff"/><stop offset="0.630" stop-color="#ff00ed"/><stop offset="0.667" stop-color="#ff00d7"/><stop offset="0.704" stop-color="#ff00c5"/><stop offset="0.741" stop-color="#ff00b5"/><stop offset="0.778" stop-color="#ff00a8"/><stop offset="0.815" stop-color="#ff009c"/><stop offset="0.852" stop-color="#ff0091"/><stop offset="0.889" stop-color="#ff0088"/><stop offset="0.926" stop-color="#ff0080"/><stop offset="0.963" stop-color="#ff0078"/><stop offset="1.000" stop-color="#ff0072"/></linearGradient><linearGradient id="c105" gradientUnits="userSpaceOnUse" x1="1011.3" x2="1428.0" y1="0" y2="0"><stop offset="0.000" stop-color="#005cff"/><stop offset="0.037" stop-color="#0056ff"/><stop offset="0.074" stop-color="#0051ff"/><stop offset="0.111" stop-color="#004bff"/><stop offset="0.148" stop-color="#0045ff"/><stop offset="0.185" stop-color="#003fff"/><stop offset="0.222" stop-color="#0039ff"/><stop offset="0.259" stop-color="#1633ff"/><stop offset="0.296" stop-color="#2d2dff"/><stop offset="0.333" stop-color="#4527ff"/><stop offset="0.370" stop-color="#5c20ff"/><stop offset="0.407" stop-color="#741aff"/><stop offset="0.444" stop-color="#8d13ff"/><stop offset="0.481" stop-color="#a60dff"/><stop offset="0.519" stop-color="#bf06ff"/><stop offset="0.556" stop-color="#d900ff"/><stop offset="0.593" stop-color="#f300ff"/><stop offset="0.630" stop-color="#ff00f2"/><stop offset="0.667" stop-color="#ff00dc"/><stop offset="0.704" stop-color="#ff00c9"/><stop offset="0.741" stop-color="#ff00b9"/><stop offset="0.778" stop-color="#ff00ab"/><stop offset="0.815" stop-color="#ff009f"/><stop offset="0.852" stop-color="#ff0094"/><stop offset="0.889" stop-color="#ff008b"/><stop offset="0.926" stop-color="#ff0082"/><stop offset="0.963" stop-color="#ff007b"/><stop offset="1.000" stop-color="#ff0074"/></linearGradient><linearGradient id="c106" gradientUnits="userSpaceOnUse" x1="1012.4" x2="1426.1" y1="0" y2="0"><stop offset="0.000" stop-color="#005aff"/><stop offset="0.038" stop-color="#0054ff"/><stop offset="0.077" stop-color="#004eff"/><stop offset="0.115" stop-color="#0048ff"/><stop offset="0.154" stop-color="#0042ff"/><stop offset="0.192" stop-color="#003cff"/><stop offset="0.231" stop-color="#0536ff"/><stop offset="0.269" stop-color="#1c30ff"/><stop offset="0.308" stop-color="#342aff"/><stop offset="0.346" stop-color="#4c23ff"/><stop offset="0.385" stop-color="#641dff"/><stop offset="0.423" stop-color="#7d16ff"/><stop offset="0.462" stop-color="#960fff"/><stop offset="0.500" stop-color="#af08ff"/><stop offset="0.538" stop-color="#c901ff"/><stop offset="0.577" stop-color="#e300ff"/><stop offset="0.615" stop-color="#fe00ff"/><stop offset="0.654" stop-color="#ff00e7"/><stop offset="0.692" stop-color="#ff00d2"/><stop offset="0.731" stop-color="#ff00c1"/><stop offset="0.769" stop-color="#ff00b2"/><stop offset="0.808" stop-color="#ff00a4"/><stop offset="0.846" stop-color="#ff0099"/><stop offset="0.885" stop-color="#ff008f"/><stop offset="0.923" stop-color="#ff0086"/><stop offset="0.962" stop-color="#ff007e"/><stop offset="1.000" stop-color="#ff0076"/></linearGradient><linearGradient id="c107" gradientUnits="userSpaceOnUse" x1="1013.5" x2="1424.2" y1="0" y2="0"><stop offset="0.000" stop-color="#0058ff"/><stop offset="0.038" stop-color="#0052ff"/><stop offset="0.077" stop-color="#004cff"/><stop offset="0.115" stop-color="#0047ff"/><stop offset="0.154" stop-color="#0041ff"/><stop offset="0.192" stop-color="#003bff"/><stop offset="0.231" stop-color="#0535ff"/><stop offset="0.269" stop-color="#1c2fff"/><stop offset="0.308" stop-color="#3328ff"/><stop offset="0.346" stop-color="#4a22ff"/><stop offset="0.385" stop-color="#621cff"/><stop offset="0.423" stop-color="#7a15ff"/><stop offset="0.462" stop-color="#930eff"/><stop offset="0.500" stop-color="#ac08ff"/><stop offset="0.538" stop-color="#c501ff"/><stop offset="0.577" stop-color="#df00ff"/><stop offset="0.615" stop-color="#fa00ff"/><stop offset="0.654" stop-color="#ff00eb"/><stop offset="0.692" stop-color="#ff00d6"/><stop offset="0.731" stop-color="#ff00c4"/><stop offset="0.769" stop-color="#ff00b5"/><stop offset="0.808" stop-color="#ff00a8"/><stop offset="0.846" stop-color="#ff009c"/><stop offset="0.885" stop-color="#ff0092"/><stop offset="0.923" stop-color="#ff0088"/><stop offset="0.962" stop-color="#ff0080"/><stop offset="1.000" stop-color="#ff0079"/></linearGradient><linearGradient id="c108" gradientUnits="userSpaceOnUse" x1="1014.6" x2="1422.2" y1="0" y2="0"><stop offset="0.000" stop-color="#0056ff"/><stop offset="0.038" stop-color="#0050ff"/><stop offset="0.077" stop-color="#004bff"/><stop offset="0.115" stop-color="#0045ff"/><stop offset="0.154" stop-color="#003fff"/><stop offset="0.192" stop-color="#0039ff"/><stop offset="0.231" stop-color="#0533ff"/><stop offset="0.269" stop-color="#1c2dff"/><stop offset="0.308" stop-color="#3227ff"/><stop offset="0.346" stop-color="#4921ff"/><stop offset="0.385" stop-color="#611aff"/><stop offset="0.423" stop-color="#7814ff"/><stop offset="0.462" stop-color="#910eff"/><stop offset="0.500" stop-color="#a907ff"/><stop offset="0.538" stop-color="#c200ff"/><stop offset="0.577" stop-color="#db00ff"/><stop offset="0.615" stop-color="#f500ff"/><stop offset="0.654" stop-color="#ff00f0"/><stop offset="0.692" stop-color="#ff00da"/><stop offset="0.731" stop-color="#ff00c8"/><stop offset="0.769" stop-color="#ff00b9"/><stop offset="0.808" stop-color="#ff00ab"/><stop offset="0.846" stop-color="#ff009f"/><stop offset="0.885" stop-color="#ff0095"/><stop offset="0.923" stop-color="#ff008b"/><stop offset="0.962" stop-color="#ff0083"/><stop offset="1.000" stop-color="#ff007b"/></linearGradient><linearGradient id="c109" gradientUnits="userSpaceOnUse" x1="1015.7" x2="1420.3" y1="0" y2="0"><stop offset="0.000" stop-color="#0054ff"/><stop offset="0.038" stop-color="#004eff"/><stop offset="0.077" stop-color="#0049ff"/><stop offset="0.115" stop-color="#0043ff"/><stop offset="0.154" stop-color="#003dff"/><stop offset="0.192" stop-color="#0038ff"/><stop offset="0.231" stop-color="#0532ff"/><stop offset="0.269" stop-color="#1b2cff"/><stop offset="0.308" stop-color="#3126ff"/><stop offset="0.346" stop-color="#4820ff"/><stop offset="0.385" stop-color="#5f19ff"/><stop offset="0.423" stop-color="#7613ff"/><stop offset="0.462" stop-color="#8e0dff"/><stop offset="0.500" stop-color="#a606ff"/><stop offset="0.538" stop-color="#bf00ff"/><stop offset="0.577" stop-color="#d700ff"/><stop offset="0.615" stop-color="#f100ff"/><stop offset="0.654" stop-color="#ff00f4"/><stop offset="0.692" stop-color="#ff00de"/><stop offset="0.731" stop-color="#ff00cc"/><stop offset="0.769" stop-color="#ff00bc"/><stop offset="0.808" stop-color="#ff00ae"/><stop offset="0.846" stop-color="#ff00a2"/><stop offset="0.885" stop-color="#ff0098"/><stop offset="0.923" stop-color="#ff008e"/><stop offset="0.962" stop-color="#ff0085"/><stop offset="1.000" stop-color="#ff007e"/></linearGradient><linearGradient id="c110" gradientUnits="userSpaceOnUse" x1="1016.8" x2="1418.4" y1="0" y2="0"><stop offset="0.000" stop-color="#0052ff"/><stop offset="0.038" stop-color="#004cff"/><stop offset="0.077" stop-color="#0047ff"/><stop offset="0.115" stop-color="#0041ff"/><stop offset="0.154" stop-color="#003cff"/><stop offset="0.192" stop-color="#0036ff"/><stop offset="0.231" stop-color="#0530ff"/><stop offset="0.269" stop-color="#1b2aff"/><stop offset="0.308" stop-color="#3125ff"/><stop offset="0.346" stop-color="#471eff"/><stop offset="0.385" stop-color="#5e18ff"/><stop offset="0.423" stop-color="#7412ff"/><stop offset="0.462" stop-color="#8c0cff"/><stop offset="0.500" stop-color="#a305ff"/><stop offset="0.538" stop-color="#bb00ff"/><stop offset="0.577" stop-color="#d400ff"/><stop offset="0.615" stop-color="#ec00ff"/><stop offset="0.654" stop-color="#ff00f9"/><stop offset="0.692" stop-color="#ff00e3"/><stop offset="0.731" stop-color="#ff00d0"/><stop offset="0.769" stop-color="#ff00c0"/><stop offset="0.808" stop-color="#ff00b2"/><stop offset="0.846" stop-color="#ff00a5"/><stop offset="0.885" stop-color="#ff009b"/><stop offset="0.923" stop-color="#ff0091"/><stop offset="0.962" stop-color="#ff0088"/><stop offset="1.000" stop-color="#ff0080"/></linearGradient><linearGradient id="c111" gradientUnits="userSpaceOnUse" x1="1017.9" x2="1416.4" y1="0" y2="0"><stop offset="0.000" stop-color="#0050ff"/><stop offset="0.040" stop-color="#004aff"/><stop offset="0.080" stop-color="#0045ff"/><stop offset="0.120" stop-color="#003fff"/><stop offset="0.160" stop-color="#0039ff"/><stop offset="0.200" stop-color="#0033ff"/><stop offset="0.240" stop-color="#0a2eff"/><stop offset="0.280" stop-color="#2128ff"/><stop offset="0.320" stop-color="#3721ff"/><stop offset="0.360" stop-color="#4e1bff"/><stop offset="0.400" stop-color="#6515ff"/><stop offset="0.440" stop-color="#7c0fff"/><stop offset="0.480" stop-color="#9408ff"/><stop offset="0.520" stop-color="#ad01ff"/><stop offset="0.560" stop-color="#c500ff"/><stop offset="0.600" stop-color="#de00ff"/><stop offset="0.640" stop-color="#f800ff"/><stop offset="0.680" stop-color="#ff00ee"/><stop offset="0.720" stop-color="#ff00d9"/><stop offset="0.760" stop-color="#ff00c7"/><stop offset="0.800" stop-color="#ff00b8"/><stop offset="0.840" stop-color="#ff00aa"/><stop offset="0.880" stop-color="#ff009f"/><stop offset="0.920" stop-color="#ff0094"/><stop offset="0.960" stop-color="#ff008b"/><stop offset="1.000" stop-color="#ff0083"/></linearGradient><linearGradient id="c112" gradientUnits="userSpaceOnUse" x1="1019.0" x2="1414.5" y1="0" y2="0"><stop offset="0.000" stop-color="#004eff"/><stop offset="0.040" stop-color="#0049ff"/><stop offset="0.080" stop-color="#0043ff"/><stop offset="0.120" stop-color="#003dff"/><stop offset="0.160" stop-color="#0038ff"/><stop offset="0.200" stop-color="#0032ff"/><stop offset="0.240" stop-color="#0a2cff"/><stop offset="0.280" stop-color="#2026ff"/><stop offset="0.320" stop-color="#3620ff"/><stop offset="0.360" stop-color="#4d1aff"/><stop offset="0.400" stop-color="#6314ff"/><stop offset="0.440" stop-color="#7a0eff"/><stop offset="0.480" stop-color="#9207ff"/><stop offset="0.520" stop-color="#aa01ff"/><stop offset="0.560" stop-color="#c200ff"/><stop offset="0.600" stop-color="#da00ff"/><stop offset="0.640" stop-color="#f300ff"/><stop offset="0.680" stop-color="#ff00f2"/><stop offset="0.720" stop-color="#ff00dd"/><stop offset="0.760" stop-color="#ff00cb"/><stop offset="0.800" stop-color="#ff00bb"/><stop offset="0.840" stop-color="#ff00ae"/><stop offset="0.880" stop-color="#ff00a2"/><stop offset="0.920" stop-color="#ff0097"/><stop offset="0.960" stop-color="#ff008e"/><stop offset="1.000" stop-color="#ff0086"/></linearGradient><linearGradient id="c113" gradientUnits="userSpaceOnUse" x1="1020.1" x2="1412.5" y1="0" y2="0"><stop offset="0.000" stop-color="#004cff"/><stop offset="0.040" stop-color="#0047ff"/><stop offset="0.080" stop-color="#0041ff"/><stop offset="0.120" stop-color="#003cff"/><stop offset="0.160" stop-color="#0036ff"/><stop offset="0.200" stop-color="#0031ff"/><stop offset="0.240" stop-color="#0a2bff"/><stop offset="0.280" stop-color="#2025ff"/><stop offset="0.320" stop-color="#351fff"/><stop offset="0.360" stop-color="#4b19ff"/><stop offset="0.400" stop-color="#6213ff"/><stop offset="0.440" stop-color="#780dff"/><stop offset="0.480" stop-color="#8f07ff"/><stop offset="0.520" stop-color="#a700ff"/><stop offset="0.560" stop-color="#be00ff"/><stop offset="0.600" stop-color="#d600ff"/><stop offset="0.640" stop-color="#ef00ff"/><stop offset="0.680" stop-color="#ff00f7"/><stop offset="0.720" stop-color="#ff00e1"/><stop offset="0.760" stop-color="#ff00cf"/><stop offset="0.800" stop-color="#ff00bf"/><stop offset="0.840" stop-color="#ff00b1"/><stop offset="0.880" stop-color="#ff00a5"/><stop offset="0.920" stop-color="#ff009a"/><stop offset="0.960" stop-color="#ff0091"/><stop offset="1.000" stop-color="#ff0088"/></linearGradient><linearGradient id="c114" gradientUnits="userSpaceOnUse" x1="1021.2" x2="1410.6" y1="0" y2="0"><stop offset="0.000" stop-color="#004aff"/><stop offset="0.040" stop-color="#0045ff"/><stop offset="0.080" stop-color="#0040ff"/><stop offset="0.120" stop-color="#003aff"/><stop offset="0.160" stop-color="#0035ff"/><stop offset="0.200" stop-color="#002fff"/><stop offset="0.240" stop-color="#0a2aff"/><stop offset="0.280" stop-color="#1f24ff"/><stop offset="0.320" stop-color="#351eff"/><stop offset="0.360" stop-color="#4a18ff"/><stop offset="0.400" stop-color="#6012ff"/><stop offset="0.440" stop-color="#760cff"/><stop offset="0.480" stop-color="#8d06ff"/><stop offset="0.520" stop-color="#a400ff"/><stop offset="0.560" stop-color="#bb00ff"/><stop offset="0.600" stop-color="#d300ff"/><stop offset="0.640" stop-color="#eb00ff"/><stop offset="0.680" stop-color="#ff00fb"/><stop offset="0.720" stop-color="#ff00e5"/><stop offset="0.760" stop-color="#ff00d3"/><stop offset="0.800" stop-color="#ff00c3"/><stop offset="0.840" stop-color="#ff00b5"/><stop offset="0.880" stop-color="#ff00a8"/><stop offset="0.920" stop-color="#ff009d"/><stop offset="0.960" stop-color="#ff0094"/><stop offset="1.000" stop-color="#ff008b"/></linearGradient><linearGradient id="c115" gradientUnits="userSpaceOnUse" x1="1022.3" x2="1408.7" y1="0" y2="0"><stop offset="0.000" stop-color="#0049ff"/><stop offset="0.040" stop-color="#0043ff"/><stop offset="0.080" stop-color="#003eff"/><stop offset="0.120" stop-color="#0039ff"/><stop offset="0.160" stop-color="#0033ff"/><stop offset="0.200" stop-color="#002eff"/><stop offset="0.240" stop-color="#0a28ff"/><stop offset="0.280" stop-color="#1f23ff"/><stop offset="0.320" stop-color="#341dff"/><stop offset="0.360" stop-color="#4917ff"/><stop offset="0.400" stop-color="#5f11ff"/><stop offset="0.440" stop-color="#740bff"/><stop offset="0.480" stop-color="#8b05ff"/><stop offset="0.520" stop-color="#a100ff"/><stop offset="0.560" stop-color="#b800ff"/><stop offset="0.600" stop-color="#cf00ff"/><stop offset="0.640" stop-color="#e600ff"/><stop offset="0.680" stop-color="#fe00ff"/><stop offset="0.720" stop-color="#ff00e9"/><stop offset="0.760" stop-color="#ff00d7"/><stop offset="0.800" stop-color="#ff00c6"/><stop offset="0.840" stop-color="#ff00b8"/><stop offset="0.880" stop-color="#ff00ab"/><stop offset="0.920" stop-color="#ff00a0"/><stop offset="0.960" stop-color="#ff0097"/><stop offset="1.000" stop-color="#ff008e"/></linearGradient><linearGradient id="c116" gradientUnits="userSpaceOnUse" x1="1023.4" x2="1406.7" y1="0" y2="0"><stop offset="0.000" stop-color="#0047ff"/><stop offset="0.042" stop-color="#0042ff"/><stop offset="0.083" stop-color="#003cff"/><stop offset="0.125" stop-color="#0037ff"/><stop offset="0.167" stop-color="#0031ff"/><stop offset="0.208" stop-color="#002bff"/><stop offset="0.250" stop-color="#0f26ff"/><stop offset="0.292" stop-color="#2520ff"/><stop offset="0.333" stop-color="#3a1aff"/><stop offset="0.375" stop-color="#5014ff"/><stop offset="0.417" stop-color="#660eff"/><stop offset="0.458" stop-color="#7c08ff"/><stop offset="0.500" stop-color="#9301ff"/><stop offset="0.542" stop-color="#aa00ff"/><stop offset="0.583" stop-color="#c200ff"/><stop offset="0.625" stop-color="#da00ff"/><stop offset="0.667" stop-color="#f200ff"/><stop offset="0.708" stop-color="#ff00f4"/><stop offset="0.750" stop-color="#ff00df"/><stop offset="0.792" stop-color="#ff00cd"/><stop offset="0.833" stop-color="#ff00be"/><stop offset="0.875" stop-color="#ff00b0"/><stop offset="0.917" stop-color="#ff00a4"/><stop offset="0.958" stop-color="#ff009a"/><stop offset="1.000" stop-color="#ff0090"/></linearGradient><linearGradient id="c117" gradientUnits="userSpaceOnUse" x1="1024.5" x2="1404.8" y1="0" y2="0"><stop offset="0.000" stop-color="#0045ff"/><stop offset="0.042" stop-color="#0040ff"/><stop offset="0.083" stop-color="#003bff"/><stop offset="0.125" stop-color="#0035ff"/><stop offset="0.167" stop-color="#0030ff"/><stop offset="0.208" stop-color="#002aff"/><stop offset="0.250" stop-color="#0f24ff"/><stop offset="0.292" stop-color="#241fff"/><stop offset="0.333" stop-color="#3919ff"/><stop offset="0.375" stop-color="#4f13ff"/><stop offset="0.417" stop-color="#640dff"/><stop offset="0.458" stop-color="#7a07ff"/><stop offset="0.500" stop-color="#9101ff"/><stop offset="0.542" stop-color="#a700ff"/><stop offset="0.583" stop-color="#bf00ff"/><stop offset="0.625" stop-color="#d600ff"/><stop offset="0.667" stop-color="#ee00ff"/><stop offset="0.708" stop-color="#ff00f8"/><stop offset="0.750" stop-color="#ff00e3"/><stop offset="0.792" stop-color="#ff00d1"/><stop offset="0.833" stop-color="#ff00c1"/><stop offset="0.875" stop-color="#ff00b4"/><stop offset="0.917" stop-color="#ff00a8"/><stop offset="0.958" stop-color="#ff009d"/><stop offset="1.000" stop-color="#ff0093"/></linearGradient><linearGradient id="c118" gradientUnits="userSpaceOnUse" x1="1025.6" x2="1402.9" y1="0" y2="0"><stop offset="0.000" stop-color="#0043ff"/><stop offset="0.042" stop-color="#003eff"/><stop offset="0.083" stop-color="#0039ff"/><stop offset="0.125" stop-color="#0034ff"/><stop offset="0.167" stop-color="#002eff"/><stop offset="0.208" stop-color="#0029ff"/><stop offset="0.250" stop-color="#0f23ff"/><stop offset="0.292" stop-color="#241eff"/><stop offset="0.333" stop-color="#3818ff"/><stop offset="0.375" stop-color="#4d12ff"/><stop offset="0.417" stop-color="#630cff"/><stop offset="0.458" stop-color="#7806ff"/><stop offset="0.500" stop-color="#8e00ff"/><stop offset="0.542" stop-color="#a500ff"/><stop offset="0.583" stop-color="#bb00ff"/><stop offset="0.625" stop-color="#d200ff"/><stop offset="0.667" stop-color="#e900ff"/><stop offset="0.708" stop-color="#ff00fd"/><stop offset="0.750" stop-color="#ff00e7"/><stop offset="0.792" stop-color="#ff00d5"/><stop offset="0.833" stop-color="#ff00c5"/><stop offset="0.875" stop-color="#ff00b7"/><stop offset="0.917" stop-color="#ff00ab"/><stop offset="0.958" stop-color="#ff00a0"/><stop offset="1.000" stop-color="#ff0096"/></linearGradient><linearGradient id="c119" gradientUnits="userSpaceOnUse" x1="1026.8" x2="1400.9" y1="0" y2="0"><stop offset="0.000" stop-color="#0042ff"/><stop offset="0.042" stop-color="#003dff"/><stop offset="0.083" stop-color="#0038ff"/><stop offset="0.125" stop-color="#0032ff"/><stop offset="0.167" stop-color="#002dff"/><stop offset="0.208" stop-color="#0028ff"/><stop offset="0.250" stop-color="#0f22ff"/><stop offset="0.292" stop-color="#231dff"/><stop offset="0.333" stop-color="#3817ff"/><stop offset="0.375" stop-color="#4c11ff"/><stop offset="0.417" stop-color="#610bff"/><stop offset="0.458" stop-color="#7606ff"/><stop offset="0.500" stop-color="#8c00ff"/><stop offset="0.542" stop-color="#a200ff"/><stop offset="0.583" stop-color="#b800ff"/><stop offset="0.625" stop-color="#ce00ff"/><stop offset="0.667" stop-color="#e500ff"/><stop offset="0.708" stop-color="#fc00ff"/><stop offset="0.750" stop-color="#ff00ec"/><stop offset="0.792" stop-color="#ff00d9"/><stop offset="0.833" stop-color="#ff00c9"/><stop offset="0.875" stop-color="#ff00bb"/><stop offset="0.917" stop-color="#ff00ae"/><stop offset="0.958" stop-color="#ff00a3"/><stop offset="1.000" stop-color="#ff0099"/></linearGradient><linearGradient id="c120" gradientUnits="userSpaceOnUse" x1="1027.9" x2="1399.0" y1="0" y2="0"><stop offset="0.000" stop-color="#0040ff"/><stop offset="0.042" stop-color="#003bff"/><stop offset="0.083" stop-color="#0036ff"/><stop offset="0.125" stop-color="#0031ff"/><stop offset="0.167" stop-color="#002cff"/><stop offset="0.208" stop-color="#0026ff"/><stop offset="0.250" stop-color="#0f21ff"/><stop offset="0.292" stop-color="#231bff"/><stop offset="0.333" stop-color="#3716ff"/><stop offset="0.375" stop-color="#4b10ff"/><stop offset="0.417" stop-color="#600bff"/><stop offset="0.458" stop-color="#7405ff"/><stop offset="0.500" stop-color="#8a00ff"/><stop offset="0.542" stop-color="#9f00ff"/><stop offset="0.583" stop-color="#b500ff"/><stop offset="0.625" stop-color="#cb00ff"/><stop offset="0.667" stop-color="#e100ff"/><stop offset="0.708" stop-color="#f800ff"/><stop offset="0.750" stop-color="#ff00f0"/><stop offset="0.792" stop-color="#ff00dd"/><stop offset="0.833" stop-color="#ff00cc"/><stop offset="0.875" stop-color="#ff00be"/><stop offset="0.917" stop-color="#ff00b1"/><stop offset="0.958" stop-color="#ff00a6"/><stop offset="1.000" stop-color="#ff009c"/></linearGradient><linearGradient id="c121" gradientUnits="userSpaceOnUse" x1="1029.0" x2="1397.0" y1="0" y2="0"><stop offset="0.000" stop-color="#003fff"/><stop offset="0.042" stop-color="#003aff"/><stop offset="0.083" stop-color="#0035ff"/><stop offset="0.125" stop-color="#002fff"/><stop offset="0.167" stop-color="#002aff"/><stop offset="0.208" stop-color="#0025ff"/><stop offset="0.250" stop-color="#0f20ff"/><stop offset="0.292" stop-color="#221aff"/><stop offset="0.333" stop-color="#3615ff"/><stop offset="0.375" stop-color="#4a0fff"/><stop offset="0.417" stop-color="#5e0aff"/><stop offset="0.458" stop-color="#7304ff"/><stop offset="0.500" stop-color="#8700ff"/><stop offset="0.542" stop-color="#9c00ff"/><stop offset="0.583" stop-color="#b200ff"/><stop offset="0.625" stop-color="#c700ff"/><stop offset="0.667" stop-color="#dd00ff"/><stop offset="0.708" stop-color="#f400ff"/><stop offset="0.750" stop-color="#ff00f4"/><stop offset="0.792" stop-color="#ff00e1"/><stop offset="0.833" stop-color="#ff00d0"/><stop offset="0.875" stop-color="#ff00c2"/><stop offset="0.917" stop-color="#ff00b5"/><stop offset="0.958" stop-color="#ff00a9"/><stop offset="1.000" stop-color="#ff009f"/></linearGradient><linearGradient id="c122" gradientUnits="userSpaceOnUse" x1="1030.1" x2="1395.1" y1="0" y2="0"><stop offset="0.000" stop-color="#003dff"/><stop offset="0.043" stop-color="#0038ff"/><stop offset="0.087" stop-color="#0033ff"/><stop offset="0.130" stop-color="#002dff"/><stop offset="0.174" stop-color="#0028ff"/><stop offset="0.217" stop-color="#0023ff"/><stop offset="0.261" stop-color="#141dff"/><stop offset="0.304" stop-color="#2818ff"/><stop offset="0.348" stop-color="#3c12ff"/><stop offset="0.391" stop-color="#500cff"/><stop offset="0.435" stop-color="#6507ff"/><stop offset="0.478" stop-color="#7a01ff"/><stop offset="0.522" stop-color="#9000ff"/><stop offset="0.565" stop-color="#a600ff"/><stop offset="0.609" stop-color="#bc00ff"/><stop offset="0.652" stop-color="#d200ff"/><stop offset="0.696" stop-color="#e900ff"/><stop offset="0.739" stop-color="#ff00fe"/><stop offset="0.783" stop-color="#ff00e9"/><stop offset="0.826" stop-color="#ff00d7"/><stop offset="0.870" stop-color="#ff00c7"/><stop offset="0.913" stop-color="#ff00b9"/><stop offset="0.957" stop-color="#ff00ad"/><stop offset="1.000" stop-color="#ff00a2"/></linearGradient><linearGradient id="c123" gradientUnits="userSpaceOnUse" x1="1031.3" x2="1393.2" y1="0" y2="0"><stop offset="0.000" stop-color="#003bff"/><stop offset="0.043" stop-color="#0036ff"/><stop offset="0.087" stop-color="#0031ff"/><stop offset="0.130" stop-color="#002cff"/><stop offset="0.174" stop-color="#0027ff"/><stop offset="0.217" stop-color="#0022ff"/><stop offset="0.261" stop-color="#141cff"/><stop offset="0.304" stop-color="#2717ff"/><stop offset="0.348" stop-color="#3b11ff"/><stop offset="0.391" stop-color="#4f0cff"/><stop offset="0.435" stop-color="#6406ff"/><stop offset="0.478" stop-color="#7800ff"/><stop offset="0.522" stop-color="#8e00ff"/><stop offset="0.565" stop-color="#a300ff"/><stop offset="0.609" stop-color="#b800ff"/><stop offset="0.652" stop-color="#ce00ff"/><stop offset="0.696" stop-color="#e500ff"/><stop offset="0.739" stop-color="#fb00ff"/><stop offset="0.783" stop-color="#ff00ed"/><stop offset="0.826" stop-color="#ff00db"/><stop offset="0.870" stop-color="#ff00cb"/><stop offset="0.913" stop-color="#ff00bd"/><stop offset="0.957" stop-color="#ff00b0"/><stop offset="1.000" stop-color="#ff00a5"/></linearGradient><linearGradient id="c124" gradientUnits="userSpaceOnUse" x1="1032.6" x2="1391.2" y1="0" y2="0"><stop offset="0.000" stop-color="#003aff"/><stop offset="0.043" stop-color="#0035ff"/><stop offset="0.087" stop-color="#0030ff"/><stop offset="0.130" stop-color="#002bff"/><stop offset="0.174" stop-color="#0026ff"/><stop offset="0.217" stop-color="#0020ff"/><stop offset="0.261" stop-color="#141bff"/><stop offset="0.304" stop-color="#2716ff"/><stop offset="0.348" stop-color="#3a10ff"/><stop offset="0.391" stop-color="#4e0bff"/><stop offset="0.435" stop-color="#6205ff"/><stop offset="0.478" stop-color="#7700ff"/><stop offset="0.522" stop-color="#8b00ff"/><stop offset="0.565" stop-color="#a000ff"/><stop offset="0.609" stop-color="#b500ff"/><stop offset="0.652" stop-color="#cb00ff"/><stop offset="0.696" stop-color="#e100ff"/><stop offset="0.739" stop-color="#f700ff"/><stop offset="0.783" stop-color="#ff00f2"/><stop offset="0.826" stop-color="#ff00df"/><stop offset="0.870" stop-color="#ff00cf"/><stop offset="0.913" stop-color="#ff00c0"/><stop offset="0.957" stop-color="#ff00b4"/><stop offset="1.000" stop-color="#ff00a8"/></linearGradient><linearGradient id="c125" gradientUnits="userSpaceOnUse" x1="1033.8" x2="1389.3" y1="0" y2="0"><stop offset="0.000" stop-color="#0038ff"/><stop offset="0.043" stop-color="#0033ff"/><stop offset="0.087" stop-color="#002eff"/><stop offset="0.130" stop-color="#0029ff"/><stop offset="0.174" stop-color="#0024ff"/><stop offset="0.217" stop-color="#011fff"/><stop offset="0.261" stop-color="#131aff"/><stop offset="0.304" stop-color="#2615ff"/><stop offset="0.348" stop-color="#3a0fff"/><stop offset="0.391" stop-color="#4d0aff"/><stop offset="0.435" stop-color="#6105ff"/><stop offset="0.478" stop-color="#7500ff"/><stop offset="0.522" stop-color="#8900ff"/><stop offset="0.565" stop-color="#9e00ff"/><stop offset="0.609" stop-color="#b200ff"/><stop offset="0.652" stop-color="#c700ff"/><stop offset="0.696" stop-color="#dd00ff"/><stop offset="0.739" stop-color="#f200ff"/><stop offset="0.783" stop-color="#ff00f6"/><stop offset="0.826" stop-color="#ff00e3"/><stop offset="0.870" stop-color="#ff00d2"/><stop offset="0.913" stop-color="#ff00c4"/><stop offset="0.957" stop-color="#ff00b7"/><stop offset="1.000" stop-color="#ff00ac"/></linearGradient><linearGradient id="c126" gradientUnits="userSpaceOnUse" x1="1035.1" x2="1387.4" y1="0" y2="0"><stop offset="0.000" stop-color="#0037ff"/><stop offset="0.043" stop-color="#0032ff"/><stop offset="0.087" stop-color="#002dff"/><stop offset="0.130" stop-color="#0028ff"/><stop offset="0.174" stop-color="#0023ff"/><stop offset="0.217" stop-color="#011eff"/><stop offset="0.261" stop-color="#1319ff"/><stop offset="0.304" stop-color="#2614ff"/><stop offset="0.348" stop-color="#390fff"/><stop offset="0.391" stop-color="#4c09ff"/><stop offset="0.435" stop-color="#5f04ff"/><stop offset="0.478" stop-color="#7300ff"/><stop offset="0.522" stop-color="#8700ff"/><stop offset="0.565" stop-color="#9b00ff"/><stop offset="0.609" stop-color="#af00ff"/><stop offset="0.652" stop-color="#c400ff"/><stop offset="0.696" stop-color="#d900ff"/><stop offset="0.739" stop-color="#ee00ff"/><stop offset="0.783" stop-color="#ff00fa"/><stop offset="0.826" stop-color="#ff00e7"/><stop offset="0.870" stop-color="#ff00d6"/><stop offset="0.913" stop-color="#ff00c8"/><stop offset="0.957" stop-color="#ff00bb"/><stop offset="1.000" stop-color="#ff00af"/></linearGradient><linearGradient id="c127" gradientUnits="userSpaceOnUse" x1="1036.3" x2="1385.4" y1="0" y2="0"><stop offset="0.000" stop-color="#0035ff"/><stop offset="0.045" stop-color="#0030ff"/><stop offset="0.091" stop-color="#002bff"/><stop offset="0.136" stop-color="#0026ff"/><stop offset="0.182" stop-color="#0021ff"/><stop offset="0.227" stop-color="#051cff"/><stop offset="0.273" stop-color="#1817ff"/><stop offset="0.318" stop-color="#2c11ff"/><stop offset="0.364" stop-color="#3f0cff"/><stop offset="0.409" stop-color="#5306ff"/><stop offset="0.455" stop-color="#6701ff"/><stop offset="0.500" stop-color="#7b00ff"/><stop offset="0.545" stop-color="#8f00ff"/><stop offset="0.591" stop-color="#a400ff"/><stop offset="0.636" stop-color="#b900ff"/><stop offset="0.682" stop-color="#cf00ff"/><stop offset="0.727" stop-color="#e400ff"/><stop offset="0.773" stop-color="#fa00ff"/><stop offset="0.818" stop-color="#ff00ef"/><stop offset="0.864" stop-color="#ff00dc"/><stop offset="0.909" stop-color="#ff00cd"/><stop offset="0.955" stop-color="#ff00bf"/><stop offset="1.000" stop-color="#ff00b2"/></linearGradient><linearGradient id="c128" gradientUnits="userSpaceOnUse" x1="1037.5" x2="1383.5" y1="0" y2="0"><stop offset="0.000" stop-color="#0034ff"/><stop offset="0.045" stop-color="#002fff"/><stop offset="0.091" stop-color="#002aff"/><stop offset="0.136" stop-color="#0025ff"/><stop offset="0.182" stop-color="#0020ff"/><stop offset="0.227" stop-color="#061bff"/><stop offset="0.273" stop-color="#1816ff"/><stop offset="0.318" stop-color="#2b10ff"/><stop offset="0.364" stop-color="#3e0bff"/><stop offset="0.409" stop-color="#5106ff"/><stop offset="0.455" stop-color="#6500ff"/><stop offset="0.500" stop-color="#7900ff"/><stop offset="0.545" stop-color="#8d00ff"/><stop offset="0.591" stop-color="#a100ff"/><stop offset="0.636" stop-color="#b600ff"/><stop offset="0.682" stop-color="#cb00ff"/><stop offset="0.727" stop-color="#e000ff"/><stop offset="0.773" stop-color="#f600ff"/><stop offset="0.818" stop-color="#ff00f3"/><stop offset="0.864" stop-color="#ff00e0"/><stop offset="0.909" stop-color="#ff00d0"/><stop offset="0.955" stop-color="#ff00c2"/><stop offset="1.000" stop-color="#ff00b6"/></linearGradient><linearGradient id="c129" gradientUnits="userSpaceOnUse" x1="1038.8" x2="1381.5" y1="0" y2="0"><stop offset="0.000" stop-color="#0032ff"/><stop offset="0.045" stop-color="#002eff"/><stop offset="0.091" stop-color="#0029ff"/><stop offset="0.136" stop-color="#0024ff"/><stop offset="0.182" stop-color="#001fff"/><stop offset="0.227" stop-color="#061aff"/><stop offset="0.273" stop-color="#1815ff"/><stop offset="0.318" stop-color="#2b10ff"/><stop offset="0.364" stop-color="#3d0aff"/><stop offset="0.409" stop-color="#5005ff"/><stop offset="0.455" stop-color="#6400ff"/><stop offset="0.500" stop-color="#7700ff"/><stop offset="0.545" stop-color="#8b00ff"/><stop offset="0.591" stop-color="#9f00ff"/><stop offset="0.636" stop-color="#b300ff"/><stop offset="0.682" stop-color="#c800ff"/><stop offset="0.727" stop-color="#dc00ff"/><stop offset="0.773" stop-color="#f200ff"/><stop offset="0.818" stop-color="#ff00f7"/><stop offset="0.864" stop-color="#ff00e5"/><stop offset="0.909" stop-color="#ff00d4"/><stop offset="0.955" stop-color="#ff00c6"/><stop offset="1.000" stop-color="#ff00b9"/></linearGradient><linearGradient id="c130" gradientUnits="userSpaceOnUse" x1="1040.0" x2="1379.6" y1="0" y2="0"><stop offset="0.000" stop-color="#0031ff"/><stop offset="0.045" stop-color="#002cff"/><stop offset="0.091" stop-color="#0027ff"/><stop offset="0.136" stop-color="#0023ff"/><stop offset="0.182" stop-color="#001eff"/><stop offset="0.227" stop-color="#0619ff"/><stop offset="0.273" stop-color="#1814ff"/><stop offset="0.318" stop-color="#2a0fff"/><stop offset="0.364" stop-color="#3d09ff"/><stop offset="0.409" stop-color="#4f04ff"/><stop offset="0.455" stop-color="#6200ff"/><stop offset="0.500" stop-color="#7500ff"/><stop offset="0.545" stop-color="#8900ff"/><stop offset="0.591" stop-color="#9c00ff"/><stop offset="0.636" stop-color="#b000ff"/><stop offset="0.682" stop-color="#c400ff"/><stop offset="0.727" stop-color="#d900ff"/><stop offset="0.773" stop-color="#ed00ff"/><stop offset="0.818" stop-color="#ff00fc"/><stop offset="0.864" stop-color="#ff00e9"/><stop offset="0.909" stop-color="#ff00d8"/><stop offset="0.955" stop-color="#ff00c9"/><stop offset="1.000" stop-color="#ff00bd"/></linearGradient><linearGradient id="c131" gradientUnits="userSpaceOnUse" x1="1041.3" x2="1377.7" y1="0" y2="0"><stop offset="0.000" stop-color="#0030ff"/><stop offset="0.045" stop-color="#002bff"/><stop offset="0.091" stop-color="#0026ff"/><stop offset="0.136" stop-color="#0021ff"/><stop offset="0.182" stop-color="#001dff"/><stop offset="0.227" stop-color="#0618ff"/><stop offset="0.273" stop-color="#1813ff"/><stop offset="0.318" stop-color="#2a0eff"/><stop offset="0.364" stop-color="#3c09ff"/><stop offset="0.409" stop-color="#4e04ff"/><stop offset="0.455" stop-color="#6100ff"/><stop offset="0.500" stop-color="#7300ff"/><stop offset="0.545" stop-color="#8600ff"/><stop offset="0.591" stop-color="#9a00ff"/><stop offset="0.636" stop-color="#ad00ff"/><stop offset="0.682" stop-color="#c100ff"/><stop offset="0.727" stop-color="#d500ff"/><stop offset="0.773" stop-color="#e900ff"/><stop offset="0.818" stop-color="#fe00ff"/><stop offset="0.864" stop-color="#ff00ed"/><stop offset="0.909" stop-color="#ff00dc"/><stop offset="0.955" stop-color="#ff00cd"/><stop offset="1.000" stop-color="#ff00c0"/></linearGradient><linearGradient id="c132" gradientUnits="userSpaceOnUse" x1="1042.5" x2="1375.7" y1="0" y2="0"><stop offset="0.000" stop-color="#002eff"/><stop offset="0.048" stop-color="#0029ff"/><stop offset="0.095" stop-color="#0025ff"/><stop offset="0.143" stop-color="#0020ff"/><stop offset="0.190" stop-color="#001bff"/><stop offset="0.238" stop-color="#0a16ff"/><stop offset="0.286" stop-color="#1d10ff"/><stop offset="0.333" stop-color="#2f0bff"/><stop offset="0.381" stop-color="#4206ff"/><stop offset="0.429" stop-color="#5501ff"/><stop offset="0.476" stop-color="#6800ff"/><stop offset="0.524" stop-color="#7b00ff"/><stop offset="0.571" stop-color="#8f00ff"/><stop offset="0.619" stop-color="#a300ff"/><stop offset="0.667" stop-color="#b700ff"/><stop offset="0.714" stop-color="#cc00ff"/><stop offset="0.762" stop-color="#e000ff"/><stop offset="0.810" stop-color="#f500ff"/><stop offset="0.857" stop-color="#ff00f4"/><stop offset="0.905" stop-color="#ff00e2"/><stop offset="0.952" stop-color="#ff00d2"/><stop offset="1.000" stop-color="#ff00c4"/></linearGradient><linearGradient id="c133" gradientUnits="userSpaceOnUse" x1="1043.8" x2="1373.8" y1="0" y2="0"><stop offset="0.000" stop-color="#002dff"/><stop offset="0.048" stop-color="#0028ff"/><stop offset="0.095" stop-color="#0023ff"/><stop offset="0.143" stop-color="#001eff"/><stop offset="0.190" stop-color="#001aff"/><stop offset="0.238" stop-color="#0a15ff"/><stop offset="0.286" stop-color="#1c10ff"/><stop offset="0.333" stop-color="#2f0aff"/><stop offset="0.381" stop-color="#4105ff"/><stop offset="0.429" stop-color="#5400ff"/><stop offset="0.476" stop-color="#6600ff"/><stop offset="0.524" stop-color="#7900ff"/><stop offset="0.571" stop-color="#8d00ff"/><stop offset="0.619" stop-color="#a000ff"/><stop offset="0.667" stop-color="#b400ff"/><stop offset="0.714" stop-color="#c800ff"/><stop offset="0.762" stop-color="#dc00ff"/><stop offset="0.810" stop-color="#f100ff"/><stop offset="0.857" stop-color="#ff00f8"/><stop offset="0.905" stop-color="#ff00e6"/><stop offset="0.952" stop-color="#ff00d6"/><stop offset="1.000" stop-color="#ff00c7"/></linearGradient><linearGradient id="c134" gradientUnits="userSpaceOnUse" x1="1045.0" x2="1371.9" y1="0" y2="0"><stop offset="0.000" stop-color="#002cff"/><stop offset="0.048" stop-color="#0027ff"/><stop offset="0.095" stop-color="#0022ff"/><stop offset="0.143" stop-color="#001dff"/><stop offset="0.190" stop-color="#0019ff"/><stop offset="0.238" stop-color="#0b14ff"/><stop offset="0.286" stop-color="#1c0fff"/><stop offset="0.333" stop-color="#2e0aff"/><stop offset="0.381" stop-color="#4005ff"/><stop offset="0.429" stop-color="#5200ff"/><stop offset="0.476" stop-color="#6500ff"/><stop offset="0.524" stop-color="#7700ff"/><stop offset="0.571" stop-color="#8a00ff"/><stop offset="0.619" stop-color="#9e00ff"/><stop offset="0.667" stop-color="#b100ff"/><stop offset="0.714" stop-color="#c500ff"/><stop offset="0.762" stop-color="#d900ff"/><stop offset="0.810" stop-color="#ed00ff"/><stop offset="0.857" stop-color="#ff00fd"/><stop offset="0.905" stop-color="#ff00ea"/><stop offset="0.952" stop-color="#ff00da"/><stop offset="1.000" stop-color="#ff00cb"/></linearGradient><linearGradient id="c135" gradientUnits="userSpaceOnUse" x1="1046.2" x2="1369.9" y1="0" y2="0"><stop offset="0.000" stop-color="#002aff"/><stop offset="0.048" stop-color="#0026ff"/><stop offset="0.095" stop-color="#0021ff"/><stop offset="0.143" stop-color="#001cff"/><stop offset="0.190" stop-color="#0018ff"/><stop offset="0.238" stop-color="#0b13ff"/><stop offset="0.286" stop-color="#1c0eff"/><stop offset="0.333" stop-color="#2d09ff"/><stop offset="0.381" stop-color="#3f04ff"/><stop offset="0.429" stop-color="#5100ff"/><stop offset="0.476" stop-color="#6300ff"/><stop offset="0.524" stop-color="#7600ff"/><stop offset="0.571" stop-color="#8800ff"/><stop offset="0.619" stop-color="#9b00ff"/><stop offset="0.667" stop-color="#ae00ff"/><stop offset="0.714" stop-color="#c100ff"/><stop offset="0.762" stop-color="#d500ff"/><stop offset="0.810" stop-color="#e900ff"/><stop offset="0.857" stop-color="#fd00ff"/><stop offset="0.905" stop-color="#ff00ee"/><stop offset="0.952" stop-color="#ff00de"/><stop offset="1.000" stop-color="#ff00cf"/></linearGradient><linearGradient id="c136" gradientUnits="userSpaceOnUse" x1="1047.5" x2="1368.0" y1="0" y2="0"><stop offset="0.000" stop-color="#0029ff"/><stop offset="0.048" stop-color="#0024ff"/><stop offset="0.095" stop-color="#0020ff"/><stop offset="0.143" stop-color="#001bff"/><stop offset="0.190" stop-color="#0017ff"/><stop offset="0.238" stop-color="#0b12ff"/><stop offset="0.286" stop-color="#1c0dff"/><stop offset="0.333" stop-color="#2d08ff"/><stop offset="0.381" stop-color="#3e03ff"/><stop offset="0.429" stop-color="#5000ff"/><stop offset="0.476" stop-color="#6200ff"/><stop offset="0.524" stop-color="#7400ff"/><stop offset="0.571" stop-color="#8600ff"/><stop offset="0.619" stop-color="#9800ff"/><stop offset="0.667" stop-color="#ab00ff"/><stop offset="0.714" stop-color="#be00ff"/><stop offset="0.762" stop-color="#d100ff"/><stop offset="0.810" stop-color="#e400ff"/><stop offset="0.857" stop-color="#f800ff"/><stop offset="0.905" stop-color="#ff00f3"/><stop offset="0.952" stop-color="#ff00e2"/><stop offset="1.000" stop-color="#ff00d3"/></linearGradient><linearGradient id="c137" gradientUnits="userSpaceOnUse" x1="1048.7" x2="1366.0" y1="0" y2="0"><stop offset="0.000" stop-color="#0028ff"/><stop offset="0.050" stop-color="#0023ff"/><stop offset="0.100" stop-color="#001eff"/><stop offset="0.150" stop-color="#0019ff"/><stop offset="0.200" stop-color="#0015ff"/><stop offset="0.250" stop-color="#0f10ff"/><stop offset="0.300" stop-color="#210bff"/><stop offset="0.350" stop-color="#3206ff"/><stop offset="0.400" stop-color="#4401ff"/><stop offset="0.450" stop-color="#5700ff"/><stop offset="0.500" stop-color="#6900ff"/><stop offset="0.550" stop-color="#7c00ff"/><stop offset="0.600" stop-color="#8f00ff"/><stop offset="0.650" stop-color="#a200ff"/><stop offset="0.700" stop-color="#b500ff"/><stop offset="0.750" stop-color="#c900ff"/><stop offset="0.800" stop-color="#dd00ff"/><stop offset="0.850" stop-color="#f100ff"/><stop offset="0.900" stop-color="#ff00f9"/><stop offset="0.950" stop-color="#ff00e7"/><stop offset="1.000" stop-color="#ff00d7"/></linearGradient><linearGradient id="c138" gradientUnits="userSpaceOnUse" x1="1050.0" x2="1364.1" y1="0" y2="0"><stop offset="0.000" stop-color="#0026ff"/><stop offset="0.050" stop-color="#0022ff"/><stop offset="0.100" stop-color="#001dff"/><stop offset="0.150" stop-color="#0018ff"/><stop offset="0.200" stop-color="#0014ff"/><stop offset="0.250" stop-color="#0f0fff"/><stop offset="0.300" stop-color="#200aff"/><stop offset="0.350" stop-color="#3205ff"/><stop offset="0.400" stop-color="#4300ff"/><stop offset="0.450" stop-color="#5500ff"/><stop offset="0.500" stop-color="#6700ff"/><stop offset="0.550" stop-color="#7a00ff"/><stop offset="0.600" stop-color="#8c00ff"/><stop offset="0.650" stop-color="#9f00ff"/><stop offset="0.700" stop-color="#b200ff"/><stop offset="0.750" stop-color="#c500ff"/><stop offset="0.800" stop-color="#d900ff"/><stop offset="0.850" stop-color="#ed00ff"/><stop offset="0.900" stop-color="#ff00fe"/><stop offset="0.950" stop-color="#ff00eb"/><stop offset="1.000" stop-color="#ff00db"/></linearGradient><linearGradient id="c139" gradientUnits="userSpaceOnUse" x1="1051.2" x2="1362.2" y1="0" y2="0"><stop offset="0.000" stop-color="#0025ff"/><stop offset="0.050" stop-color="#0021ff"/><stop offset="0.100" stop-color="#001cff"/><stop offset="0.150" stop-color="#0017ff"/><stop offset="0.200" stop-color="#0013ff"/><stop offset="0.250" stop-color="#0f0eff"/><stop offset="0.300" stop-color="#2009ff"/><stop offset="0.350" stop-color="#3104ff"/><stop offset="0.400" stop-color="#4300ff"/><stop offset="0.450" stop-color="#5400ff"/><stop offset="0.500" stop-color="#6600ff"/><stop offset="0.550" stop-color="#7800ff"/><stop offset="0.600" stop-color="#8a00ff"/><stop offset="0.650" stop-color="#9c00ff"/><stop offset="0.700" stop-color="#af00ff"/><stop offset="0.750" stop-color="#c200ff"/><stop offset="0.800" stop-color="#d500ff"/><stop offset="0.850" stop-color="#e800ff"/><stop offset="0.900" stop-color="#fc00ff"/><stop offset="0.950" stop-color="#ff00ef"/><stop offset="1.000" stop-color="#ff00df"/></linearGradient><linearGradient id="c140" gradientUnits="userSpaceOnUse" x1="1052.4" x2="1360.2" y1="0" y2="0"><stop offset="0.000" stop-color="#0024ff"/><stop offset="0.050" stop-color="#001fff"/><stop offset="0.100" stop-color="#001bff"/><stop offset="0.150" stop-color="#0016ff"/><stop offset="0.200" stop-color="#0012ff"/><stop offset="0.250" stop-color="#0f0dff"/><stop offset="0.300" stop-color="#2008ff"/><stop offset="0.350" stop-color="#3104ff"/><stop offset="0.400" stop-color="#4200ff"/><stop offset="0.450" stop-color="#5300ff"/><stop offset="0.500" stop-color="#6400ff"/><stop offset="0.550" stop-color="#7600ff"/><stop offset="0.600" stop-color="#8800ff"/><stop offset="0.650" stop-color="#9a00ff"/><stop offset="0.700" stop-color="#ac00ff"/><stop offset="0.750" stop-color="#bf00ff"/><stop offset="0.800" stop-color="#d100ff"/><stop offset="0.850" stop-color="#e400ff"/><stop offset="0.900" stop-color="#f700ff"/><stop offset="0.950" stop-color="#ff00f4"/><stop offset="1.000" stop-color="#ff00e3"/></linearGradient><linearGradient id="c141" gradientUnits="userSpaceOnUse" x1="1053.7" x2="1358.3" y1="0" y2="0"><stop offset="0.000" stop-color="#0023ff"/><stop offset="0.050" stop-color="#001eff"/><stop offset="0.100" stop-color="#001aff"/><stop offset="0.150" stop-color="#0015ff"/><stop offset="0.200" stop-color="#0011ff"/><stop offset="0.250" stop-color="#0f0cff"/><stop offset="0.300" stop-color="#1f08ff"/><stop offset="0.350" stop-color="#3003ff"/><stop offset="0.400" stop-color="#4100ff"/><stop offset="0.450" stop-color="#5200ff"/><stop offset="0.500" stop-color="#6300ff"/><stop offset="0.550" stop-color="#7400ff"/><stop offset="0.600" stop-color="#8600ff"/><stop offset="0.650" stop-color="#9700ff"/><stop offset="0.700" stop-color="#a900ff"/><stop offset="0.750" stop-color="#bb00ff"/><stop offset="0.800" stop-color="#ce00ff"/><stop offset="0.850" stop-color="#e000ff"/><stop offset="0.900" stop-color="#f300ff"/><stop offset="0.950" stop-color="#ff00f8"/><stop offset="1.000" stop-color="#ff00e7"/></linearGradient><linearGradient id="c142" gradientUnits="userSpaceOnUse" x1="1054.9" x2="1356.4" y1="0" y2="0"><stop offset="0.000" stop-color="#0022ff"/><stop offset="0.053" stop-color="#001dff"/><stop offset="0.105" stop-color="#0018ff"/><stop offset="0.158" stop-color="#0014ff"/><stop offset="0.211" stop-color="#030fff"/><stop offset="0.263" stop-color="#130aff"/><stop offset="0.316" stop-color="#2405ff"/><stop offset="0.368" stop-color="#3501ff"/><stop offset="0.421" stop-color="#4700ff"/><stop offset="0.474" stop-color="#5800ff"/><stop offset="0.526" stop-color="#6a00ff"/><stop offset="0.579" stop-color="#7c00ff"/><stop offset="0.632" stop-color="#8e00ff"/><stop offset="0.684" stop-color="#a100ff"/><stop offset="0.737" stop-color="#b300ff"/><stop offset="0.789" stop-color="#c600ff"/><stop offset="0.842" stop-color="#d900ff"/><stop offset="0.895" stop-color="#ed00ff"/><stop offset="0.947" stop-color="#ff00fe"/><stop offset="1.000" stop-color="#ff00ec"/></linearGradient><linearGradient id="c143" gradientUnits="userSpaceOnUse" x1="1056.2" x2="1354.4" y1="0" y2="0"><stop offset="0.000" stop-color="#0020ff"/><stop offset="0.053" stop-color="#001cff"/><stop offset="0.105" stop-color="#0017ff"/><stop offset="0.158" stop-color="#0013ff"/><stop offset="0.211" stop-color="#030eff"/><stop offset="0.263" stop-color="#1309ff"/><stop offset="0.316" stop-color="#2405ff"/><stop offset="0.368" stop-color="#3500ff"/><stop offset="0.421" stop-color="#4600ff"/><stop offset="0.474" stop-color="#5700ff"/><stop offset="0.526" stop-color="#6800ff"/><stop offset="0.579" stop-color="#7a00ff"/><stop offset="0.632" stop-color="#8c00ff"/><stop offset="0.684" stop-color="#9e00ff"/><stop offset="0.737" stop-color="#b000ff"/><stop offset="0.789" stop-color="#c300ff"/><stop offset="0.842" stop-color="#d500ff"/><stop offset="0.895" stop-color="#e800ff"/><stop offset="0.947" stop-color="#fc00ff"/><stop offset="1.000" stop-color="#ff00f0"/></linearGradient><linearGradient id="c144" gradientUnits="userSpaceOnUse" x1="1057.4" x2="1352.5" y1="0" y2="0"><stop offset="0.000" stop-color="#001fff"/><stop offset="0.053" stop-color="#001bff"/><stop offset="0.105" stop-color="#0016ff"/><stop offset="0.158" stop-color="#0012ff"/><stop offset="0.211" stop-color="#030dff"/><stop offset="0.263" stop-color="#1309ff"/><stop offset="0.316" stop-color="#2404ff"/><stop offset="0.368" stop-color="#3400ff"/><stop offset="0.421" stop-color="#4500ff"/><stop offset="0.474" stop-color="#5600ff"/><stop offset="0.526" stop-color="#6700ff"/><stop offset="0.579" stop-color="#7800ff"/><stop offset="0.632" stop-color="#8a00ff"/><stop offset="0.684" stop-color="#9b00ff"/><stop offset="0.737" stop-color="#ad00ff"/><stop offset="0.789" stop-color="#bf00ff"/><stop offset="0.842" stop-color="#d200ff"/><stop offset="0.895" stop-color="#e400ff"/><stop offset="0.947" stop-color="#f700ff"/><stop offset="1.000" stop-color="#ff00f4"/></linearGradient><linearGradient id="c145" gradientUnits="userSpaceOnUse" x1="1058.7" x2="1350.5" y1="0" y2="0"><stop offset="0.000" stop-color="#001eff"/><stop offset="0.053" stop-color="#001aff"/><stop offset="0.105" stop-color="#0015ff"/><stop offset="0.158" stop-color="#0011ff"/><stop offset="0.211" stop-color="#030cff"/><stop offset="0.263" stop-color="#1308ff"/><stop offset="0.316" stop-color="#2303ff"/><stop offset="0.368" stop-color="#3300ff"/><stop offset="0.421" stop-color="#4400ff"/><stop offset="0.474" stop-color="#5400ff"/><stop offset="0.526" stop-color="#6500ff"/><stop offset="0.579" stop-color="#7600ff"/><stop offset="0.632" stop-color="#8700ff"/><stop offset="0.684" stop-color="#9900ff"/><stop offset="0.737" stop-color="#aa00ff"/><stop offset="0.789" stop-color="#bc00ff"/><stop offset="0.842" stop-color="#ce00ff"/><stop offset="0.895" stop-color="#e000ff"/><stop offset="0.947" stop-color="#f200ff"/><stop offset="1.000" stop-color="#ff00f9"/></linearGradient><linearGradient id="c146" gradientUnits="userSpaceOnUse" x1="1059.9" x2="1348.6" y1="0" y2="0"><stop offset="0.000" stop-color="#001dff"/><stop offset="0.053" stop-color="#0019ff"/><stop offset="0.105" stop-color="#0014ff"/><stop offset="0.158" stop-color="#0010ff"/><stop offset="0.211" stop-color="#040cff"/><stop offset="0.263" stop-color="#1307ff"/><stop offset="0.316" stop-color="#2303ff"/><stop offset="0.368" stop-color="#3300ff"/><stop offset="0.421" stop-color="#4300ff"/><stop offset="0.474" stop-color="#5300ff"/><stop offset="0.526" stop-color="#6400ff"/><stop offset="0.579" stop-color="#7400ff"/><stop offset="0.632" stop-color="#8500ff"/><stop offset="0.684" stop-color="#9600ff"/><stop offset="0.737" stop-color="#a700ff"/><stop offset="0.789" stop-color="#b900ff"/><stop offset="0.842" stop-color="#ca00ff"/><stop offset="0.895" stop-color="#dc00ff"/><stop offset="0.947" stop-color="#ee00ff"/><stop offset="1.000" stop-color="#ff00fe"/></linearGradient><linearGradient id="c147" gradientUnits="userSpaceOnUse" x1="1061.1" x2="1346.7" y1="0" y2="0"><stop offset="0.000" stop-color="#001cff"/><stop offset="0.056" stop-color="#0017ff"/><stop offset="0.111" stop-color="#0013ff"/><stop offset="0.167" stop-color="#000eff"/><stop offset="0.222" stop-color="#070aff"/><stop offset="0.278" stop-color="#1705ff"/><stop offset="0.333" stop-color="#2801ff"/><stop offset="0.389" stop-color="#3800ff"/><stop offset="0.444" stop-color="#4900ff"/><stop offset="0.500" stop-color="#5a00ff"/><stop offset="0.556" stop-color="#6b00ff"/><stop offset="0.611" stop-color="#7c00ff"/><stop offset="0.667" stop-color="#8e00ff"/><stop offset="0.722" stop-color="#a000ff"/><stop offset="0.778" stop-color="#b200ff"/><stop offset="0.833" stop-color="#c400ff"/><stop offset="0.889" stop-color="#d600ff"/><stop offset="0.944" stop-color="#e900ff"/><stop offset="1.000" stop-color="#fc00ff"/></linearGradient><linearGradient id="c148" gradientUnits="userSpaceOnUse" x1="1062.5" x2="1344.7" y1="0" y2="0"><stop offset="0.000" stop-color="#001bff"/><stop offset="0.056" stop-color="#0016ff"/><stop offset="0.111" stop-color="#0012ff"/><stop offset="0.167" stop-color="#000eff"/><stop offset="0.222" stop-color="#0709ff"/><stop offset="0.278" stop-color="#1705ff"/><stop offset="0.333" stop-color="#2700ff"/><stop offset="0.389" stop-color="#3800ff"/><stop offset="0.444" stop-color="#4800ff"/><stop offset="0.500" stop-color="#5900ff"/><stop offset="0.556" stop-color="#6900ff"/><stop offset="0.611" stop-color="#7a00ff"/><stop offset="0.667" stop-color="#8c00ff"/><stop offset="0.722" stop-color="#9d00ff"/><stop offset="0.778" stop-color="#af00ff"/><stop offset="0.833" stop-color="#c000ff"/><stop offset="0.889" stop-color="#d200ff"/><stop offset="0.944" stop-color="#e500ff"/><stop offset="1.000" stop-color="#f700ff"/></linearGradient><linearGradient id="c149" gradientUnits="userSpaceOnUse" x1="1063.9" x2="1342.8" y1="0" y2="0"><stop offset="0.000" stop-color="#001aff"/><stop offset="0.056" stop-color="#0015ff"/><stop offset="0.111" stop-color="#0011ff"/><stop offset="0.167" stop-color="#000dff"/><stop offset="0.222" stop-color="#0808ff"/><stop offset="0.278" stop-color="#1704ff"/><stop offset="0.333" stop-color="#2700ff"/><stop offset="0.389" stop-color="#3700ff"/><stop offset="0.444" stop-color="#4700ff"/><stop offset="0.500" stop-color="#5700ff"/><stop offset="0.556" stop-color="#6800ff"/><stop offset="0.611" stop-color="#7900ff"/><stop offset="0.667" stop-color="#8900ff"/><stop offset="0.722" stop-color="#9a00ff"/><stop offset="0.778" stop-color="#ac00ff"/><stop offset="0.833" stop-color="#bd00ff"/><stop offset="0.889" stop-color="#cf00ff"/><stop offset="0.944" stop-color="#e000ff"/><stop offset="1.000" stop-color="#f200ff"/></linearGradient><linearGradient id="c150" gradientUnits="userSpaceOnUse" x1="1065.3" x2="1340.9" y1="0" y2="0"><stop offset="0.000" stop-color="#0018ff"/><stop offset="0.056" stop-color="#0014ff"/><stop offset="0.111" stop-color="#0010ff"/><stop offset="0.167" stop-color="#000cff"/><stop offset="0.222" stop-color="#0807ff"/><stop offset="0.278" stop-color="#1703ff"/><stop offset="0.333" stop-color="#2700ff"/><stop offset="0.389" stop-color="#3600ff"/><stop offset="0.444" stop-color="#4600ff"/><stop offset="0.500" stop-color="#5600ff"/><stop offset="0.556" stop-color="#6600ff"/><stop offset="0.611" stop-color="#7700ff"/><stop offset="0.667" stop-color="#8700ff"/><stop offset="0.722" stop-color="#9800ff"/><stop offset="0.778" stop-color="#a900ff"/><stop offset="0.833" stop-color="#ba00ff"/><stop offset="0.889" stop-color="#cb00ff"/><stop offset="0.944" stop-color="#dc00ff"/><stop offset="1.000" stop-color="#ee00ff"/></linearGradient><linearGradient id="c151" gradientUnits="userSpaceOnUse" x1="1066.8" x2="1338.9" y1="0" y2="0"><stop offset="0.000" stop-color="#0017ff"/><stop offset="0.056" stop-color="#0013ff"/><stop offset="0.111" stop-color="#000fff"/><stop offset="0.167" stop-color="#000bff"/><stop offset="0.222" stop-color="#0807ff"/><stop offset="0.278" stop-color="#1702ff"/><stop offset="0.333" stop-color="#2600ff"/><stop offset="0.389" stop-color="#3600ff"/><stop offset="0.444" stop-color="#4500ff"/><stop offset="0.500" stop-color="#5500ff"/><stop offset="0.556" stop-color="#6500ff"/><stop offset="0.611" stop-color="#7500ff"/><stop offset="0.667" stop-color="#8500ff"/><stop offset="0.722" stop-color="#9500ff"/><stop offset="0.778" stop-color="#a600ff"/><stop offset="0.833" stop-color="#b600ff"/><stop offset="0.889" stop-color="#c700ff"/><stop offset="0.944" stop-color="#d800ff"/><stop offset="1.000" stop-color="#ea00ff"/></linearGradient><linearGradient id="c152" gradientUnits="userSpaceOnUse" x1="1068.2" x2="1337.0" y1="0" y2="0"><stop offset="0.000" stop-color="#0016ff"/><stop offset="0.059" stop-color="#0012ff"/><stop offset="0.118" stop-color="#000eff"/><stop offset="0.176" stop-color="#0009ff"/><stop offset="0.235" stop-color="#0c05ff"/><stop offset="0.294" stop-color="#1c00ff"/><stop offset="0.353" stop-color="#2b00ff"/><stop offset="0.412" stop-color="#3b00ff"/><stop offset="0.471" stop-color="#4c00ff"/><stop offset="0.529" stop-color="#5c00ff"/><stop offset="0.588" stop-color="#6c00ff"/><stop offset="0.647" stop-color="#7d00ff"/><stop offset="0.706" stop-color="#8e00ff"/><stop offset="0.765" stop-color="#9f00ff"/><stop offset="0.824" stop-color="#b000ff"/><stop offset="0.882" stop-color="#c200ff"/><stop offset="0.941" stop-color="#d300ff"/><stop offset="1.000" stop-color="#e500ff"/></linearGradient><linearGradient id="c153" gradientUnits="userSpaceOnUse" x1="1069.6" x2="1335.0" y1="0" y2="0"><stop offset="0.000" stop-color="#0015ff"/><stop offset="0.059" stop-color="#0011ff"/><stop offset="0.118" stop-color="#000dff"/><stop offset="0.176" stop-color="#0008ff"/><stop offset="0.235" stop-color="#0c04ff"/><stop offset="0.294" stop-color="#1c00ff"/><stop offset="0.353" stop-color="#2b00ff"/><stop offset="0.412" stop-color="#3b00ff"/><stop offset="0.471" stop-color="#4b00ff"/><stop offset="0.529" stop-color="#5b00ff"/><stop offset="0.588" stop-color="#6b00ff"/><stop offset="0.647" stop-color="#7b00ff"/><stop offset="0.706" stop-color="#8c00ff"/><stop offset="0.765" stop-color="#9c00ff"/><stop offset="0.824" stop-color="#ad00ff"/><stop offset="0.882" stop-color="#be00ff"/><stop offset="0.941" stop-color="#cf00ff"/><stop offset="1.000" stop-color="#e100ff"/></linearGradient><linearGradient id="c154" gradientUnits="userSpaceOnUse" x1="1071.0" x2="1333.1" y1="0" y2="0"><stop offset="0.000" stop-color="#0014ff"/><stop offset="0.059" stop-color="#0010ff"/><stop offset="0.118" stop-color="#000cff"/><stop offset="0.176" stop-color="#0008ff"/><stop offset="0.235" stop-color="#0c03ff"/><stop offset="0.294" stop-color="#1b00ff"/><stop offset="0.353" stop-color="#2b00ff"/><stop offset="0.412" stop-color="#3a00ff"/><stop offset="0.471" stop-color="#4a00ff"/><stop offset="0.529" stop-color="#5900ff"/><stop offset="0.588" stop-color="#6900ff"/><stop offset="0.647" stop-color="#7900ff"/><stop offset="0.706" stop-color="#8900ff"/><stop offset="0.765" stop-color="#9a00ff"/><stop offset="0.824" stop-color="#aa00ff"/><stop offset="0.882" stop-color="#bb00ff"/><stop offset="0.941" stop-color="#cc00ff"/><stop offset="1.000" stop-color="#dd00ff"/></linearGradient><linearGradient id="c155" gradientUnits="userSpaceOnUse" x1="1072.5" x2="1331.2" y1="0" y2="0"><stop offset="0.000" stop-color="#0013ff"/><stop offset="0.059" stop-color="#000fff"/><stop offset="0.118" stop-color="#000bff"/><stop offset="0.176" stop-color="#0007ff"/><stop offset="0.235" stop-color="#0d03ff"/><stop offset="0.294" stop-color="#1b00ff"/><stop offset="0.353" stop-color="#2a00ff"/><stop offset="0.412" stop-color="#3900ff"/><stop offset="0.471" stop-color="#4900ff"/><stop offset="0.529" stop-color="#5800ff"/><stop offset="0.588" stop-color="#6700ff"/><stop offset="0.647" stop-color="#7700ff"/><stop offset="0.706" stop-color="#8700ff"/><stop offset="0.765" stop-color="#9700ff"/><stop offset="0.824" stop-color="#a700ff"/><stop offset="0.882" stop-color="#b700ff"/><stop offset="0.941" stop-color="#c800ff"/><stop offset="1.000" stop-color="#d900ff"/></linearGradient><linearGradient id="c156" gradientUnits="userSpaceOnUse" x1="1073.9" x2="1329.2" y1="0" y2="0"><stop offset="0.000" stop-color="#0012ff"/><stop offset="0.063" stop-color="#000eff"/><stop offset="0.125" stop-color="#000aff"/><stop offset="0.188" stop-color="#0105ff"/><stop offset="0.250" stop-color="#1001ff"/><stop offset="0.312" stop-color="#2000ff"/><stop offset="0.375" stop-color="#2f00ff"/><stop offset="0.437" stop-color="#3f00ff"/><stop offset="0.500" stop-color="#4f00ff"/><stop offset="0.563" stop-color="#5f00ff"/><stop offset="0.625" stop-color="#6f00ff"/><stop offset="0.688" stop-color="#8000ff"/><stop offset="0.750" stop-color="#9000ff"/><stop offset="0.812" stop-color="#a100ff"/><stop offset="0.875" stop-color="#b200ff"/><stop offset="0.937" stop-color="#c300ff"/><stop offset="1.000" stop-color="#d500ff"/></linearGradient><linearGradient id="c157" gradientUnits="userSpaceOnUse" x1="1075.3" x2="1327.3" y1="0" y2="0"><stop offset="0.000" stop-color="#0011ff"/><stop offset="0.062" stop-color="#000dff"/><stop offset="0.125" stop-color="#0009ff"/><stop offset="0.188" stop-color="#0204ff"/><stop offset="0.250" stop-color="#1100ff"/><stop offset="0.313" stop-color="#2000ff"/><stop offset="0.375" stop-color="#2f00ff"/><stop offset="0.437" stop-color="#3e00ff"/><stop offset="0.500" stop-color="#4e00ff"/><stop offset="0.563" stop-color="#5e00ff"/><stop offset="0.625" stop-color="#6e00ff"/><stop offset="0.687" stop-color="#7e00ff"/><stop offset="0.750" stop-color="#8e00ff"/><stop offset="0.812" stop-color="#9e00ff"/><stop offset="0.875" stop-color="#af00ff"/><stop offset="0.938" stop-color="#c000ff"/><stop offset="1.000" stop-color="#d100ff"/></linearGradient><linearGradient id="c158" gradientUnits="userSpaceOnUse" x1="1076.7" x2="1325.4" y1="0" y2="0"><stop offset="0.000" stop-color="#0010ff"/><stop offset="0.062" stop-color="#000cff"/><stop offset="0.125" stop-color="#0008ff"/><stop offset="0.187" stop-color="#0204ff"/><stop offset="0.250" stop-color="#1100ff"/><stop offset="0.312" stop-color="#2000ff"/><stop offset="0.375" stop-color="#2e00ff"/><stop offset="0.437" stop-color="#3e00ff"/><stop offset="0.500" stop-color="#4d00ff"/><stop offset="0.563" stop-color="#5c00ff"/><stop offset="0.625" stop-color="#6c00ff"/><stop offset="0.688" stop-color="#7c00ff"/><stop offset="0.750" stop-color="#8b00ff"/><stop offset="0.813" stop-color="#9b00ff"/><stop offset="0.875" stop-color="#ac00ff"/><stop offset="0.937" stop-color="#bc00ff"/><stop offset="1.000" stop-color="#cd00ff"/></linearGradient><linearGradient id="c159" gradientUnits="userSpaceOnUse" x1="1078.1" x2="1323.4" y1="0" y2="0"><stop offset="0.000" stop-color="#000fff"/><stop offset="0.063" stop-color="#000bff"/><stop offset="0.125" stop-color="#0007ff"/><stop offset="0.187" stop-color="#0303ff"/><stop offset="0.250" stop-color="#1100ff"/><stop offset="0.312" stop-color="#1f00ff"/><stop offset="0.375" stop-color="#2e00ff"/><stop offset="0.438" stop-color="#3d00ff"/><stop offset="0.500" stop-color="#4c00ff"/><stop offset="0.562" stop-color="#5b00ff"/><stop offset="0.625" stop-color="#6a00ff"/><stop offset="0.688" stop-color="#7900ff"/><stop offset="0.750" stop-color="#8900ff"/><stop offset="0.813" stop-color="#9900ff"/><stop offset="0.875" stop-color="#a900ff"/><stop offset="0.937" stop-color="#b900ff"/><stop offset="1.000" stop-color="#c900ff"/></linearGradient><linearGradient id="c160" gradientUnits="userSpaceOnUse" x1="1079.6" x2="1321.5" y1="0" y2="0"><stop offset="0.000" stop-color="#000eff"/><stop offset="0.062" stop-color="#000aff"/><stop offset="0.125" stop-color="#0006ff"/><stop offset="0.188" stop-color="#0302ff"/><stop offset="0.250" stop-color="#1100ff"/><stop offset="0.312" stop-color="#1f00ff"/><stop offset="0.375" stop-color="#2e00ff"/><stop offset="0.438" stop-color="#3c00ff"/><stop offset="0.500" stop-color="#4b00ff"/><stop offset="0.562" stop-color="#5900ff"/><stop offset="0.625" stop-color="#6800ff"/><stop offset="0.688" stop-color="#7700ff"/><stop offset="0.750" stop-color="#8700ff"/><stop offset="0.812" stop-color="#9600ff"/><stop offset="0.875" stop-color="#a500ff"/><stop offset="0.938" stop-color="#b500ff"/><stop offset="1.000" stop-color="#c500ff"/></linearGradient><linearGradient id="c161" gradientUnits="userSpaceOnUse" x1="1081.0" x2="1319.6" y1="0" y2="0"><stop offset="0.000" stop-color="#000dff"/><stop offset="0.067" stop-color="#0009ff"/><stop offset="0.133" stop-color="#0005ff"/><stop offset="0.200" stop-color="#0601ff"/><stop offset="0.267" stop-color="#1500ff"/><stop offset="0.333" stop-color="#2400ff"/><stop offset="0.400" stop-color="#3300ff"/><stop offset="0.467" stop-color="#4200ff"/><stop offset="0.533" stop-color="#5100ff"/><stop offset="0.600" stop-color="#6100ff"/><stop offset="0.667" stop-color="#7000ff"/><stop offset="0.733" stop-color="#8000ff"/><stop offset="0.800" stop-color="#9000ff"/><stop offset="0.867" stop-color="#a000ff"/><stop offset="0.933" stop-color="#b100ff"/><stop offset="1.000" stop-color="#c100ff"/></linearGradient><linearGradient id="c162" gradientUnits="userSpaceOnUse" x1="1082.4" x2="1317.6" y1="0" y2="0"><stop offset="0.000" stop-color="#000cff"/><stop offset="0.067" stop-color="#0008ff"/><stop offset="0.133" stop-color="#0004ff"/><stop offset="0.200" stop-color="#0600ff"/><stop offset="0.267" stop-color="#1500ff"/><stop offset="0.333" stop-color="#2300ff"/><stop offset="0.400" stop-color="#3200ff"/><stop offset="0.467" stop-color="#4100ff"/><stop offset="0.533" stop-color="#5000ff"/><stop offset="0.600" stop-color="#5f00ff"/><stop offset="0.667" stop-color="#6f00ff"/><stop offset="0.733" stop-color="#7e00ff"/><stop offset="0.800" stop-color="#8e00ff"/><stop offset="0.867" stop-color="#9d00ff"/><stop offset="0.933" stop-color="#ad00ff"/><stop offset="1.000" stop-color="#be00ff"/></linearGradient><linearGradient id="c163" gradientUnits="userSpaceOnUse" x1="1083.8" x2="1315.7" y1="0" y2="0"><stop offset="0.000" stop-color="#000bff"/><stop offset="0.067" stop-color="#0007ff"/><stop offset="0.133" stop-color="#0003ff"/><stop offset="0.200" stop-color="#0700ff"/><stop offset="0.267" stop-color="#1500ff"/><stop offset="0.333" stop-color="#2300ff"/><stop offset="0.400" stop-color="#3200ff"/><stop offset="0.467" stop-color="#4000ff"/><stop offset="0.533" stop-color="#4f00ff"/><stop offset="0.600" stop-color="#5e00ff"/><stop offset="0.667" stop-color="#6d00ff"/><stop offset="0.733" stop-color="#7c00ff"/><stop offset="0.800" stop-color="#8b00ff"/><stop offset="0.867" stop-color="#9b00ff"/><stop offset="0.933" stop-color="#aa00ff"/><stop offset="1.000" stop-color="#ba00ff"/></linearGradient><linearGradient id="c164" gradientUnits="userSpaceOnUse" x1="1085.3" x2="1313.7" y1="0" y2="0"><stop offset="0.000" stop-color="#000aff"/><stop offset="0.067" stop-color="#0006ff"/><stop offset="0.133" stop-color="#0002ff"/><stop offset="0.200" stop-color="#0700ff"/><stop offset="0.267" stop-color="#1500ff"/><stop offset="0.333" stop-color="#2300ff"/><stop offset="0.400" stop-color="#3100ff"/><stop offset="0.467" stop-color="#3f00ff"/><stop offset="0.533" stop-color="#4e00ff"/><stop offset="0.600" stop-color="#5c00ff"/><stop offset="0.667" stop-color="#6b00ff"/><stop offset="0.733" stop-color="#7a00ff"/><stop offset="0.800" stop-color="#8900ff"/><stop offset="0.867" stop-color="#9800ff"/><stop offset="0.933" stop-color="#a700ff"/><stop offset="1.000" stop-color="#b600ff"/></linearGradient><linearGradient id="c165" gradientUnits="userSpaceOnUse" x1="1086.7" x2="1311.8" y1="0" y2="0"><stop offset="0.000" stop-color="#0009ff"/><stop offset="0.067" stop-color="#0005ff"/><stop offset="0.133" stop-color="#0002ff"/><stop offset="0.200" stop-color="#0700ff"/><stop offset="0.267" stop-color="#1500ff"/><stop offset="0.333" stop-color="#2300ff"/><stop offset="0.400" stop-color="#3100ff"/><stop offset="0.467" stop-color="#3e00ff"/><stop offset="0.533" stop-color="#4d00ff"/><stop offset="0.600" stop-color="#5b00ff"/><stop offset="0.667" stop-color="#6900ff"/><stop offset="0.733" stop-color="#7800ff"/><stop offset="0.800" stop-color="#8600ff"/><stop offset="0.867" stop-color="#9500ff"/><stop offset="0.933" stop-color="#a400ff"/><stop offset="1.000" stop-color="#b300ff"/></linearGradient><linearGradient id="c166" gradientUnits="userSpaceOnUse" x1="1088.1" x2="1309.9" y1="0" y2="0"><stop offset="0.000" stop-color="#0008ff"/><stop offset="0.071" stop-color="#0004ff"/><stop offset="0.143" stop-color="#0000ff"/><stop offset="0.214" stop-color="#0b00ff"/><stop offset="0.286" stop-color="#1900ff"/><stop offset="0.357" stop-color="#2700ff"/><stop offset="0.429" stop-color="#3600ff"/><stop offset="0.500" stop-color="#4400ff"/><stop offset="0.571" stop-color="#5300ff"/><stop offset="0.643" stop-color="#6200ff"/><stop offset="0.714" stop-color="#7100ff"/><stop offset="0.786" stop-color="#8100ff"/><stop offset="0.857" stop-color="#9000ff"/><stop offset="0.929" stop-color="#a000ff"/><stop offset="1.000" stop-color="#af00ff"/></linearGradient><linearGradient id="c167" gradientUnits="userSpaceOnUse" x1="1089.5" x2="1307.9" y1="0" y2="0"><stop offset="0.000" stop-color="#0007ff"/><stop offset="0.071" stop-color="#0004ff"/><stop offset="0.143" stop-color="#0000ff"/><stop offset="0.214" stop-color="#0b00ff"/><stop offset="0.286" stop-color="#1900ff"/><stop offset="0.357" stop-color="#2700ff"/><stop offset="0.429" stop-color="#3500ff"/><stop offset="0.500" stop-color="#4400ff"/><stop offset="0.571" stop-color="#5200ff"/><stop offset="0.643" stop-color="#6100ff"/><stop offset="0.714" stop-color="#6f00ff"/><stop offset="0.786" stop-color="#7e00ff"/><stop offset="0.857" stop-color="#8d00ff"/><stop offset="0.929" stop-color="#9d00ff"/><stop offset="1.000" stop-color="#ac00ff"/></linearGradient><linearGradient id="c168" gradientUnits="userSpaceOnUse" x1="1091.0" x2="1306.0" y1="0" y2="0"><stop offset="0.000" stop-color="#0007ff"/><stop offset="0.071" stop-color="#0003ff"/><stop offset="0.143" stop-color="#0000ff"/><stop offset="0.214" stop-color="#0b00ff"/><stop offset="0.286" stop-color="#1900ff"/><stop offset="0.357" stop-color="#2700ff"/><stop offset="0.429" stop-color="#3500ff"/><stop offset="0.500" stop-color="#4300ff"/><stop offset="0.571" stop-color="#5100ff"/><stop offset="0.643" stop-color="#5f00ff"/><stop offset="0.714" stop-color="#6d00ff"/><stop offset="0.786" stop-color="#7c00ff"/><stop offset="0.857" stop-color="#8b00ff"/><stop offset="0.929" stop-color="#9a00ff"/><stop offset="1.000" stop-color="#a900ff"/></linearGradient><linearGradient id="c169" gradientUnits="userSpaceOnUse" x1="1092.6" x2="1304.1" y1="0" y2="0"><stop offset="0.000" stop-color="#0006ff"/><stop offset="0.071" stop-color="#0002ff"/><stop offset="0.143" stop-color="#0000ff"/><stop offset="0.214" stop-color="#0c00ff"/><stop offset="0.286" stop-color="#1900ff"/><stop offset="0.357" stop-color="#2600ff"/><stop offset="0.429" stop-color="#3400ff"/><stop offset="0.500" stop-color="#4200ff"/><stop offset="0.571" stop-color="#5000ff"/><stop offset="0.643" stop-color="#5d00ff"/><stop offset="0.714" stop-color="#6c00ff"/><stop offset="0.786" stop-color="#7a00ff"/><stop offset="0.857" stop-color="#8800ff"/><stop offset="0.929" stop-color="#9700ff"/><stop offset="1.000" stop-color="#a500ff"/></linearGradient><linearGradient id="c170" gradientUnits="userSpaceOnUse" x1="1094.3" x2="1302.1" y1="0" y2="0"><stop offset="0.000" stop-color="#0005ff"/><stop offset="0.077" stop-color="#0001ff"/><stop offset="0.154" stop-color="#0100ff"/><stop offset="0.231" stop-color="#0f00ff"/><stop offset="0.308" stop-color="#1d00ff"/><stop offset="0.385" stop-color="#2b00ff"/><stop offset="0.462" stop-color="#3a00ff"/><stop offset="0.538" stop-color="#4800ff"/><stop offset="0.615" stop-color="#5700ff"/><stop offset="0.692" stop-color="#6500ff"/><stop offset="0.769" stop-color="#7400ff"/><stop offset="0.846" stop-color="#8300ff"/><stop offset="0.923" stop-color="#9300ff"/><stop offset="1.000" stop-color="#a200ff"/></linearGradient><linearGradient id="c171" gradientUnits="userSpaceOnUse" x1="1095.9" x2="1300.2" y1="0" y2="0"><stop offset="0.000" stop-color="#0004ff"/><stop offset="0.077" stop-color="#0000ff"/><stop offset="0.154" stop-color="#0200ff"/><stop offset="0.231" stop-color="#0f00ff"/><stop offset="0.308" stop-color="#1d00ff"/><stop offset="0.385" stop-color="#2b00ff"/><stop offset="0.462" stop-color="#3900ff"/><stop offset="0.538" stop-color="#4700ff"/><stop offset="0.615" stop-color="#5500ff"/><stop offset="0.692" stop-color="#6400ff"/><stop offset="0.769" stop-color="#7200ff"/><stop offset="0.846" stop-color="#8100ff"/><stop offset="0.923" stop-color="#9000ff"/><stop offset="1.000" stop-color="#9f00ff"/></linearGradient><linearGradient id="c172" gradientUnits="userSpaceOnUse" x1="1097.6" x2="1298.2" y1="0" y2="0"><stop offset="0.000" stop-color="#0003ff"/><stop offset="0.077" stop-color="#0000ff"/><stop offset="0.154" stop-color="#0200ff"/><stop offset="0.231" stop-color="#1000ff"/><stop offset="0.308" stop-color="#1d00ff"/><stop offset="0.385" stop-color="#2b00ff"/><stop offset="0.462" stop-color="#3800ff"/><stop offset="0.538" stop-color="#4600ff"/><stop offset="0.615" stop-color="#5400ff"/><stop offset="0.692" stop-color="#6200ff"/><stop offset="0.769" stop-color="#7000ff"/><stop offset="0.846" stop-color="#7f00ff"/><stop offset="0.923" stop-color="#8d00ff"/><stop offset="1.000" stop-color="#9c00ff"/></linearGradient><linearGradient id="c173" gradientUnits="userSpaceOnUse" x1="1099.2" x2="1296.3" y1="0" y2="0"><stop offset="0.000" stop-color="#0002ff"/><stop offset="0.077" stop-color="#0000ff"/><stop offset="0.154" stop-color="#0300ff"/><stop offset="0.231" stop-color="#1000ff"/><stop offset="0.308" stop-color="#1d00ff"/><stop offset="0.385" stop-color="#2a00ff"/><stop offset="0.462" stop-color="#3800ff"/><stop offset="0.538" stop-color="#4500ff"/><stop offset="0.615" stop-color="#5300ff"/><stop offset="0.692" stop-color="#6000ff"/><stop offset="0.769" stop-color="#6e00ff"/><stop offset="0.846" stop-color="#7c00ff"/><stop offset="0.923" stop-color="#8a00ff"/><stop offset="1.000" stop-color="#9900ff"/></linearGradient><linearGradient id="c174" gradientUnits="userSpaceOnUse" x1="1100.9" x2="1294.4" y1="0" y2="0"><stop offset="0.000" stop-color="#0001ff"/><stop offset="0.077" stop-color="#0000ff"/><stop offset="0.154" stop-color="#0400ff"/><stop offset="0.231" stop-color="#1000ff"/><stop offset="0.308" stop-color="#1d00ff"/><stop offset="0.385" stop-color="#2a00ff"/><stop offset="0.462" stop-color="#3700ff"/><stop offset="0.538" stop-color="#4400ff"/><stop offset="0.615" stop-color="#5100ff"/><stop offset="0.692" stop-color="#5f00ff"/><stop offset="0.769" stop-color="#6c00ff"/><stop offset="0.846" stop-color="#7a00ff"/><stop offset="0.923" stop-color="#8800ff"/><stop offset="1.000" stop-color="#9500ff"/></linearGradient><linearGradient id="c175" gradientUnits="userSpaceOnUse" x1="1102.5" x2="1292.4" y1="0" y2="0"><stop offset="0.000" stop-color="#0000ff"/><stop offset="0.083" stop-color="#0000ff"/><stop offset="0.167" stop-color="#0600ff"/><stop offset="0.250" stop-color="#1400ff"/><stop offset="0.333" stop-color="#2100ff"/><stop offset="0.417" stop-color="#2f00ff"/><stop offset="0.500" stop-color="#3d00ff"/><stop offset="0.583" stop-color="#4b00ff"/><stop offset="0.667" stop-color="#5900ff"/><stop offset="0.750" stop-color="#6700ff"/><stop offset="0.833" stop-color="#7500ff"/><stop offset="0.917" stop-color="#8400ff"/><stop offset="1.000" stop-color="#9200ff"/></linearGradient><linearGradient id="c176" gradientUnits="userSpaceOnUse" x1="1104.2" x2="1290.5" y1="0" y2="0"><stop offset="0.000" stop-color="#0000ff"/><stop offset="0.083" stop-color="#0000ff"/><stop offset="0.167" stop-color="#0700ff"/><stop offset="0.250" stop-color="#1400ff"/><stop offset="0.333" stop-color="#2100ff"/><stop offset="0.417" stop-color="#2f00ff"/><stop offset="0.500" stop-color="#3c00ff"/><stop offset="0.583" stop-color="#4a00ff"/><stop offset="0.667" stop-color="#5700ff"/><stop offset="0.750" stop-color="#6500ff"/><stop offset="0.833" stop-color="#7300ff"/><stop offset="0.917" stop-color="#8100ff"/><stop offset="1.000" stop-color="#8f00ff"/></linearGradient><linearGradient id="c177" gradientUnits="userSpaceOnUse" x1="1105.8" x2="1288.6" y1="0" y2="0"><stop offset="0.000" stop-color="#0000ff"/><stop offset="0.083" stop-color="#0000ff"/><stop offset="0.167" stop-color="#0800ff"/><stop offset="0.250" stop-color="#1400ff"/><stop offset="0.333" stop-color="#2100ff"/><stop offset="0.417" stop-color="#2e00ff"/><stop offset="0.500" stop-color="#3b00ff"/><stop offset="0.583" stop-color="#4800ff"/><stop offset="0.667" stop-color="#5600ff"/><stop offset="0.750" stop-color="#6300ff"/><stop offset="0.833" stop-color="#7100ff"/><stop offset="0.917" stop-color="#7f00ff"/><stop offset="1.000" stop-color="#8c00ff"/></linearGradient><linearGradient id="c178" gradientUnits="userSpaceOnUse" x1="1107.5" x2="1286.6" y1="0" y2="0"><stop offset="0.000" stop-color="#0000ff"/><stop offset="0.083" stop-color="#0000ff"/><stop offset="0.167" stop-color="#0800ff"/><stop offset="0.250" stop-color="#1500ff"/><stop offset="0.333" stop-color="#2100ff"/><stop offset="0.417" stop-color="#2e00ff"/><stop offset="0.500" stop-color="#3b00ff"/><stop offset="0.583" stop-color="#4700ff"/><stop offset="0.667" stop-color="#5400ff"/><stop offset="0.750" stop-color="#6100ff"/><stop offset="0.833" stop-color="#6f00ff"/><stop offset="0.917" stop-color="#7c00ff"/><stop offset="1.000" stop-color="#8a00ff"/></linearGradient><linearGradient id="c179" gradientUnits="userSpaceOnUse" x1="1109.1" x2="1284.7" y1="0" y2="0"><stop offset="0.000" stop-color="#0000ff"/><stop offset="0.091" stop-color="#0000ff"/><stop offset="0.182" stop-color="#0b00ff"/><stop offset="0.273" stop-color="#1800ff"/><stop offset="0.364" stop-color="#2500ff"/><stop offset="0.455" stop-color="#3300ff"/><stop offset="0.545" stop-color="#4100ff"/><stop offset="0.636" stop-color="#4e00ff"/><stop offset="0.727" stop-color="#5c00ff"/><stop offset="0.818" stop-color="#6a00ff"/><stop offset="0.909" stop-color="#7800ff"/><stop offset="1.000" stop-color="#8700ff"/></linearGradient><linearGradient id="c180" gradientUnits="userSpaceOnUse" x1="1110.8" x2="1282.7" y1="0" y2="0"><stop offset="0.000" stop-color="#0000ff"/><stop offset="0.091" stop-color="#0000ff"/><stop offset="0.182" stop-color="#0b00ff"/><stop offset="0.273" stop-color="#1800ff"/><stop offset="0.364" stop-color="#2500ff"/><stop offset="0.455" stop-color="#3200ff"/><stop offset="0.545" stop-color="#4000ff"/><stop offset="0.636" stop-color="#4d00ff"/><stop offset="0.727" stop-color="#5b00ff"/><stop offset="0.818" stop-color="#6800ff"/><stop offset="0.909" stop-color="#7600ff"/><stop offset="1.000" stop-color="#8400ff"/></linearGradient><linearGradient id="c181" gradientUnits="userSpaceOnUse" x1="1112.4" x2="1280.8" y1="0" y2="0"><stop offset="0.000" stop-color="#0000ff"/><stop offset="0.091" stop-color="#0000ff"/><stop offset="0.182" stop-color="#0c00ff"/><stop offset="0.273" stop-color="#1800ff"/><stop offset="0.364" stop-color="#2500ff"/><stop offset="0.455" stop-color="#3200ff"/><stop offset="0.545" stop-color="#3f00ff"/><stop offset="0.636" stop-color="#4c00ff"/><stop offset="0.727" stop-color="#5900ff"/><stop offset="0.818" stop-color="#6600ff"/><stop offset="0.909" stop-color="#7400ff"/><stop offset="1.000" stop-color="#8100ff"/></linearGradient><linearGradient id="c182" gradientUnits="userSpaceOnUse" x1="1114.1" x2="1278.9" y1="0" y2="0"><stop offset="0.000" stop-color="#0000ff"/><stop offset="0.091" stop-color="#0000ff"/><stop offset="0.182" stop-color="#0c00ff"/><stop offset="0.273" stop-color="#1900ff"/><stop offset="0.364" stop-color="#2500ff"/><stop offset="0.455" stop-color="#3100ff"/><stop offset="0.545" stop-color="#3e00ff"/><stop offset="0.636" stop-color="#4b00ff"/><stop offset="0.727" stop-color="#5700ff"/><stop offset="0.818" stop-color="#6400ff"/><stop offset="0.909" stop-color="#7100ff"/><stop offset="1.000" stop-color="#7e00ff"/></linearGradient><linearGradient id="c183" gradientUnits="userSpaceOnUse" x1="1115.7" x2="1276.9" y1="0" y2="0"><stop offset="0.000" stop-color="#0000ff"/><stop offset="0.091" stop-color="#0100ff"/><stop offset="0.182" stop-color="#0d00ff"/><stop offset="0.273" stop-color="#1900ff"/><stop offset="0.364" stop-color="#2500ff"/><stop offset="0.455" stop-color="#3100ff"/><stop offset="0.545" stop-color="#3d00ff"/><stop offset="0.636" stop-color="#4900ff"/><stop offset="0.727" stop-color="#5600ff"/><stop offset="0.818" stop-color="#6200ff"/><stop offset="0.909" stop-color="#6f00ff"/><stop offset="1.000" stop-color="#7c00ff"/></linearGradient><linearGradient id="c184" gradientUnits="userSpaceOnUse" x1="1117.6" x2="1275.0" y1="0" y2="0"><stop offset="0.000" stop-color="#0000ff"/><stop offset="0.100" stop-color="#0300ff"/><stop offset="0.200" stop-color="#1000ff"/><stop offset="0.300" stop-color="#1c00ff"/><stop offset="0.400" stop-color="#2900ff"/><stop offset="0.500" stop-color="#3600ff"/><stop offset="0.600" stop-color="#4300ff"/><stop offset="0.700" stop-color="#5100ff"/><stop offset="0.800" stop-color="#5e00ff"/><stop offset="0.900" stop-color="#6b00ff"/><stop offset="1.000" stop-color="#7900ff"/></linearGradient><linearGradient id="c185" gradientUnits="userSpaceOnUse" x1="1119.6" x2="1273.1" y1="0" y2="0"><stop offset="0.000" stop-color="#0000ff"/><stop offset="0.100" stop-color="#0400ff"/><stop offset="0.200" stop-color="#1000ff"/><stop offset="0.300" stop-color="#1d00ff"/><stop offset="0.400" stop-color="#2900ff"/><stop offset="0.500" stop-color="#3600ff"/><stop offset="0.600" stop-color="#4200ff"/><stop offset="0.700" stop-color="#4f00ff"/><stop offset="0.800" stop-color="#5c00ff"/><stop offset="0.900" stop-color="#6900ff"/><stop offset="1.000" stop-color="#7600ff"/></linearGradient><linearGradient id="c186" gradientUnits="userSpaceOnUse" x1="1121.6" x2="1271.1" y1="0" y2="0"><stop offset="0.000" stop-color="#0000ff"/><stop offset="0.100" stop-color="#0500ff"/><stop offset="0.200" stop-color="#1100ff"/><stop offset="0.300" stop-color="#1d00ff"/><stop offset="0.400" stop-color="#2900ff"/><stop offset="0.500" stop-color="#3500ff"/><stop offset="0.600" stop-color="#4100ff"/><stop offset="0.700" stop-color="#4e00ff"/><stop offset="0.800" stop-color="#5a00ff"/><stop offset="0.900" stop-color="#6700ff"/><stop offset="1.000" stop-color="#7400ff"/></linearGradient><linearGradient id="c187" gradientUnits="userSpaceOnUse" x1="1123.5" x2="1269.2" y1="0" y2="0"><stop offset="0.000" stop-color="#0000ff"/><stop offset="0.100" stop-color="#0600ff"/><stop offset="0.200" stop-color="#1100ff"/><stop offset="0.300" stop-color="#1d00ff"/><stop offset="0.400" stop-color="#2900ff"/><stop offset="0.500" stop-color="#3500ff"/><stop offset="0.600" stop-color="#4000ff"/><stop offset="0.700" stop-color="#4c00ff"/><stop offset="0.800" stop-color="#5900ff"/><stop offset="0.900" stop-color="#6500ff"/><stop offset="1.000" stop-color="#7100ff"/></linearGradient><linearGradient id="c188" gradientUnits="userSpaceOnUse" x1="1125.5" x2="1267.2" y1="0" y2="0"><stop offset="0.000" stop-color="#0000ff"/><stop offset="0.111" stop-color="#0800ff"/><stop offset="0.222" stop-color="#1500ff"/><stop offset="0.333" stop-color="#2100ff"/><stop offset="0.444" stop-color="#2e00ff"/><stop offset="0.556" stop-color="#3a00ff"/><stop offset="0.667" stop-color="#4700ff"/><stop offset="0.778" stop-color="#5400ff"/><stop offset="0.889" stop-color="#6100ff"/><stop offset="1.000" stop-color="#6e00ff"/></linearGradient><linearGradient id="c189" gradientUnits="userSpaceOnUse" x1="1127.4" x2="1265.3" y1="0" y2="0"><stop offset="0.000" stop-color="#0000ff"/><stop offset="0.111" stop-color="#0900ff"/><stop offset="0.222" stop-color="#1500ff"/><stop offset="0.333" stop-color="#2100ff"/><stop offset="0.444" stop-color="#2d00ff"/><stop offset="0.556" stop-color="#3a00ff"/><stop offset="0.667" stop-color="#4600ff"/><stop offset="0.778" stop-color="#5300ff"/><stop offset="0.889" stop-color="#5f00ff"/><stop offset="1.000" stop-color="#6c00ff"/></linearGradient><linearGradient id="c190" gradientUnits="userSpaceOnUse" x1="1129.4" x2="1263.4" y1="0" y2="0"><stop offset="0.000" stop-color="#0000ff"/><stop offset="0.111" stop-color="#0a00ff"/><stop offset="0.222" stop-color="#1600ff"/><stop offset="0.333" stop-color="#2100ff"/><stop offset="0.444" stop-color="#2d00ff"/><stop offset="0.556" stop-color="#3900ff"/><stop offset="0.667" stop-color="#4500ff"/><stop offset="0.778" stop-color="#5100ff"/><stop offset="0.889" stop-color="#5d00ff"/><stop offset="1.000" stop-color="#6900ff"/></linearGradient><linearGradient id="c191" gradientUnits="userSpaceOnUse" x1="1131.3" x2="1261.4" y1="0" y2="0"><stop offset="0.000" stop-color="#0000ff"/><stop offset="0.111" stop-color="#0b00ff"/><stop offset="0.222" stop-color="#1600ff"/><stop offset="0.333" stop-color="#2100ff"/><stop offset="0.444" stop-color="#2d00ff"/><stop offset="0.556" stop-color="#3800ff"/><stop offset="0.667" stop-color="#4400ff"/><stop offset="0.778" stop-color="#4f00ff"/><stop offset="0.889" stop-color="#5b00ff"/><stop offset="1.000" stop-color="#6700ff"/></linearGradient><linearGradient id="c192" gradientUnits="userSpaceOnUse" x1="1133.3" x2="1259.5" y1="0" y2="0"><stop offset="0.000" stop-color="#0100ff"/><stop offset="0.125" stop-color="#0d00ff"/><stop offset="0.250" stop-color="#1900ff"/><stop offset="0.375" stop-color="#2500ff"/><stop offset="0.500" stop-color="#3200ff"/><stop offset="0.625" stop-color="#3e00ff"/><stop offset="0.750" stop-color="#4b00ff"/><stop offset="0.875" stop-color="#5800ff"/><stop offset="1.000" stop-color="#6500ff"/></linearGradient><linearGradient id="c193" gradientUnits="userSpaceOnUse" x1="1135.3" x2="1257.6" y1="0" y2="0"><stop offset="0.000" stop-color="#0200ff"/><stop offset="0.125" stop-color="#0e00ff"/><stop offset="0.250" stop-color="#1a00ff"/><stop offset="0.375" stop-color="#2500ff"/><stop offset="0.500" stop-color="#3100ff"/><stop offset="0.625" stop-color="#3d00ff"/><stop offset="0.750" stop-color="#4a00ff"/><stop offset="0.875" stop-color="#5600ff"/><stop offset="1.000" stop-color="#6200ff"/></linearGradient><linearGradient id="c194" gradientUnits="userSpaceOnUse" x1="1137.5" x2="1255.6" y1="0" y2="0"><stop offset="0.000" stop-color="#0400ff"/><stop offset="0.125" stop-color="#0f00ff"/><stop offset="0.250" stop-color="#1a00ff"/><stop offset="0.375" stop-color="#2600ff"/><stop offset="0.500" stop-color="#3100ff"/><stop offset="0.625" stop-color="#3d00ff"/><stop offset="0.750" stop-color="#4800ff"/><stop offset="0.875" stop-color="#5400ff"/><stop offset="1.000" stop-color="#6000ff"/></linearGradient><linearGradient id="c195" gradientUnits="userSpaceOnUse" x1="1139.7" x2="1253.7" y1="0" y2="0"><stop offset="0.000" stop-color="#0500ff"/><stop offset="0.125" stop-color="#1000ff"/><stop offset="0.250" stop-color="#1b00ff"/><stop offset="0.375" stop-color="#2600ff"/><stop offset="0.500" stop-color="#3100ff"/><stop offset="0.625" stop-color="#3c00ff"/><stop offset="0.750" stop-color="#4700ff"/><stop offset="0.875" stop-color="#5200ff"/><stop offset="1.000" stop-color="#5d00ff"/></linearGradient><linearGradient id="c196" gradientUnits="userSpaceOnUse" x1="1141.9" x2="1251.7" y1="0" y2="0"><stop offset="0.000" stop-color="#0600ff"/><stop offset="0.143" stop-color="#1200ff"/><stop offset="0.286" stop-color="#1e00ff"/><stop offset="0.429" stop-color="#2a00ff"/><stop offset="0.571" stop-color="#3600ff"/><stop offset="0.714" stop-color="#4200ff"/><stop offset="0.857" stop-color="#4f00ff"/><stop offset="1.000" stop-color="#5b00ff"/></linearGradient><linearGradient id="c197" gradientUnits="userSpaceOnUse" x1="1144.1" x2="1249.8" y1="0" y2="0"><stop offset="0.000" stop-color="#0800ff"/><stop offset="0.143" stop-color="#1300ff"/><stop offset="0.286" stop-color="#1e00ff"/><stop offset="0.429" stop-color="#2a00ff"/><stop offset="0.571" stop-color="#3600ff"/><stop offset="0.714" stop-color="#4100ff"/><stop offset="0.857" stop-color="#4d00ff"/><stop offset="1.000" stop-color="#5900ff"/></linearGradient><linearGradient id="c198" gradientUnits="userSpaceOnUse" x1="1146.4" x2="1247.9" y1="0" y2="0"><stop offset="0.000" stop-color="#0900ff"/><stop offset="0.143" stop-color="#1400ff"/><stop offset="0.286" stop-color="#1f00ff"/><stop offset="0.429" stop-color="#2a00ff"/><stop offset="0.571" stop-color="#3500ff"/><stop offset="0.714" stop-color="#4000ff"/><stop offset="0.857" stop-color="#4b00ff"/><stop offset="1.000" stop-color="#5700ff"/></linearGradient><linearGradient id="c199" gradientUnits="userSpaceOnUse" x1="1148.6" x2="1245.9" y1="0" y2="0"><stop offset="0.000" stop-color="#0a00ff"/><stop offset="0.143" stop-color="#1500ff"/><stop offset="0.286" stop-color="#1f00ff"/><stop offset="0.429" stop-color="#2a00ff"/><stop offset="0.571" stop-color="#3400ff"/><stop offset="0.714" stop-color="#3f00ff"/><stop offset="0.857" stop-color="#4a00ff"/><stop offset="1.000" stop-color="#5400ff"/></linearGradient><linearGradient id="c200" gradientUnits="userSpaceOnUse" x1="1150.8" x2="1244.0" y1="0" y2="0"><stop offset="0.000" stop-color="#0c00ff"/><stop offset="0.167" stop-color="#1700ff"/><stop offset="0.333" stop-color="#2300ff"/><stop offset="0.500" stop-color="#2f00ff"/><stop offset="0.667" stop-color="#3a00ff"/><stop offset="0.833" stop-color="#4600ff"/><stop offset="1.000" stop-color="#5200ff"/></linearGradient><linearGradient id="c201" gradientUnits="userSpaceOnUse" x1="1153.2" x2="1242.1" y1="0" y2="0"><stop offset="0.000" stop-color="#0d00ff"/><stop offset="0.167" stop-color="#1800ff"/><stop offset="0.333" stop-color="#2300ff"/><stop offset="0.500" stop-color="#2e00ff"/><stop offset="0.667" stop-color="#3900ff"/><stop offset="0.833" stop-color="#4500ff"/><stop offset="1.000" stop-color="#5000ff"/></linearGradient><linearGradient id="c202" gradientUnits="userSpaceOnUse" x1="1155.6" x2="1240.1" y1="0" y2="0"><stop offset="0.000" stop-color="#0f00ff"/><stop offset="0.167" stop-color="#1900ff"/><stop offset="0.333" stop-color="#2300ff"/><stop offset="0.500" stop-color="#2e00ff"/><stop offset="0.667" stop-color="#3800ff"/><stop offset="0.833" stop-color="#4300ff"/><stop offset="1.000" stop-color="#4e00ff"/></linearGradient><linearGradient id="c203" gradientUnits="userSpaceOnUse" x1="1158.0" x2="1238.2" y1="0" y2="0"><stop offset="0.000" stop-color="#1000ff"/><stop offset="0.167" stop-color="#1a00ff"/><stop offset="0.333" stop-color="#2400ff"/><stop offset="0.500" stop-color="#2e00ff"/><stop offset="0.667" stop-color="#3800ff"/><stop offset="0.833" stop-color="#4200ff"/><stop offset="1.000" stop-color="#4c00ff"/></linearGradient><linearGradient id="c204" gradientUnits="userSpaceOnUse" x1="1160.3" x2="1236.3" y1="0" y2="0"><stop offset="0.000" stop-color="#1200ff"/><stop offset="0.200" stop-color="#1d00ff"/><stop offset="0.400" stop-color="#2800ff"/><stop offset="0.600" stop-color="#3300ff"/><stop offset="0.800" stop-color="#3e00ff"/><stop offset="1.000" stop-color="#4a00ff"/></linearGradient><linearGradient id="c205" gradientUnits="userSpaceOnUse" x1="1162.7" x2="1234.3" y1="0" y2="0"><stop offset="0.000" stop-color="#1300ff"/><stop offset="0.200" stop-color="#1d00ff"/><stop offset="0.400" stop-color="#2800ff"/><stop offset="0.600" stop-color="#3200ff"/><stop offset="0.800" stop-color="#3d00ff"/><stop offset="1.000" stop-color="#4800ff"/></linearGradient><linearGradient id="c206" gradientUnits="userSpaceOnUse" x1="1165.1" x2="1232.4" y1="0" y2="0"><stop offset="0.000" stop-color="#1400ff"/><stop offset="0.200" stop-color="#1e00ff"/><stop offset="0.400" stop-color="#2800ff"/><stop offset="0.600" stop-color="#3200ff"/><stop offset="0.800" stop-color="#3c00ff"/><stop offset="1.000" stop-color="#4500ff"/></linearGradient><linearGradient id="c207" gradientUnits="userSpaceOnUse" x1="1167.6" x2="1230.4" y1="0" y2="0"><stop offset="0.000" stop-color="#1600ff"/><stop offset="0.250" stop-color="#2100ff"/><stop offset="0.500" stop-color="#2c00ff"/><stop offset="0.750" stop-color="#3800ff"/><stop offset="1.000" stop-color="#4300ff"/></linearGradient><linearGradient id="c208" gradientUnits="userSpaceOnUse" x1="1170.0" x2="1228.5" y1="0" y2="0"><stop offset="0.000" stop-color="#1700ff"/><stop offset="0.250" stop-color="#2200ff"/><stop offset="0.500" stop-color="#2c00ff"/><stop offset="0.750" stop-color="#3700ff"/><stop offset="1.000" stop-color="#4100ff"/></linearGradient><linearGradient id="c209" gradientUnits="userSpaceOnUse" x1="1172.4" x2="1226.6" y1="0" y2="0"><stop offset="0.000" stop-color="#1900ff"/><stop offset="0.250" stop-color="#2200ff"/><stop offset="0.500" stop-color="#2c00ff"/><stop offset="0.750" stop-color="#3600ff"/><stop offset="1.000" stop-color="#3f00ff"/></linearGradient><linearGradient id="c210" gradientUnits="userSpaceOnUse" x1="1174.8" x2="1224.6" y1="0" y2="0"><stop offset="0.000" stop-color="#1a00ff"/><stop offset="0.250" stop-color="#2300ff"/><stop offset="0.500" stop-color="#2c00ff"/><stop offset="0.750" stop-color="#3500ff"/><stop offset="1.000" stop-color="#3d00ff"/></linearGradient><linearGradient id="c211" gradientUnits="userSpaceOnUse" x1="1177.3" x2="1222.7" y1="0" y2="0"><stop offset="0.000" stop-color="#1b00ff"/><stop offset="0.333" stop-color="#2600ff"/><stop offset="0.667" stop-color="#3100ff"/><stop offset="1.000" stop-color="#3c00ff"/></linearGradient><linearGradient id="c212" gradientUnits="userSpaceOnUse" x1="1179.7" x2="1220.8" y1="0" y2="0"><stop offset="0.000" stop-color="#1d00ff"/><stop offset="0.333" stop-color="#2600ff"/><stop offset="0.667" stop-color="#3000ff"/><stop offset="1.000" stop-color="#3a00ff"/></linearGradient><linearGradient id="c213" gradientUnits="userSpaceOnUse" x1="1182.0" x2="1218.8" y1="0" y2="0"><stop offset="0.000" stop-color="#1e00ff"/><stop offset="0.333" stop-color="#2600ff"/><stop offset="0.667" stop-color="#2f00ff"/><stop offset="1.000" stop-color="#3800ff"/></linearGradient><linearGradient id="c214" gradientUnits="userSpaceOnUse" x1="1184.4" x2="1216.9" y1="0" y2="0"><stop offset="0.000" stop-color="#1f00ff"/><stop offset="0.333" stop-color="#2700ff"/><stop offset="0.667" stop-color="#2e00ff"/><stop offset="1.000" stop-color="#3600ff"/></linearGradient><linearGradient id="c215" gradientUnits="userSpaceOnUse" x1="1186.7" x2="1214.9" y1="0" y2="0"><stop offset="0.000" stop-color="#2000ff"/><stop offset="0.500" stop-color="#2a00ff"/><stop offset="1.000" stop-color="#3400ff"/></linearGradient><linearGradient id="c216" gradientUnits="userSpaceOnUse" x1="1189.1" x2="1213.0" y1="0" y2="0"><stop offset="0.000" stop-color="#2200ff"/><stop offset="0.500" stop-color="#2a00ff"/><stop offset="1.000" stop-color="#3200ff"/></linearGradient><linearGradient id="c217" gradientUnits="userSpaceOnUse" x1="1191.6" x2="1211.1" y1="0" y2="0"><stop offset="0.000" stop-color="#2300ff"/><stop offset="0.500" stop-color="#2a00ff"/><stop offset="1.000" stop-color="#3000ff"/></linearGradient><linearGradient id="c218" gradientUnits="userSpaceOnUse" x1="1194.1" x2="1209.1" y1="0" y2="0"><stop offset="0.000" stop-color="#2400ff"/><stop offset="1.000" stop-color="#2f00ff"/></linearGradient><linearGradient id="c219" gradientUnits="userSpaceOnUse" x1="1196.7" x2="1207.2" y1="0" y2="0"><stop offset="0.000" stop-color="#2600ff"/><stop offset="1.000" stop-color="#2d00ff"/></linearGradient><linearGradient id="c220" gradientUnits="userSpaceOnUse" x1="1200.0" x2="1204.8" y1="0" y2="0"><stop offset="0.000" stop-color="#2700ff"/><stop offset="1.000" stop-color="#2b00ff"/></linearGradient><linearGradient id="in1" gradientUnits="userSpaceOnUse" x1="1345" y1="390" x2="1541" y2="510.3"><stop offset="0" stop-color="#aaff00"/><stop offset="0.474" stop-color="#ffff14"/><stop offset="1" stop-color="#ffae00"/></linearGradient><linearGradient id="bbg" x1="0" y1="0" x2="0" y2="1"><stop offset="0" stop-color="#4a4a4a"/><stop offset="1" stop-color="#2a2a2a"/></linearGradient><linearGradient id="tab" x1="0" y1="0" x2="0" y2="1"><stop offset="0" stop-color="#ababab"/><stop offset="1" stop-color="#585858"/></linearGradient><linearGradient id="tabs" x1="0" y1="0" x2="0" y2="1"><stop offset="0" stop-color="#1a1a1a"/><stop offset="1" stop-color="#3c3c3c"/></linearGradient><linearGradient id="circ" x1="0" y1="0" x2="0" y2="1"><stop offset="0" stop-color="#6c6c6c"/><stop offset="1" stop-color="#9a9a9a"/></linearGradient><linearGradient id="t2" x1="0" y1="0" x2="0" y2="1"><stop offset="0" stop-color="#aaaaaa"/><stop offset="1" stop-color="#8c8c8c"/></linearGradient><linearGradient id="t3" x1="0" y1="0" x2="0" y2="1"><stop offset="0" stop-color="#909090"/><stop offset="1" stop-color="#686868"/></linearGradient><linearGradient id="stp" x1="0" y1="0" x2="0" y2="1"><stop offset="0" stop-color="#ababab"/><stop offset="0.5" stop-color="#a0a0a0"/><stop offset="0.5" stop-color="#808080"/><stop offset="1" stop-color="#808080"/></linearGradient><linearGradient id="btn" x1="0" y1="0" x2="0" y2="1"><stop offset="0" stop-color="#a4a4a4"/><stop offset="1" stop-color="#565656"/></linearGradient><linearGradient id="circ2" x1="0" y1="0" x2="0" y2="1"><stop offset="0" stop-color="#6e6e6e"/><stop offset="1" stop-color="#a4a4a4"/></linearGradient><linearGradient id="dk" x1="0" y1="0" x2="0" y2="1"><stop offset="0" stop-color="#3a3a3a"/><stop offset="1" stop-color="#202020"/></linearGradient><linearGradient id="dkc" x1="0" y1="0" x2="0" y2="1"><stop offset="0" stop-color="#282828"/><stop offset="1" stop-color="#3a3a3a"/></linearGradient><linearGradient id="nav" x1="0" y1="0" x2="0" y2="1"><stop offset="0" stop-color="#b4b4b4"/><stop offset="1" stop-color="#868686"/></linearGradient><linearGradient id="circ3" x1="0" y1="0" x2="0" y2="1"><stop offset="0" stop-color="#7c7c7c"/><stop offset="1" stop-color="#b0b0b0"/></linearGradient>
</defs>
<rect width="1552" height="852" fill="#323232"/>
<text x="1.2" y="60" font-size="38.4" fill="#f4f4f4" textLength="311.5" lengthAdjust="spacingAndGlyphs" stroke="#323232" stroke-width="0.9">Saturation Sweeps</text>
<text x="110" y="110.75" font-size="18" fill="#f0f0f0" textLength="101" lengthAdjust="spacingAndGlyphs">dE Formula:</text>
<rect x="218.2" y="92.3" width="125.8" height="22.6" fill="url(#dd)" stroke="#2a2a2a" stroke-width="1"/>
<text x="222.6" y="111" font-size="16.6" fill="#f2f2f2" textLength="32.5" lengthAdjust="spacingAndGlyphs">2000</text>
<path d="M330 101.1h9l-4.5 5.5z" fill="#0a0a0a"/>
<text x="518" y="53" font-size="18.2" fill="#f0f0f0" textLength="56.5" lengthAdjust="spacingAndGlyphs">Levels:</text>
<rect x="581.7" y="34.1" width="317.4" height="24" fill="url(#dd)" stroke="#2a2a2a" stroke-width="1"/>
<text x="586.75" y="53.25" font-size="16.6" fill="#f2f2f2" textLength="83" lengthAdjust="spacingAndGlyphs">20% Sweeps</text>
<path d="M886 43.6h9l-4.5 5.5z" fill="#0a0a0a"/>
<text x="163.25" y="141" font-size="12.8" fill="#d6d6d6" text-anchor="middle" textLength="74.5" lengthAdjust="spacingAndGlyphs">DeltaE 2000</text>
<rect x="33.5" y="145.5" width="293.0" height="362.0" fill="#232323"/>
<path d="M72.50 145.5V507.5M112.50 145.5V507.5M150.50 145.5V507.5M189.50 145.5V507.5M228.50 145.5V507.5M267.50 145.5V507.5M306.50 145.5V507.5" stroke="#8a8a8a" stroke-width="1" fill="none"/>
<path d="M33.5 145.5H326.5V507.5" stroke="#8a8a8a" stroke-width="1" fill="none"/>
<rect x="34.5" y="151.80" width="33.00" height="5.3" fill="url(#b0)" stroke="#000" stroke-width="1"/><rect x="35.0" y="152.30" width="32.00" height="4.3" fill="url(#cyl)"/>
<rect x="34.5" y="158.22" width="14.50" height="5.3" fill="url(#b1)" stroke="#000" stroke-width="1"/><rect x="35.0" y="158.72" width="13.50" height="4.3" fill="url(#cyl)"/>
<rect x="34.5" y="164.64" width="99.25" height="5.3" fill="url(#b2)" stroke="#000" stroke-width="1"/><rect x="35.0" y="165.14" width="98.25" height="4.3" fill="url(#cyl)"/>
<rect x="34.5" y="171.06" width="20.50" height="5.3" fill="url(#b3)" stroke="#000" stroke-width="1"/><rect x="35.0" y="171.56" width="19.50" height="4.3" fill="url(#cyl)"/>
<rect x="34.5" y="177.48" width="25.50" height="5.3" fill="url(#b4)" stroke="#000" stroke-width="1"/><rect x="35.0" y="177.98" width="24.50" height="4.3" fill="url(#cyl)"/>
<rect x="34.5" y="183.90" width="34.50" height="5.3" fill="url(#b5)" stroke="#000" stroke-width="1"/><rect x="35.0" y="184.40" width="33.50" height="4.3" fill="url(#cyl)"/>
<rect x="34.5" y="212.10" width="30.00" height="5.3" fill="url(#b6)" stroke="#000" stroke-width="1"/><rect x="35.0" y="212.60" width="29.00" height="4.3" fill="url(#cyl)"/>
<rect x="34.5" y="218.52" width="5.75" height="5.3" fill="url(#b7)" stroke="#000" stroke-width="1"/><rect x="35.0" y="219.02" width="4.75" height="4.3" fill="url(#cyl)"/>
<rect x="34.5" y="224.94" width="70.00" height="5.3" fill="url(#b8)" stroke="#000" stroke-width="1"/><rect x="35.0" y="225.44" width="69.00" height="4.3" fill="url(#cyl)"/>
<rect x="34.5" y="231.36" width="20.75" height="5.3" fill="url(#b9)" stroke="#000" stroke-width="1"/><rect x="35.0" y="231.86" width="19.75" height="4.3" fill="url(#cyl)"/>
<rect x="34.5" y="237.78" width="18.75" height="5.3" fill="url(#b10)" stroke="#000" stroke-width="1"/><rect x="35.0" y="238.28" width="17.75" height="4.3" fill="url(#cyl)"/>
<rect x="34.5" y="244.20" width="33.75" height="5.3" fill="url(#b11)" stroke="#000" stroke-width="1"/><rect x="35.0" y="244.70" width="32.75" height="4.3" fill="url(#cyl)"/>
<rect x="34.5" y="272.20" width="25.00" height="5.3" fill="url(#b12)" stroke="#000" stroke-width="1"/><rect x="35.0" y="272.70" width="24.00" height="4.3" fill="url(#cyl)"/>
<rect x="34.5" y="278.62" width="9.75" height="5.3" fill="url(#b13)" stroke="#000" stroke-width="1"/><rect x="35.0" y="279.12" width="8.75" height="4.3" fill="url(#cyl)"/>
<rect x="34.5" y="285.04" width="57.00" height="5.3" fill="url(#b14)" stroke="#000" stroke-width="1"/><rect x="35.0" y="285.54" width="56.00" height="4.3" fill="url(#cyl)"/>
<rect x="34.5" y="291.46" width="18.75" height="5.3" fill="url(#b15)" stroke="#000" stroke-width="1"/><rect x="35.0" y="291.96" width="17.75" height="4.3" fill="url(#cyl)"/>
<rect x="34.5" y="297.88" width="17.50" height="5.3" fill="url(#b16)" stroke="#000" stroke-width="1"/><rect x="35.0" y="298.38" width="16.50" height="4.3" fill="url(#cyl)"/>
<rect x="34.5" y="304.30" width="31.75" height="5.3" fill="url(#b17)" stroke="#000" stroke-width="1"/><rect x="35.0" y="304.80" width="30.75" height="4.3" fill="url(#cyl)"/>
<rect x="34.5" y="334.00" width="21.00" height="5.3" fill="url(#b18)" stroke="#000" stroke-width="1"/><rect x="35.0" y="334.50" width="20.00" height="4.3" fill="url(#cyl)"/>
<rect x="34.5" y="340.42" width="10.75" height="5.3" fill="url(#b19)" stroke="#000" stroke-width="1"/><rect x="35.0" y="340.92" width="9.75" height="4.3" fill="url(#cyl)"/>
<rect x="34.5" y="346.84" width="39.00" height="5.3" fill="url(#b20)" stroke="#000" stroke-width="1"/><rect x="35.0" y="347.34" width="38.00" height="4.3" fill="url(#cyl)"/>
<rect x="34.5" y="353.26" width="15.75" height="5.3" fill="url(#b21)" stroke="#000" stroke-width="1"/><rect x="35.0" y="353.76" width="14.75" height="4.3" fill="url(#cyl)"/>
<rect x="34.5" y="359.68" width="24.00" height="5.3" fill="url(#b22)" stroke="#000" stroke-width="1"/><rect x="35.0" y="360.18" width="23.00" height="4.3" fill="url(#cyl)"/>
<rect x="34.5" y="366.10" width="29.00" height="5.3" fill="url(#b23)" stroke="#000" stroke-width="1"/><rect x="35.0" y="366.60" width="28.00" height="4.3" fill="url(#cyl)"/>
<rect x="34.5" y="393.90" width="20.00" height="5.3" fill="url(#b24)" stroke="#000" stroke-width="1"/><rect x="35.0" y="394.40" width="19.00" height="4.3" fill="url(#cyl)"/>
<rect x="34.5" y="400.32" width="11.75" height="5.3" fill="url(#b25)" stroke="#000" stroke-width="1"/><rect x="35.0" y="400.82" width="10.75" height="4.3" fill="url(#cyl)"/>
<rect x="34.5" y="406.74" width="29.00" height="5.3" fill="url(#b26)" stroke="#000" stroke-width="1"/><rect x="35.0" y="407.24" width="28.00" height="4.3" fill="url(#cyl)"/>
<rect x="34.5" y="413.16" width="14.75" height="5.3" fill="url(#b27)" stroke="#000" stroke-width="1"/><rect x="35.0" y="413.66" width="13.75" height="4.3" fill="url(#cyl)"/>
<rect x="34.5" y="419.58" width="13.50" height="5.3" fill="url(#b28)" stroke="#000" stroke-width="1"/><rect x="35.0" y="420.08" width="12.50" height="4.3" fill="url(#cyl)"/>
<rect x="34.5" y="426.00" width="25.00" height="5.3" fill="url(#b29)" stroke="#000" stroke-width="1"/><rect x="35.0" y="426.50" width="24.00" height="4.3" fill="url(#cyl)"/>
<rect x="34.5" y="491.5" width="7" height="5" fill="#f4f4f4" stroke="#000" stroke-width="1"/>
<path d="M33.5 145.5V507.5H326.5" stroke="#a8a8a8" stroke-width="1" fill="none"/>
<path d="M28.5 145.75H33.5M28.5 207H33.5M28.5 267H33.5M28.5 326.75H33.5M28.5 387H33.5M28.5 448.25H33.5M28.5 507.5H33.5" stroke="#e0e0e0" stroke-width="1.5" fill="none"/>
<path d="M33.50 507.5v5M72.50 507.5v5M112.50 507.5v5M150.50 507.5v5M189.50 507.5v5M228.50 507.5v5M267.50 507.5v5M306.50 507.5v5" stroke="#e0e0e0" stroke-width="1.4" fill="none"/>
<text x="32.75" y="181.45" font-size="13" fill="#d6d6d6" text-anchor="end">100%</text>
<text x="32.75" y="241.2" font-size="13" fill="#d6d6d6" text-anchor="end">80%</text>
<text x="32.75" y="302.7" font-size="13" fill="#d6d6d6" text-anchor="end">60%</text>
<text x="32.75" y="363.45" font-size="13" fill="#d6d6d6" text-anchor="end">40%</text>
<text x="32.75" y="423.7" font-size="13" fill="#d6d6d6" text-anchor="end">20%</text>
<text x="32.75" y="484.2" font-size="13" fill="#d6d6d6" text-anchor="end">100</text>
<text x="32.7" y="528.25" font-size="13" fill="#d6d6d6" text-anchor="middle">0</text>
<text x="71.7" y="528.25" font-size="13" fill="#d6d6d6" text-anchor="middle">2</text>
<text x="111.7" y="528.25" font-size="13" fill="#d6d6d6" text-anchor="middle">4</text>
<text x="149.7" y="528.25" font-size="13" fill="#d6d6d6" text-anchor="middle">6</text>
<text x="188.7" y="528.25" font-size="13" fill="#d6d6d6" text-anchor="middle">8</text>
<text x="227.7" y="528.25" font-size="13" fill="#d6d6d6" text-anchor="middle">10</text>
<text x="266.7" y="528.25" font-size="13" fill="#d6d6d6" text-anchor="middle">12</text>
<text x="305.7" y="528.25" font-size="13" fill="#d6d6d6" text-anchor="middle">14</text>
<rect x="376.5" y="94.5" width="135.0" height="265.0" fill="#232323" stroke="#8a8a8a" stroke-width="1"/>
<path d="M376.5 96.50H511.5M376.5 139.50H511.5M376.5 184.50H511.5M376.5 228.50H511.5M376.5 272.50H511.5M376.5 316.50H511.5" stroke="#8a8a8a" stroke-width="1" fill="none"/>
<path d="M371.5 96.50H376.5M371.5 139.50H376.5M371.5 184.50H376.5M371.5 228.50H376.5M371.5 272.50H376.5M371.5 316.50H376.5M371.5 359.50H376.5M376.5 359.5v6M511.5 359.5v6" stroke="#d8d8d8" stroke-width="1.3" fill="none"/>
<text x="370.7" y="101.30" font-size="13.5" fill="#d6d6d6" text-anchor="end">15</text>
<text x="370.7" y="144.30" font-size="13.5" fill="#d6d6d6" text-anchor="end">10</text>
<text x="370.7" y="189.30" font-size="13.5" fill="#d6d6d6" text-anchor="end">5</text>
<text x="370.7" y="233.30" font-size="13.5" fill="#d6d6d6" text-anchor="end">0</text>
<text x="370.7" y="277.30" font-size="13.5" fill="#d6d6d6" text-anchor="end">-5</text>
<text x="370.7" y="321.30" font-size="13.5" fill="#d6d6d6" text-anchor="end">-10</text>
<text x="370.7" y="364.30" font-size="13.5" fill="#d6d6d6" text-anchor="end">-15</text>
<text x="431.625" y="90.25" font-size="13" fill="#d6d6d6" text-anchor="middle" textLength="42.75" lengthAdjust="spacingAndGlyphs">Delta L</text>
<text x="444.0" y="375" font-size="13" fill="#d6d6d6" text-anchor="middle" textLength="33" lengthAdjust="spacingAndGlyphs">100%</text>
<rect x="390.5" y="222.5" width="106.75" height="4.75" fill="url(#yb)" stroke="#000" stroke-width="1"/>
<rect x="561.5" y="94.5" width="135.0" height="265.0" fill="#232323" stroke="#8a8a8a" stroke-width="1"/>
<path d="M561.5 96.50H696.5M561.5 139.50H696.5M561.5 184.50H696.5M561.5 228.50H696.5M561.5 272.50H696.5M561.5 316.50H696.5" stroke="#8a8a8a" stroke-width="1" fill="none"/>
<path d="M556.5 96.50H561.5M556.5 139.50H561.5M556.5 184.50H561.5M556.5 228.50H561.5M556.5 272.50H561.5M556.5 316.50H561.5M556.5 359.50H561.5M561.5 359.5v6M696.5 359.5v6" stroke="#d8d8d8" stroke-width="1.3" fill="none"/>
<text x="555.7" y="101.30" font-size="13.5" fill="#d6d6d6" text-anchor="end">15</text>
<text x="555.7" y="144.30" font-size="13.5" fill="#d6d6d6" text-anchor="end">10</text>
<text x="555.7" y="189.30" font-size="13.5" fill="#d6d6d6" text-anchor="end">5</text>
<text x="555.7" y="233.30" font-size="13.5" fill="#d6d6d6" text-anchor="end">0</text>
<text x="555.7" y="277.30" font-size="13.5" fill="#d6d6d6" text-anchor="end">-5</text>
<text x="555.7" y="321.30" font-size="13.5" fill="#d6d6d6" text-anchor="end">-10</text>
<text x="555.7" y="364.30" font-size="13.5" fill="#d6d6d6" text-anchor="end">-15</text>
<text x="616.375" y="90.25" font-size="13" fill="#d6d6d6" text-anchor="middle" textLength="44.25" lengthAdjust="spacingAndGlyphs">Delta C</text>
<text x="629.0" y="375" font-size="13" fill="#d6d6d6" text-anchor="middle" textLength="33" lengthAdjust="spacingAndGlyphs">100%</text>
<rect x="575.5" y="228.0" width="106.75" height="18.0" fill="url(#yb)" stroke="#000" stroke-width="1"/>
<rect x="746.5" y="94.5" width="136.0" height="265.0" fill="#232323" stroke="#8a8a8a" stroke-width="1"/>
<path d="M746.5 96.50H882.5M746.5 139.50H882.5M746.5 184.50H882.5M746.5 228.50H882.5M746.5 272.50H882.5M746.5 316.50H882.5" stroke="#8a8a8a" stroke-width="1" fill="none"/>
<path d="M741.5 96.50H746.5M741.5 139.50H746.5M741.5 184.50H746.5M741.5 228.50H746.5M741.5 272.50H746.5M741.5 316.50H746.5M741.5 359.50H746.5M746.5 359.5v6M882.5 359.5v6" stroke="#d8d8d8" stroke-width="1.3" fill="none"/>
<text x="740.7" y="101.30" font-size="13.5" fill="#d6d6d6" text-anchor="end">15</text>
<text x="740.7" y="144.30" font-size="13.5" fill="#d6d6d6" text-anchor="end">10</text>
<text x="740.7" y="189.30" font-size="13.5" fill="#d6d6d6" text-anchor="end">5</text>
<text x="740.7" y="233.30" font-size="13.5" fill="#d6d6d6" text-anchor="end">0</text>
<text x="740.7" y="277.30" font-size="13.5" fill="#d6d6d6" text-anchor="end">-5</text>
<text x="740.7" y="321.30" font-size="13.5" fill="#d6d6d6" text-anchor="end">-10</text>
<text x="740.7" y="364.30" font-size="13.5" fill="#d6d6d6" text-anchor="end">-15</text>
<text x="801.375" y="90.25" font-size="13" fill="#d6d6d6" text-anchor="middle" textLength="44.75" lengthAdjust="spacingAndGlyphs">Delta H</text>
<text x="814.5" y="375" font-size="13" fill="#d6d6d6" text-anchor="middle" textLength="33" lengthAdjust="spacingAndGlyphs">100%</text>
<rect x="761.25" y="228.0" width="105.75" height="28.0" fill="url(#yb)" stroke="#000" stroke-width="1"/>
<rect x="345" y="384" width="555.4" height="152.8" fill="#000"/>
<rect x="364" y="391" width="94" height="125" fill="#bebea4"/><rect x="364" y="391" width="94" height="61.2" fill="#c3c3a9"/>
<rect x="364.5" y="391.5" width="93" height="124" fill="none" stroke="#fafaf0" stroke-width="1"/>
<text x="411.0" y="530" font-size="11" fill="#fff" text-anchor="middle">20%</text>
<rect x="473" y="391" width="93" height="125" fill="#c0be86"/><rect x="473" y="391" width="93" height="61.2" fill="#c5c18a"/>
<rect x="473.5" y="391.5" width="92" height="124" fill="none" stroke="#fafaf0" stroke-width="1"/>
<text x="519.5" y="530" font-size="11" fill="#fff" text-anchor="middle">40%</text>
<rect x="581" y="391" width="94" height="125" fill="#bfbd69"/><rect x="581" y="391" width="94" height="61.2" fill="#c7c371"/>
<rect x="581.5" y="391.5" width="93" height="124" fill="none" stroke="#fafaf0" stroke-width="1"/>
<text x="628.0" y="530" font-size="11" fill="#fff" text-anchor="middle">60%</text>
<rect x="690" y="391" width="93" height="125" fill="#bfbd4b"/><rect x="690" y="391" width="93" height="61.2" fill="#c9bf50"/>
<rect x="690.5" y="391.5" width="92" height="124" fill="none" stroke="#fafaf0" stroke-width="1"/>
<text x="736.5" y="530" font-size="11" fill="#fff" text-anchor="middle">80%</text>
<rect x="799" y="391" width="93" height="125" fill="#c2bf00"/><rect x="799" y="391" width="93" height="61.2" fill="#c9bf12"/>
<rect x="799.5" y="391.5" width="92" height="124" fill="none" stroke="#fafaf0" stroke-width="1"/>
<text x="845.5" y="530" font-size="11" fill="#fff" text-anchor="middle">100%</text>
<text transform="translate(356.7,418.3) rotate(-90)" font-size="11" font-weight="bold" fill="#fff" text-anchor="middle">Actual</text>
<text transform="translate(356.7,488.3) rotate(-90)" font-size="11" font-weight="bold" fill="#fff" text-anchor="middle">Target</text>
<rect x="910.3" y="30.1" width="644.9" height="516.8" fill="none" stroke="#c6c00e" stroke-width="6.5"/>
<text x="1232.3" y="49.8" font-size="12.6" fill="#d6d6d6" text-anchor="middle" textLength="79" lengthAdjust="spacingAndGlyphs">CIE 1976 u'v'</text>
<rect x="948.5" y="54.5" width="600.0" height="462.0" fill="#232323"/>
<clipPath id="hs"><path d="M1204.5 503.7L1204.4 503.7L1204.2 504.0L1203.8 504.0L1203.4 504.2L1202.9 504.2L1202.3 504.2L1201.4 504.2L1200.0 503.5L1197.4 501.8L1193.9 499.1L1188.8 495.0L1182.5 489.5L1174.4 482.8L1163.9 474.1L1151.2 463.5L1135.6 449.3L1116.9 430.2L1092.0 400.1L1062.7 358.9L1030.9 307.7L1000.3 252.3L976.4 199.1L960.1 154.3L951.7 120.9L949.7 97.7L952.9 81.8L960.5 71.7L971.3 66.5L984.2 64.6L998.2 64.1L1012.5 64.3L1027.3 65.0L1043.3 66.1L1060.7 67.7L1079.8 69.7L1101.0 71.9L1124.5 74.6L1150.4 77.5L1179.0 80.8L1210.1 84.4L1243.6 88.3L1279.1 92.4L1315.6 96.6L1350.9 100.7L1385.3 104.6L1416.5 108.2L1444.0 111.4L1467.5 114.1L1487.1 116.4L1503.6 118.3L1518.0 120.0L1530.1 121.4L1539.9 122.5L1547.5 123.3L1557.9 124.5L1566.9 125.6L1570.4 126.0Z"/></clipPath>
<clipPath id="pc"><rect x="948.5" y="54.5" width="600.0" height="462.0"/></clipPath>
<g clip-path="url(#pc)"><g clip-path="url(#hs)">
<rect x="973.6" y="64.0" width="68.6" height="2.6" fill="url(#c0)"/>
<rect x="967.2" y="66.0" width="97.3" height="2.6" fill="url(#c1)"/>
<rect x="963.0" y="68.0" width="121.0" height="2.6" fill="url(#c2)"/>
<rect x="959.3" y="70.0" width="143.3" height="2.6" fill="url(#c3)"/>
<rect x="957.7" y="72.0" width="162.6" height="2.6" fill="url(#c4)"/>
<rect x="956.2" y="74.0" width="181.8" height="2.6" fill="url(#c5)"/>
<rect x="954.7" y="76.0" width="200.9" height="2.6" fill="url(#c6)"/>
<rect x="953.2" y="78.0" width="219.8" height="2.6" fill="url(#c7)"/>
<rect x="951.8" y="80.0" width="238.5" height="2.6" fill="url(#c8)"/>
<rect x="951.4" y="82.0" width="256.2" height="2.6" fill="url(#c9)"/>
<rect x="951.0" y="84.0" width="273.9" height="2.6" fill="url(#c10)"/>
<rect x="950.6" y="86.0" width="291.6" height="2.6" fill="url(#c11)"/>
<rect x="950.2" y="88.0" width="309.4" height="2.6" fill="url(#c12)"/>
<rect x="949.8" y="90.0" width="327.1" height="2.6" fill="url(#c13)"/>
<rect x="949.4" y="92.0" width="344.8" height="2.6" fill="url(#c14)"/>
<rect x="949.0" y="94.0" width="362.4" height="2.6" fill="url(#c15)"/>
<rect x="948.7" y="96.0" width="380.1" height="2.6" fill="url(#c16)"/>
<rect x="948.7" y="98.0" width="397.4" height="2.6" fill="url(#c17)"/>
<rect x="948.9" y="100.0" width="414.5" height="2.6" fill="url(#c18)"/>
<rect x="949.1" y="102.0" width="431.7" height="2.6" fill="url(#c19)"/>
<rect x="949.2" y="104.0" width="449.0" height="2.6" fill="url(#c20)"/>
<rect x="949.4" y="106.0" width="466.3" height="2.6" fill="url(#c21)"/>
<rect x="949.6" y="108.0" width="483.3" height="2.6" fill="url(#c22)"/>
<rect x="949.8" y="110.0" width="500.4" height="2.6" fill="url(#c23)"/>
<rect x="949.9" y="112.0" width="517.5" height="2.6" fill="url(#c24)"/>
<rect x="950.1" y="114.0" width="534.8" height="2.6" fill="url(#c25)"/>
<rect x="950.3" y="116.0" width="551.9" height="2.6" fill="url(#c26)"/>
<rect x="950.5" y="118.0" width="569.0" height="2.6" fill="url(#c27)"/>
<rect x="950.6" y="120.0" width="586.2" height="2.6" fill="url(#c28)"/>
<rect x="951.0" y="122.0" width="597.5" height="2.6" fill="url(#c29)"/>
<rect x="951.5" y="124.0" width="597.0" height="2.6" fill="url(#c30)"/>
<rect x="952.0" y="126.0" width="596.5" height="2.6" fill="url(#c31)"/>
<rect x="952.5" y="128.0" width="596.0" height="2.6" fill="url(#c32)"/>
<rect x="953.0" y="130.0" width="595.5" height="2.6" fill="url(#c33)"/>
<rect x="953.5" y="132.0" width="595.0" height="2.6" fill="url(#c34)"/>
<rect x="954.0" y="134.0" width="594.5" height="2.6" fill="url(#c35)"/>
<rect x="954.5" y="136.0" width="594.0" height="2.6" fill="url(#c36)"/>
<rect x="955.0" y="138.0" width="593.5" height="2.6" fill="url(#c37)"/>
<rect x="955.5" y="140.0" width="593.0" height="2.6" fill="url(#c38)"/>
<rect x="956.0" y="142.0" width="592.5" height="2.6" fill="url(#c39)"/>
<rect x="956.5" y="144.0" width="592.0" height="2.6" fill="url(#c40)"/>
<rect x="957.0" y="146.0" width="591.5" height="2.6" fill="url(#c41)"/>
<rect x="957.5" y="148.0" width="591.0" height="2.6" fill="url(#c42)"/>
<rect x="958.0" y="150.0" width="590.1" height="2.6" fill="url(#c43)"/>
<rect x="958.5" y="152.0" width="587.7" height="2.6" fill="url(#c44)"/>
<rect x="959.1" y="154.0" width="585.2" height="2.6" fill="url(#c45)"/>
<rect x="959.8" y="156.0" width="582.6" height="2.6" fill="url(#c46)"/>
<rect x="960.5" y="158.0" width="579.9" height="2.6" fill="url(#c47)"/>
<rect x="961.2" y="160.0" width="577.3" height="2.6" fill="url(#c48)"/>
<rect x="961.9" y="162.0" width="574.6" height="2.6" fill="url(#c49)"/>
<rect x="962.6" y="164.0" width="571.9" height="2.6" fill="url(#c50)"/>
<rect x="963.4" y="166.0" width="569.3" height="2.6" fill="url(#c51)"/>
<rect x="964.1" y="168.0" width="566.6" height="2.6" fill="url(#c52)"/>
<rect x="964.8" y="170.0" width="564.0" height="2.6" fill="url(#c53)"/>
<rect x="965.5" y="172.0" width="561.3" height="2.6" fill="url(#c54)"/>
<rect x="966.3" y="174.0" width="558.6" height="2.6" fill="url(#c55)"/>
<rect x="967.0" y="176.0" width="556.0" height="2.6" fill="url(#c56)"/>
<rect x="967.7" y="178.0" width="553.3" height="2.6" fill="url(#c57)"/>
<rect x="968.4" y="180.0" width="550.6" height="2.6" fill="url(#c58)"/>
<rect x="969.2" y="182.0" width="548.0" height="2.6" fill="url(#c59)"/>
<rect x="969.9" y="184.0" width="545.3" height="2.6" fill="url(#c60)"/>
<rect x="970.6" y="186.0" width="542.7" height="2.6" fill="url(#c61)"/>
<rect x="971.3" y="188.0" width="540.0" height="2.6" fill="url(#c62)"/>
<rect x="972.1" y="190.0" width="537.3" height="2.6" fill="url(#c63)"/>
<rect x="972.8" y="192.0" width="534.7" height="2.6" fill="url(#c64)"/>
<rect x="973.5" y="194.0" width="532.0" height="2.6" fill="url(#c65)"/>
<rect x="974.2" y="196.0" width="529.4" height="2.6" fill="url(#c66)"/>
<rect x="975.0" y="198.0" width="526.7" height="2.6" fill="url(#c67)"/>
<rect x="975.8" y="200.0" width="524.0" height="2.6" fill="url(#c68)"/>
<rect x="976.7" y="202.0" width="521.1" height="2.6" fill="url(#c69)"/>
<rect x="977.6" y="204.0" width="518.3" height="2.6" fill="url(#c70)"/>
<rect x="978.5" y="206.0" width="515.4" height="2.6" fill="url(#c71)"/>
<rect x="979.4" y="208.0" width="512.6" height="2.6" fill="url(#c72)"/>
<rect x="980.3" y="210.0" width="509.8" height="2.6" fill="url(#c73)"/>
<rect x="981.2" y="212.0" width="506.9" height="2.6" fill="url(#c74)"/>
<rect x="982.1" y="214.0" width="504.1" height="2.6" fill="url(#c75)"/>
<rect x="983.0" y="216.0" width="501.3" height="2.6" fill="url(#c76)"/>
<rect x="983.9" y="218.0" width="498.4" height="2.6" fill="url(#c77)"/>
<rect x="984.8" y="220.0" width="495.6" height="2.6" fill="url(#c78)"/>
<rect x="985.7" y="222.0" width="492.7" height="2.6" fill="url(#c79)"/>
<rect x="986.6" y="224.0" width="489.9" height="2.6" fill="url(#c80)"/>
<rect x="987.5" y="226.0" width="487.1" height="2.6" fill="url(#c81)"/>
<rect x="988.4" y="228.0" width="484.2" height="2.6" fill="url(#c82)"/>
<rect x="989.3" y="230.0" width="481.4" height="2.6" fill="url(#c83)"/>
<rect x="990.2" y="232.0" width="478.6" height="2.6" fill="url(#c84)"/>
<rect x="991.1" y="234.0" width="475.7" height="2.6" fill="url(#c85)"/>
<rect x="992.0" y="236.0" width="472.9" height="2.6" fill="url(#c86)"/>
<rect x="992.9" y="238.0" width="470.1" height="2.6" fill="url(#c87)"/>
<rect x="993.8" y="240.0" width="467.2" height="2.6" fill="url(#c88)"/>
<rect x="994.7" y="242.0" width="464.4" height="2.6" fill="url(#c89)"/>
<rect x="995.6" y="244.0" width="461.5" height="2.6" fill="url(#c90)"/>
<rect x="996.5" y="246.0" width="458.7" height="2.6" fill="url(#c91)"/>
<rect x="997.4" y="248.0" width="455.9" height="2.6" fill="url(#c92)"/>
<rect x="998.3" y="250.0" width="453.0" height="2.6" fill="url(#c93)"/>
<rect x="999.2" y="252.0" width="450.2" height="2.6" fill="url(#c94)"/>
<rect x="1000.2" y="254.0" width="447.2" height="2.6" fill="url(#c95)"/>
<rect x="1001.3" y="256.0" width="444.1" height="2.6" fill="url(#c96)"/>
<rect x="1002.4" y="258.0" width="441.1" height="2.6" fill="url(#c97)"/>
<rect x="1003.5" y="260.0" width="438.1" height="2.6" fill="url(#c98)"/>
<rect x="1004.6" y="262.0" width="435.0" height="2.6" fill="url(#c99)"/>
<rect x="1005.8" y="264.0" width="432.0" height="2.6" fill="url(#c100)"/>
<rect x="1006.9" y="266.0" width="428.9" height="2.6" fill="url(#c101)"/>
<rect x="1008.0" y="268.0" width="425.9" height="2.6" fill="url(#c102)"/>
<rect x="1009.1" y="270.0" width="422.8" height="2.6" fill="url(#c103)"/>
<rect x="1010.2" y="272.0" width="419.8" height="2.6" fill="url(#c104)"/>
<rect x="1011.3" y="274.0" width="416.8" height="2.6" fill="url(#c105)"/>
<rect x="1012.4" y="276.0" width="413.7" height="2.6" fill="url(#c106)"/>
<rect x="1013.5" y="278.0" width="410.7" height="2.6" fill="url(#c107)"/>
<rect x="1014.6" y="280.0" width="407.6" height="2.6" fill="url(#c108)"/>
<rect x="1015.7" y="282.0" width="404.6" height="2.6" fill="url(#c109)"/>
<rect x="1016.8" y="284.0" width="401.5" height="2.6" fill="url(#c110)"/>
<rect x="1017.9" y="286.0" width="398.5" height="2.6" fill="url(#c111)"/>
<rect x="1019.0" y="288.0" width="395.5" height="2.6" fill="url(#c112)"/>
<rect x="1020.1" y="290.0" width="392.4" height="2.6" fill="url(#c113)"/>
<rect x="1021.2" y="292.0" width="389.4" height="2.6" fill="url(#c114)"/>
<rect x="1022.3" y="294.0" width="386.3" height="2.6" fill="url(#c115)"/>
<rect x="1023.4" y="296.0" width="383.3" height="2.6" fill="url(#c116)"/>
<rect x="1024.5" y="298.0" width="380.2" height="2.6" fill="url(#c117)"/>
<rect x="1025.6" y="300.0" width="377.2" height="2.6" fill="url(#c118)"/>
<rect x="1026.8" y="302.0" width="374.2" height="2.6" fill="url(#c119)"/>
<rect x="1027.9" y="304.0" width="371.1" height="2.6" fill="url(#c120)"/>
<rect x="1029.0" y="306.0" width="368.1" height="2.6" fill="url(#c121)"/>
<rect x="1030.1" y="308.0" width="365.0" height="2.6" fill="url(#c122)"/>
<rect x="1031.3" y="310.0" width="361.8" height="2.6" fill="url(#c123)"/>
<rect x="1032.6" y="312.0" width="358.7" height="2.6" fill="url(#c124)"/>
<rect x="1033.8" y="314.0" width="355.5" height="2.6" fill="url(#c125)"/>
<rect x="1035.1" y="316.0" width="352.3" height="2.6" fill="url(#c126)"/>
<rect x="1036.3" y="318.0" width="349.1" height="2.6" fill="url(#c127)"/>
<rect x="1037.5" y="320.0" width="345.9" height="2.6" fill="url(#c128)"/>
<rect x="1038.8" y="322.0" width="342.8" height="2.6" fill="url(#c129)"/>
<rect x="1040.0" y="324.0" width="339.6" height="2.6" fill="url(#c130)"/>
<rect x="1041.3" y="326.0" width="336.4" height="2.6" fill="url(#c131)"/>
<rect x="1042.5" y="328.0" width="333.2" height="2.6" fill="url(#c132)"/>
<rect x="1043.8" y="330.0" width="330.0" height="2.6" fill="url(#c133)"/>
<rect x="1045.0" y="332.0" width="326.9" height="2.6" fill="url(#c134)"/>
<rect x="1046.2" y="334.0" width="323.7" height="2.6" fill="url(#c135)"/>
<rect x="1047.5" y="336.0" width="320.5" height="2.6" fill="url(#c136)"/>
<rect x="1048.7" y="338.0" width="317.3" height="2.6" fill="url(#c137)"/>
<rect x="1050.0" y="340.0" width="314.1" height="2.6" fill="url(#c138)"/>
<rect x="1051.2" y="342.0" width="311.0" height="2.6" fill="url(#c139)"/>
<rect x="1052.4" y="344.0" width="307.8" height="2.6" fill="url(#c140)"/>
<rect x="1053.7" y="346.0" width="304.6" height="2.6" fill="url(#c141)"/>
<rect x="1054.9" y="348.0" width="301.4" height="2.6" fill="url(#c142)"/>
<rect x="1056.2" y="350.0" width="298.3" height="2.6" fill="url(#c143)"/>
<rect x="1057.4" y="352.0" width="295.1" height="2.6" fill="url(#c144)"/>
<rect x="1058.7" y="354.0" width="291.9" height="2.6" fill="url(#c145)"/>
<rect x="1059.9" y="356.0" width="288.7" height="2.6" fill="url(#c146)"/>
<rect x="1061.1" y="358.0" width="285.5" height="2.6" fill="url(#c147)"/>
<rect x="1062.5" y="360.0" width="282.3" height="2.6" fill="url(#c148)"/>
<rect x="1063.9" y="362.0" width="278.9" height="2.6" fill="url(#c149)"/>
<rect x="1065.3" y="364.0" width="275.5" height="2.6" fill="url(#c150)"/>
<rect x="1066.8" y="366.0" width="272.2" height="2.6" fill="url(#c151)"/>
<rect x="1068.2" y="368.0" width="268.8" height="2.6" fill="url(#c152)"/>
<rect x="1069.6" y="370.0" width="265.4" height="2.6" fill="url(#c153)"/>
<rect x="1071.0" y="372.0" width="262.1" height="2.6" fill="url(#c154)"/>
<rect x="1072.5" y="374.0" width="258.7" height="2.6" fill="url(#c155)"/>
<rect x="1073.9" y="376.0" width="255.4" height="2.6" fill="url(#c156)"/>
<rect x="1075.3" y="378.0" width="252.0" height="2.6" fill="url(#c157)"/>
<rect x="1076.7" y="380.0" width="248.6" height="2.6" fill="url(#c158)"/>
<rect x="1078.1" y="382.0" width="245.3" height="2.6" fill="url(#c159)"/>
<rect x="1079.6" y="384.0" width="241.9" height="2.6" fill="url(#c160)"/>
<rect x="1081.0" y="386.0" width="238.6" height="2.6" fill="url(#c161)"/>
<rect x="1082.4" y="388.0" width="235.2" height="2.6" fill="url(#c162)"/>
<rect x="1083.8" y="390.0" width="231.8" height="2.6" fill="url(#c163)"/>
<rect x="1085.3" y="392.0" width="228.5" height="2.6" fill="url(#c164)"/>
<rect x="1086.7" y="394.0" width="225.1" height="2.6" fill="url(#c165)"/>
<rect x="1088.1" y="396.0" width="221.7" height="2.6" fill="url(#c166)"/>
<rect x="1089.5" y="398.0" width="218.4" height="2.6" fill="url(#c167)"/>
<rect x="1091.0" y="400.0" width="215.0" height="2.6" fill="url(#c168)"/>
<rect x="1092.6" y="402.0" width="211.4" height="2.6" fill="url(#c169)"/>
<rect x="1094.3" y="404.0" width="207.9" height="2.6" fill="url(#c170)"/>
<rect x="1095.9" y="406.0" width="204.3" height="2.6" fill="url(#c171)"/>
<rect x="1097.6" y="408.0" width="200.7" height="2.6" fill="url(#c172)"/>
<rect x="1099.2" y="410.0" width="197.1" height="2.6" fill="url(#c173)"/>
<rect x="1100.9" y="412.0" width="193.5" height="2.6" fill="url(#c174)"/>
<rect x="1102.5" y="414.0" width="189.9" height="2.6" fill="url(#c175)"/>
<rect x="1104.2" y="416.0" width="186.3" height="2.6" fill="url(#c176)"/>
<rect x="1105.8" y="418.0" width="182.7" height="2.6" fill="url(#c177)"/>
<rect x="1107.5" y="420.0" width="179.2" height="2.6" fill="url(#c178)"/>
<rect x="1109.1" y="422.0" width="175.6" height="2.6" fill="url(#c179)"/>
<rect x="1110.8" y="424.0" width="172.0" height="2.6" fill="url(#c180)"/>
<rect x="1112.4" y="426.0" width="168.4" height="2.6" fill="url(#c181)"/>
<rect x="1114.1" y="428.0" width="164.8" height="2.6" fill="url(#c182)"/>
<rect x="1115.7" y="430.0" width="161.2" height="2.6" fill="url(#c183)"/>
<rect x="1117.6" y="432.0" width="157.4" height="2.6" fill="url(#c184)"/>
<rect x="1119.6" y="434.0" width="153.5" height="2.6" fill="url(#c185)"/>
<rect x="1121.6" y="436.0" width="149.6" height="2.6" fill="url(#c186)"/>
<rect x="1123.5" y="438.0" width="145.7" height="2.6" fill="url(#c187)"/>
<rect x="1125.5" y="440.0" width="141.8" height="2.6" fill="url(#c188)"/>
<rect x="1127.4" y="442.0" width="137.9" height="2.6" fill="url(#c189)"/>
<rect x="1129.4" y="444.0" width="134.0" height="2.6" fill="url(#c190)"/>
<rect x="1131.3" y="446.0" width="130.1" height="2.6" fill="url(#c191)"/>
<rect x="1133.3" y="448.0" width="126.2" height="2.6" fill="url(#c192)"/>
<rect x="1135.3" y="450.0" width="122.2" height="2.6" fill="url(#c193)"/>
<rect x="1137.5" y="452.0" width="118.1" height="2.6" fill="url(#c194)"/>
<rect x="1139.7" y="454.0" width="113.9" height="2.6" fill="url(#c195)"/>
<rect x="1141.9" y="456.0" width="109.8" height="2.6" fill="url(#c196)"/>
<rect x="1144.1" y="458.0" width="105.7" height="2.6" fill="url(#c197)"/>
<rect x="1146.4" y="460.0" width="101.5" height="2.6" fill="url(#c198)"/>
<rect x="1148.6" y="462.0" width="97.4" height="2.6" fill="url(#c199)"/>
<rect x="1150.8" y="464.0" width="93.2" height="2.6" fill="url(#c200)"/>
<rect x="1153.2" y="466.0" width="88.9" height="2.6" fill="url(#c201)"/>
<rect x="1155.6" y="468.0" width="84.6" height="2.6" fill="url(#c202)"/>
<rect x="1158.0" y="470.0" width="80.2" height="2.6" fill="url(#c203)"/>
<rect x="1160.3" y="472.0" width="75.9" height="2.6" fill="url(#c204)"/>
<rect x="1162.7" y="474.0" width="71.6" height="2.6" fill="url(#c205)"/>
<rect x="1165.1" y="476.0" width="67.2" height="2.6" fill="url(#c206)"/>
<rect x="1167.6" y="478.0" width="62.9" height="2.6" fill="url(#c207)"/>
<rect x="1170.0" y="480.0" width="58.5" height="2.6" fill="url(#c208)"/>
<rect x="1172.4" y="482.0" width="54.1" height="2.6" fill="url(#c209)"/>
<rect x="1174.8" y="484.0" width="49.8" height="2.6" fill="url(#c210)"/>
<rect x="1177.3" y="486.0" width="45.4" height="2.6" fill="url(#c211)"/>
<rect x="1179.7" y="488.0" width="41.1" height="2.6" fill="url(#c212)"/>
<rect x="1182.0" y="490.0" width="36.8" height="2.6" fill="url(#c213)"/>
<rect x="1184.4" y="492.0" width="32.5" height="2.6" fill="url(#c214)"/>
<rect x="1186.7" y="494.0" width="28.2" height="2.6" fill="url(#c215)"/>
<rect x="1189.1" y="496.0" width="23.9" height="2.6" fill="url(#c216)"/>
<rect x="1191.6" y="498.0" width="19.5" height="2.6" fill="url(#c217)"/>
<rect x="1194.1" y="500.0" width="15.0" height="2.6" fill="url(#c218)"/>
<rect x="1196.7" y="502.0" width="10.5" height="2.6" fill="url(#c219)"/>
<rect x="1200.0" y="504.0" width="4.8" height="2.6" fill="url(#c220)"/>
<path d="M940 50H1560V520H940ZM1398.0 113.3L1073.0 82.8L1123.3 394.8Z" fill="#000" fill-opacity="0.40" fill-rule="evenodd"/>
</g></g>
<rect x="948.5" y="54.5" width="600.0" height="462.0" fill="none" stroke="#8a8a8a" stroke-width="1"/>
<path d="M948.5 54.5V516.5H1548.5" stroke="#a8a8a8" stroke-width="1" fill="none"/>
<text x="942" y="523.60" font-size="13" fill="#d6d6d6" text-anchor="end" textLength="7.6" lengthAdjust="spacingAndGlyphs">0</text>
<text x="942" y="483.73" font-size="13" fill="#d6d6d6" text-anchor="end" textLength="25.75" lengthAdjust="spacingAndGlyphs">0,05</text>
<text x="942" y="445.46" font-size="13" fill="#d6d6d6" text-anchor="end" textLength="18.75" lengthAdjust="spacingAndGlyphs">0,1</text>
<text x="942" y="407.19" font-size="13" fill="#d6d6d6" text-anchor="end" textLength="25.75" lengthAdjust="spacingAndGlyphs">0,15</text>
<text x="942" y="368.92" font-size="13" fill="#d6d6d6" text-anchor="end" textLength="18.75" lengthAdjust="spacingAndGlyphs">0,2</text>
<text x="942" y="330.65" font-size="13" fill="#d6d6d6" text-anchor="end" textLength="25.75" lengthAdjust="spacingAndGlyphs">0,25</text>
<text x="942" y="292.38" font-size="13" fill="#d6d6d6" text-anchor="end" textLength="18.75" lengthAdjust="spacingAndGlyphs">0,3</text>
<text x="942" y="254.11" font-size="13" fill="#d6d6d6" text-anchor="end" textLength="25.75" lengthAdjust="spacingAndGlyphs">0,35</text>
<text x="942" y="215.84" font-size="13" fill="#d6d6d6" text-anchor="end" textLength="18.75" lengthAdjust="spacingAndGlyphs">0,4</text>
<text x="942" y="177.57" font-size="13" fill="#d6d6d6" text-anchor="end" textLength="25.75" lengthAdjust="spacingAndGlyphs">0,45</text>
<text x="942" y="139.30" font-size="13" fill="#d6d6d6" text-anchor="end" textLength="18.75" lengthAdjust="spacingAndGlyphs">0,5</text>
<text x="942" y="101.03" font-size="13" fill="#d6d6d6" text-anchor="end" textLength="25.75" lengthAdjust="spacingAndGlyphs">0,55</text>
<text x="948.50" y="537" font-size="13" fill="#d6d6d6" text-anchor="middle" textLength="7.6" lengthAdjust="spacingAndGlyphs">0</text>
<text x="998.40" y="537" font-size="13" fill="#d6d6d6" text-anchor="middle" textLength="25.75" lengthAdjust="spacingAndGlyphs">0,05</text>
<text x="1048.30" y="537" font-size="13" fill="#d6d6d6" text-anchor="middle" textLength="18.75" lengthAdjust="spacingAndGlyphs">0,1</text>
<text x="1098.20" y="537" font-size="13" fill="#d6d6d6" text-anchor="middle" textLength="25.75" lengthAdjust="spacingAndGlyphs">0,15</text>
<text x="1148.10" y="537" font-size="13" fill="#d6d6d6" text-anchor="middle" textLength="18.75" lengthAdjust="spacingAndGlyphs">0,2</text>
<text x="1198.00" y="537" font-size="13" fill="#d6d6d6" text-anchor="middle" textLength="25.75" lengthAdjust="spacingAndGlyphs">0,25</text>
<text x="1247.90" y="537" font-size="13" fill="#d6d6d6" text-anchor="middle" textLength="18.75" lengthAdjust="spacingAndGlyphs">0,3</text>
<text x="1297.80" y="537" font-size="13" fill="#d6d6d6" text-anchor="middle" textLength="25.75" lengthAdjust="spacingAndGlyphs">0,35</text>
<text x="1347.70" y="537" font-size="13" fill="#d6d6d6" text-anchor="middle" textLength="18.75" lengthAdjust="spacingAndGlyphs">0,4</text>
<text x="1397.60" y="537" font-size="13" fill="#d6d6d6" text-anchor="middle" textLength="25.75" lengthAdjust="spacingAndGlyphs">0,45</text>
<text x="1447.50" y="537" font-size="13" fill="#d6d6d6" text-anchor="middle" textLength="18.75" lengthAdjust="spacingAndGlyphs">0,5</text>
<text x="1497.40" y="537" font-size="13" fill="#d6d6d6" text-anchor="middle" textLength="25.75" lengthAdjust="spacingAndGlyphs">0,55</text>
<path d="M943 516.50H948.5M943 478.23H948.5M943 439.96H948.5M943 401.69H948.5M943 363.42H948.5M943 325.15H948.5M943 286.88H948.5M943 248.61H948.5M943 210.34H948.5M943 172.07H948.5M943 133.80H948.5M943 95.53H948.5M948.50 516.5v6.5M998.40 516.5v6.5M1048.30 516.5v6.5M1098.20 516.5v6.5M1148.10 516.5v6.5M1198.00 516.5v6.5M1247.90 516.5v6.5M1297.80 516.5v6.5M1347.70 516.5v6.5M1397.60 516.5v6.5M1447.50 516.5v6.5M1497.40 516.5v6.5" stroke="#e0e0e0" stroke-width="1.4" fill="none"/>
<g fill="#fff" fill-opacity="0.1" stroke="#fff" stroke-opacity="0.9" stroke-width="1.3"><rect x="1119.6" y="128.5" width="13" height="13"/><rect x="1103.5" y="113.5" width="13" height="13"/><rect x="1088.9" y="99.5" width="13" height="13"/><rect x="1077.5" y="88.3" width="13" height="13"/><rect x="1065.9" y="76.4" width="13" height="13"/><rect x="1141.7" y="132.7" width="13" height="13"/><rect x="1142.5" y="118.5" width="13" height="13"/><rect x="1143.5" y="105.8" width="13" height="13"/><rect x="1143.7" y="95.1" width="13" height="13"/><rect x="1145.5" y="84.5" width="13" height="13"/><rect x="1184.5" y="141.5" width="13" height="13"/><rect x="1234.5" y="132.4" width="13" height="13"/><rect x="1280.4" y="126.4" width="13" height="13"/><rect x="1331.5" y="117.3" width="13" height="13"/><rect x="1391.5" y="107.3" width="13" height="13"/><rect x="1155.5" y="164.4" width="13" height="13"/><rect x="1173.4" y="182.4" width="13" height="13"/><rect x="1191.5" y="201.4" width="13" height="13"/><rect x="1215.5" y="225.5" width="13" height="13"/><rect x="1246.5" y="255.3" width="13" height="13"/><rect x="1136.5" y="177.5" width="13" height="13"/><rect x="1133.5" y="211.5" width="13" height="13"/><rect x="1129.5" y="254.5" width="13" height="13"/><rect x="1124.4" y="307.5" width="13" height="13"/><rect x="1117.5" y="388.3" width="13" height="13"/><rect x="1127.6" y="151.4" width="13" height="13"/><rect x="1115.7" y="153.4" width="13" height="13"/><rect x="1103.3" y="155.5" width="13" height="13"/><rect x="1091.5" y="157.4" width="13" height="13"/><rect x="1080.2" y="159.7" width="13" height="13"/></g>
<rect x="1138.6" y="149.5" width="13" height="13" fill="#fff" fill-opacity="0.5" stroke="#000" stroke-width="1.4"/>
<g stroke="#000" stroke-opacity="0.95" stroke-width="1.3" fill-opacity="0.92"><circle cx="1126.5" cy="136.4" r="3.9" fill="#a2b49e"/><circle cx="1110.4" cy="120.6" r="3.9" fill="#8ab282"/><circle cx="1096.5" cy="107.4" r="3.9" fill="#70aa68"/><circle cx="1085.5" cy="94.6" r="3.9" fill="#54a24e"/><circle cx="1075.4" cy="85.5" r="3.9" fill="#16a010"/><circle cx="1149.6" cy="140.4" r="3.9" fill="#b6b69a"/><circle cx="1151.4" cy="125.5" r="3.9" fill="#bab682"/><circle cx="1152.4" cy="112.4" r="3.9" fill="#bab262"/><circle cx="1155.5" cy="102.5" r="3.9" fill="#bab240"/><circle cx="1156.6" cy="92.4" r="3.9" fill="#c2ba18"/><circle cx="1192.4" cy="148.4" r="3.9" fill="#c28a8a"/><circle cx="1247.5" cy="139.4" r="3.9" fill="#c06868"/><circle cx="1298.6" cy="130.4" r="3.9" fill="#c84e4e"/><circle cx="1354.4" cy="121.3" r="3.9" fill="#c23030"/><circle cx="1409.6" cy="112.5" r="3.9" fill="#c00404"/><circle cx="1161.5" cy="171.4" r="3.9" fill="#ba9aba"/><circle cx="1178.5" cy="187.5" r="3.9" fill="#c28ac2"/><circle cx="1196.6" cy="205.5" r="3.9" fill="#c270c2"/><circle cx="1220.6" cy="228.5" r="3.9" fill="#c050c0"/><circle cx="1248.5" cy="256.5" r="3.9" fill="#b010b0"/><circle cx="1141.6" cy="182.6" r="3.9" fill="#9e9ec2"/><circle cx="1135.5" cy="217.6" r="3.9" fill="#8a8aca"/><circle cx="1128.5" cy="258.0" r="3.9" fill="#7272ca"/><circle cx="1118.4" cy="311.6" r="3.9" fill="#5a5aca"/><circle cx="1106.9" cy="380.3" r="3.9" fill="#0a0ab0"/><circle cx="1132.6" cy="157.4" r="3.9" fill="#a2bab6"/><circle cx="1121.0" cy="159.6" r="3.9" fill="#96bcb8"/><circle cx="1108.6" cy="162.4" r="3.9" fill="#80bcb8"/><circle cx="1095.5" cy="163.5" r="3.9" fill="#62bcbc"/><circle cx="1083.9" cy="166.5" r="3.9" fill="#10b2b2"/><circle cx="1145.8" cy="155.6" r="3.9" fill="#fff"/></g>
<rect x="1341" y="371.3" width="205.2" height="140.6" fill="#363636"/>
<rect x="1344.5" y="374.75" width="198.25" height="133.75" fill="url(#in1)"/>
<path d="M1344.5 374.75H1542.75V495.5L1344.5 389.25Z" fill="#000" fill-opacity="0.40"/>
<rect x="1344.25" y="374.5" width="198.75" height="134.25" fill="none" stroke="#6e6e62" stroke-width="1.8"/>
<rect x="1435.5" y="434.5" width="13" height="13" fill="#fff" fill-opacity="0.12" stroke="#fff" stroke-opacity="0.9" stroke-width="1.3"/>
<circle cx="1464.5" cy="462.5" r="3.9" fill="#b8b414" stroke="#000" stroke-width="1.1"/>
<text x="40.75" y="579.5" font-size="26" fill="#f2f2f2" textLength="218" lengthAdjust="spacingAndGlyphs">Avg dE2000: 1,42</text>
<text x="37.5" y="617.5" font-size="26" fill="#f2f2f2" textLength="225.5" lengthAdjust="spacingAndGlyphs">Max dE2000: 5,11</text>
<text x="7.5" y="662.5" font-size="26.5" fill="#f2f2f2" textLength="204.5" lengthAdjust="spacingAndGlyphs">Current Reading</text>
<text x="7" y="695.5" font-size="21.5" fill="#f2f2f2" textLength="95.5" lengthAdjust="spacingAndGlyphs">x: 0,4247</text>
<text x="154.5" y="695.5" font-size="21.5" fill="#f2f2f2" textLength="95.5" lengthAdjust="spacingAndGlyphs">y: 0,4971</text>
<text x="7.5" y="734.5" font-size="22" fill="#f2f2f2" textLength="89.5" lengthAdjust="spacingAndGlyphs">fL: 56,45</text>
<text x="7.2" y="767" font-size="22" fill="#f2f2f2" textLength="149" lengthAdjust="spacingAndGlyphs">cd/m²: 193,41</text>
<text x="431.25" y="581" font-size="12.8" fill="#d6d6d6" text-anchor="middle" textLength="77.5" lengthAdjust="spacingAndGlyphs">RGB Balance</text>
<rect x="328.5" y="586.5" width="234.0" height="169.0" fill="#232323" stroke="#8a8a8a" stroke-width="1"/>
<path d="M328.5 604.5H562.5M328.5 638.5H562.5M328.5 671.5H562.5M328.5 706.5H562.5M328.5 739.5H562.5" stroke="#8a8a8a" stroke-width="1" fill="none"/>
<path d="M324.5 604.5H328.5M324.5 638.5H328.5M324.5 671.5H328.5M324.5 706.5H328.5M324.5 739.5H328.5M328.5 755.5v5M562.5 755.5v5" stroke="#d8d8d8" stroke-width="1.3" fill="none"/>
<text x="321.75" y="608.7" font-size="11.6" fill="#d6d6d6" text-anchor="end" textLength="22.5" lengthAdjust="spacingAndGlyphs">104</text>
<text x="321.75" y="642.7" font-size="11.6" fill="#d6d6d6" text-anchor="end" textLength="22.5" lengthAdjust="spacingAndGlyphs">102</text>
<text x="321.75" y="675.7" font-size="11.6" fill="#d6d6d6" text-anchor="end" textLength="22.5" lengthAdjust="spacingAndGlyphs">100</text>
<text x="321.75" y="710.7" font-size="11.6" fill="#d6d6d6" text-anchor="end" textLength="15" lengthAdjust="spacingAndGlyphs">98</text>
<text x="321.75" y="743.7" font-size="11.6" fill="#d6d6d6" text-anchor="end" textLength="15" lengthAdjust="spacingAndGlyphs">96</text>
<rect x="352.25" y="626.0" width="59.75" height="130.0" fill="url(#rr)" stroke="#000" stroke-width="1"/>
<rect x="414.25" y="674.25" width="60.25" height="81.75" fill="url(#gg)" stroke="#000" stroke-width="1"/>
<rect x="477.0" y="597.0" width="60.0" height="159.0" fill="url(#bb)" stroke="#000" stroke-width="1"/>
<path d="M328.5 755.5H562.5" stroke="#b0b0b0" stroke-width="1.2"/>
<text x="445.5" y="770.75" font-size="12.8" fill="#d6d6d6" text-anchor="middle" textLength="33" lengthAdjust="spacingAndGlyphs">100%</text>
<rect x="582" y="557" width="684" height="221" fill="#000"/>
<rect x="583" y="558" width="681" height="13.5" fill="#3c3c3c"/>
<rect x="583" y="571.5" width="681" height="12.25" fill="#161616"/>
<rect x="583" y="583.75" width="681" height="24.30" fill="#464646"/>
<rect x="583" y="607.75" width="681" height="25.05" fill="#808080"/>
<rect x="583" y="632.5" width="681" height="24.30" fill="#464646"/>
<rect x="583" y="656.5" width="681" height="24.55" fill="#808080"/>
<rect x="583" y="680.75" width="681" height="24.55" fill="#464646"/>
<rect x="583" y="705" width="681" height="24.05" fill="#808080"/>
<rect x="583" y="728.75" width="681" height="25.30" fill="#464646"/>
<rect x="583" y="753.75" width="681" height="24.05" fill="#808080"/>
<text x="815.4" y="575.75" font-size="12.2" fill="#fff" text-anchor="middle" textLength="36.75" lengthAdjust="spacingAndGlyphs" font-weight="bold">20%</text>
<text x="915.4" y="575.75" font-size="12.2" fill="#fff" text-anchor="middle" textLength="36.75" lengthAdjust="spacingAndGlyphs" font-weight="bold">40%</text>
<text x="1015.4" y="575.75" font-size="12.2" fill="#fff" text-anchor="middle" textLength="36.75" lengthAdjust="spacingAndGlyphs" font-weight="bold">60%</text>
<text x="1115.4" y="575.75" font-size="12.2" fill="#fff" text-anchor="middle" textLength="36.75" lengthAdjust="spacingAndGlyphs" font-weight="bold">80%</text>
<text x="1215.4" y="575.75" font-size="12.2" fill="#fff" text-anchor="middle" textLength="48.5" lengthAdjust="spacingAndGlyphs" font-weight="bold">100%</text>
<text x="600" y="601.75" font-size="14.6" fill="#f4f4f4" textLength="80" lengthAdjust="spacingAndGlyphs" font-weight="bold">x: CIE31</text>
<text x="771.25" y="601.75" font-size="14.6" fill="#f0f0f0" textLength="63.75" lengthAdjust="spacingAndGlyphs">0,3357</text>
<text x="871.25" y="601.75" font-size="14.6" fill="#f0f0f0" textLength="63.75" lengthAdjust="spacingAndGlyphs">0,3586</text>
<text x="971.25" y="601.75" font-size="14.6" fill="#f0f0f0" textLength="63.75" lengthAdjust="spacingAndGlyphs">0,3816</text>
<text x="1071.25" y="601.75" font-size="14.6" fill="#f0f0f0" textLength="63.75" lengthAdjust="spacingAndGlyphs">0,4025</text>
<text x="1171.25" y="601.75" font-size="14.6" fill="#f0f0f0" textLength="63.75" lengthAdjust="spacingAndGlyphs">0,4247</text>
<text x="600" y="625.75" font-size="14.6" fill="#f4f4f4" textLength="80" lengthAdjust="spacingAndGlyphs" font-weight="bold">y: CIE31</text>
<text x="771.25" y="625.75" font-size="14.6" fill="#f0f0f0" textLength="63.75" lengthAdjust="spacingAndGlyphs">0,3631</text>
<text x="871.25" y="625.75" font-size="14.6" fill="#f0f0f0" textLength="63.75" lengthAdjust="spacingAndGlyphs">0,3977</text>
<text x="971.25" y="625.75" font-size="14.6" fill="#f0f0f0" textLength="63.75" lengthAdjust="spacingAndGlyphs">0,4323</text>
<text x="1071.25" y="625.75" font-size="14.6" fill="#f0f0f0" textLength="63.75" lengthAdjust="spacingAndGlyphs">0,4637</text>
<text x="1171.25" y="625.75" font-size="14.6" fill="#f0f0f0" textLength="63.75" lengthAdjust="spacingAndGlyphs">0,4971</text>
<text x="600" y="650.50" font-size="14.6" fill="#f4f4f4" textLength="12" lengthAdjust="spacingAndGlyphs" font-weight="bold">Y</text>
<text x="771.25" y="650.50" font-size="14.6" fill="#f0f0f0" textLength="87" lengthAdjust="spacingAndGlyphs">205,7922</text>
<text x="871.25" y="650.50" font-size="14.6" fill="#f0f0f0" textLength="87" lengthAdjust="spacingAndGlyphs">201,7598</text>
<text x="971.25" y="650.50" font-size="14.6" fill="#f0f0f0" textLength="87" lengthAdjust="spacingAndGlyphs">198,3776</text>
<text x="1071.25" y="650.50" font-size="14.6" fill="#f0f0f0" textLength="87" lengthAdjust="spacingAndGlyphs">195,8652</text>
<text x="1171.25" y="650.50" font-size="14.6" fill="#f0f0f0" textLength="87" lengthAdjust="spacingAndGlyphs">193,4063</text>
<text x="600" y="674.50" font-size="14.6" fill="#f4f4f4" textLength="146.75" lengthAdjust="spacingAndGlyphs" font-weight="bold">Target x:CIE31</text>
<text x="771.25" y="674.50" font-size="14.6" fill="#f0f0f0" textLength="63.75" lengthAdjust="spacingAndGlyphs">0,3344</text>
<text x="871.25" y="674.50" font-size="14.6" fill="#f0f0f0" textLength="63.75" lengthAdjust="spacingAndGlyphs">0,3564</text>
<text x="971.25" y="674.50" font-size="14.6" fill="#f0f0f0" textLength="63.75" lengthAdjust="spacingAndGlyphs">0,3773</text>
<text x="1071.25" y="674.50" font-size="14.6" fill="#f0f0f0" textLength="63.75" lengthAdjust="spacingAndGlyphs">0,3969</text>
<text x="1171.25" y="674.50" font-size="14.6" fill="#f0f0f0" textLength="63.75" lengthAdjust="spacingAndGlyphs">0,4193</text>
<text x="600" y="698.75" font-size="14.6" fill="#f4f4f4" textLength="146.75" lengthAdjust="spacingAndGlyphs" font-weight="bold">Target y:CIE31</text>
<text x="771.25" y="698.75" font-size="14.6" fill="#f0f0f0" textLength="63.75" lengthAdjust="spacingAndGlyphs">0,3648</text>
<text x="871.25" y="698.75" font-size="14.6" fill="#f0f0f0" textLength="63.75" lengthAdjust="spacingAndGlyphs">0,4013</text>
<text x="971.25" y="698.75" font-size="14.6" fill="#f0f0f0" textLength="63.75" lengthAdjust="spacingAndGlyphs">0,4358</text>
<text x="1071.25" y="698.75" font-size="14.6" fill="#f0f0f0" textLength="63.75" lengthAdjust="spacingAndGlyphs">0,4682</text>
<text x="1171.25" y="698.75" font-size="14.6" fill="#f0f0f0" textLength="63.75" lengthAdjust="spacingAndGlyphs">0,5053</text>
<text x="600" y="723.00" font-size="14.6" fill="#f4f4f4" textLength="84" lengthAdjust="spacingAndGlyphs" font-weight="bold">Target Y</text>
<text x="771.25" y="723.00" font-size="14.6" fill="#f0f0f0" textLength="87" lengthAdjust="spacingAndGlyphs">200,2211</text>
<text x="871.25" y="723.00" font-size="14.6" fill="#f0f0f0" textLength="87" lengthAdjust="spacingAndGlyphs">196,7066</text>
<text x="971.25" y="723.00" font-size="14.6" fill="#f0f0f0" textLength="87" lengthAdjust="spacingAndGlyphs">194,0063</text>
<text x="1071.25" y="723.00" font-size="14.6" fill="#f0f0f0" textLength="87" lengthAdjust="spacingAndGlyphs">191,8870</text>
<text x="1171.25" y="723.00" font-size="14.6" fill="#f0f0f0" textLength="87" lengthAdjust="spacingAndGlyphs">189,8382</text>
<text x="600" y="746.75" font-size="14.6" fill="#f4f4f4" textLength="83" lengthAdjust="spacingAndGlyphs" font-weight="bold">ΔE 2000</text>
<text x="771.25" y="746.75" font-size="14.6" fill="#f0f0f0" textLength="63.75" lengthAdjust="spacingAndGlyphs">1,3536</text>
<text x="871.25" y="746.75" font-size="14.6" fill="#f0f0f0" textLength="63.75" lengthAdjust="spacingAndGlyphs">1,5083</text>
<text x="971.25" y="746.75" font-size="14.6" fill="#f0f0f0" textLength="63.75" lengthAdjust="spacingAndGlyphs">1,6541</text>
<text x="1071.25" y="746.75" font-size="14.6" fill="#f0f0f0" textLength="63.75" lengthAdjust="spacingAndGlyphs">1,8067</text>
<text x="1171.25" y="746.75" font-size="14.6" fill="#f0f0f0" textLength="63.75" lengthAdjust="spacingAndGlyphs">1,8615</text>
<text x="600" y="771.75" font-size="14.6" fill="#f4f4f4" textLength="67" lengthAdjust="spacingAndGlyphs" font-weight="bold">ΔE ITP</text>
<text x="771.25" y="771.75" font-size="14.6" fill="#f0f0f0" textLength="63.75" lengthAdjust="spacingAndGlyphs">2,5174</text>
<text x="871.25" y="771.75" font-size="14.6" fill="#f0f0f0" textLength="63.75" lengthAdjust="spacingAndGlyphs">3,1156</text>
<text x="971.25" y="771.75" font-size="14.6" fill="#f0f0f0" textLength="63.75" lengthAdjust="spacingAndGlyphs">3,6117</text>
<text x="1071.25" y="771.75" font-size="14.6" fill="#f0f0f0" textLength="63.75" lengthAdjust="spacingAndGlyphs">4,1551</text>
<text x="1171.25" y="771.75" font-size="14.6" fill="#f0f0f0" textLength="63.75" lengthAdjust="spacingAndGlyphs">5,0883</text>
<rect x="0" y="793.7" width="1552" height="58.299999999999955" fill="url(#bbg)"/>
<path d="M-4 856V797.7Q-4 793.7 0 793.7H34.9Q38.9 793.7 38.9 797.7V856Z" fill="url(#tab)"/>
<circle cx="16.25" cy="802.8" r="7.3" fill="url(#circ)"/><path d="M12.2 804.8L16.25 799.6L20.3 804.8Z" fill="#2c2c2c"/>
<rect x="-4" y="820.2" width="38.3" height="30" rx="3.5" fill="#ffff00"/>
<rect x="38.9" y="793.7" width="6" height="60" fill="#262626"/>
<path d="M44.9 856V797.7Q44.9 793.7 48.9 793.7H191.20000000000002Q195.20000000000002 793.7 195.20000000000002 797.7V856Z" fill="url(#tab)"/>
<rect x="50.4" y="799.2" width="139.8" height="36" rx="3" fill="#bfbfa4" stroke="#000" stroke-opacity="0.18" stroke-width="1"/>
<text x="120.2" y="849.6" font-size="10.2" fill="#222" text-anchor="middle">20%</text>
<path d="M197.2 856V797.7Q197.2 793.7 201.2 793.7H343.5Q347.5 793.7 347.5 797.7V856Z" fill="url(#tab)"/>
<rect x="202.7" y="799.2" width="139.8" height="36" rx="3" fill="#c1be88" stroke="#000" stroke-opacity="0.18" stroke-width="1"/>
<text x="272.5" y="849.6" font-size="10.2" fill="#222" text-anchor="middle">40%</text>
<path d="M349.3 856V797.7Q349.3 793.7 353.3 793.7H495.6Q499.6 793.7 499.6 797.7V856Z" fill="url(#tab)"/>
<rect x="354.8" y="799.2" width="139.8" height="36" rx="3" fill="#c0be6a" stroke="#000" stroke-opacity="0.18" stroke-width="1"/>
<text x="424.6" y="849.6" font-size="10.2" fill="#222" text-anchor="middle">60%</text>
<path d="M501.4 856V797.7Q501.4 793.7 505.4 793.7H647.7Q651.7 793.7 651.7 797.7V856Z" fill="url(#tab)"/>
<rect x="506.9" y="799.2" width="139.8" height="36" rx="3" fill="#c0be4c" stroke="#000" stroke-opacity="0.18" stroke-width="1"/>
<text x="576.7" y="849.6" font-size="10.2" fill="#222" text-anchor="middle">80%</text>
<path d="M652.6 856V797.7Q652.6 793.7 656.6 793.7H798.9000000000001Q802.9000000000001 793.7 802.9000000000001 797.7V856Z" fill="url(#tabs)"/>
<rect x="658.1" y="799.2" width="139.8" height="36" rx="3" fill="#c4c000" stroke="#000" stroke-opacity="0.18" stroke-width="1"/>
<text x="727.9" y="849.6" font-size="10.2" fill="#fff" text-anchor="middle" font-weight="bold">100%</text>
<rect x="1235.9" y="794.7" width="330" height="60" fill="#262626"/>
<path d="M1235.9 811.9V798.7Q1235.9 793.7 1240.9 793.7H1279Q1284 793.7 1284 798.7V811.9Z" fill="url(#t2)"/>
<circle cx="1260.4" cy="803.2" r="7.2" fill="url(#circ)"/><path d="M1256.3 805.2L1260.4 800L1264.5 805.2Z" fill="#2c2c2c"/>
<rect x="1235.9" y="813" width="48.1" height="40" fill="url(#t3)"/>
<rect x="1245.6" y="819" width="28.8" height="28.4" rx="4" fill="url(#stp)" stroke="#262626" stroke-width="2.2"/>
<rect x="1253.3" y="827" width="13.3" height="13.3" fill="#000"/>
<rect x="1285" y="793.7" width="46" height="30.1" fill="url(#btn)"/>
<circle cx="1307.9" cy="809" r="9.9" fill="url(#circ2)"/>
<rect x="1331.9" y="793.7" width="44.09999999999991" height="30.1" fill="url(#btn)"/>
<circle cx="1354" cy="809" r="9.9" fill="url(#circ2)"/>
<rect x="1376.9" y="793.7" width="44.09999999999991" height="30.1" fill="url(#btn)"/>
<circle cx="1398.9" cy="809" r="9.9" fill="url(#circ2)"/>
<rect x="1422.1" y="793.7" width="43.90000000000009" height="30.1" fill="url(#btn)"/>
<circle cx="1444.1" cy="809" r="9.9" fill="url(#circ2)"/>
<rect x="1467.1" y="793.7" width="44.100000000000136" height="30.1" fill="url(#btn)"/>
<circle cx="1488.8" cy="809" r="9.9" fill="url(#circ2)"/>
<rect x="1304.1" y="805.2" width="7.7" height="7.7" fill="#2a2a2a"/>
<path d="M1350.8 804V814L1359.6 809Z" fill="#2a2a2a"/>
<path d="M1396.2 804.6H1393.9V813.8H1396.2M1401.6 804.6H1403.9V813.8H1401.6" stroke="#2a2a2a" stroke-width="1.9" fill="none"/><rect x="1396.3" y="808.3" width="1.9" height="1.9" fill="#2a2a2a"/><rect x="1399.6" y="808.3" width="1.9" height="1.9" fill="#2a2a2a"/>
<path d="M1444.1 809C1442.4 806.4 1438.2 806.2 1438.2 809C1438.2 811.8 1442.4 811.6 1444.1 809C1445.8 806.4 1450 806.2 1450 809C1450 811.8 1445.8 811.6 1444.1 809Z" stroke="#2a2a2a" stroke-width="1.6" fill="none"/>
<path d="M1484.4 808.3A4.6 4.6 0 0 1 1492.4 805.9M1493.2 809.7A4.6 4.6 0 0 1 1485.2 812.1" stroke="#2a2a2a" stroke-width="2.1" fill="none"/><path d="M1494.6 803.2V807.6H1490.2Z" fill="#2a2a2a"/><path d="M1483 814.8V810.4H1487.4Z" fill="#2a2a2a"/>
<rect x="1511.2" y="793.7" width="41" height="30.1" fill="url(#dk)"/>
<circle cx="1535" cy="809" r="10" fill="url(#dkc)"/>
<path d="M1285 853V830Q1285 825.2 1290 825.2H1421V853Z" fill="url(#nav)"/>
<rect x="1422.1" y="825.2" width="131" height="28" fill="url(#nav)"/>
<circle cx="1315.7" cy="840" r="9.9" fill="url(#circ3)"/><circle cx="1528.8" cy="840" r="9.9" fill="url(#circ3)"/>
<path d="M1315.2 835.6L1311.4 840L1315.2 844.4M1319.8 835.6L1316 840L1319.8 844.4" stroke="#333" stroke-width="1.3" fill="none"/>
<path d="M1524.7 835.6L1528.5 840L1524.7 844.4M1529.3 835.6L1533.1 840L1529.3 844.4" stroke="#333" stroke-width="1.3" fill="none"/>
<g stroke="#303030" stroke-width="0.5">
<text x="1343" y="847.6" font-size="21.5" fill="#303030" textLength="50" lengthAdjust="spacingAndGlyphs">Back</text>
<text x="1450" y="847.6" font-size="21.5" fill="#303030" textLength="51" lengthAdjust="spacingAndGlyphs">Next</text>
</g>
</svg></body></html>
